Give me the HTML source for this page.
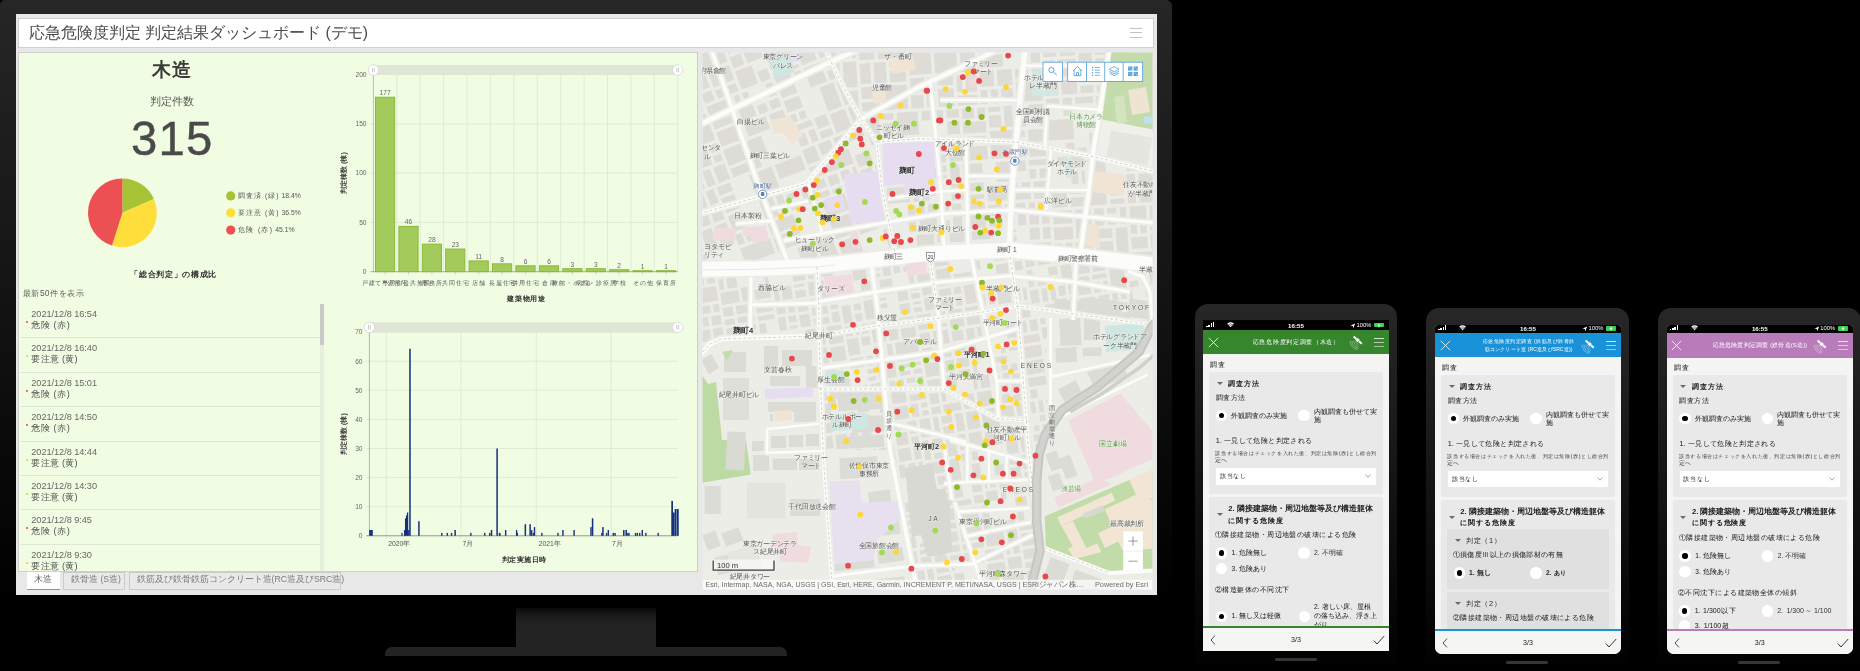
<!DOCTYPE html>
<html lang="ja"><head><meta charset="utf-8"><title>dashboard</title><style>
html,body{margin:0;padding:0;background:#000;}
body{width:1860px;height:671px;position:relative;overflow:hidden;font-family:"Liberation Sans",sans-serif;}
.a{position:absolute;}
.t{position:absolute;white-space:nowrap;}
.aa{position:absolute;left:0;top:0;width:1860px;height:671px;will-change:transform;}
</style></head><body><div class="aa">
<div class="a" style="left:0;top:0;width:1172px;height:610px;border-radius:5px 6px 6px 6px;background:linear-gradient(#272727 0px,#262626 4px,#131313 302px,#000 600px);"></div>
<div class="a" style="left:516px;top:608px;width:140px;height:40px;background:linear-gradient(#0a0a0a,#1b1b1b 8px,#222 16px,#232323);"></div>
<div class="a" style="left:385px;top:647px;width:402px;height:9px;border-radius:7px 7px 0 0;background:#232323;"></div>
<div class="a" style="left:15.5px;top:14px;width:1141.5px;height:580.5px;background:#e8e8e8;"></div>
<div class="a" style="left:18.5px;top:18.5px;width:1134px;height:28.5px;background:#fff;box-shadow:0 0 0 1px #cfcfcf;"></div>
<div class="t" style="left:28.8px;top:23.4px;font-size:16px;line-height:19.2px;color:#4a4a4a;font-weight:normal;font-size:15.84px;width:337.4px;text-align:justify;text-align-last:justify;text-justify:inter-character;">応急危険度判定 判定結果ダッシュボード (デモ)</div>
<div class="a" style="left:1130px;top:27.6px;width:11.8px;height:1.3px;background:#c2c2c2;"></div>
<div class="a" style="left:1130px;top:32.1px;width:11.8px;height:1.3px;background:#c2c2c2;"></div>
<div class="a" style="left:1130px;top:36.6px;width:11.8px;height:1.3px;background:#c2c2c2;"></div>
<div class="a" style="left:19px;top:52.5px;width:677.5px;height:518.5px;background:#f0fde2;box-shadow:0 0 0 1px #cdcdcd;"></div>
<div class="t" style="left:152.3px;top:58.4px;font-size:19.4px;line-height:23.3px;color:#3a3a3a;font-weight:bold;width:39.0px;text-align:justify;text-align-last:justify;text-justify:inter-character;">木造</div>
<div class="t" style="left:149.9px;top:94.5px;font-size:10.9px;line-height:13.1px;color:#555;font-weight:normal;width:44.0px;text-align:justify;text-align-last:justify;text-justify:inter-character;">判定件数</div>
<div class="t" style="left:-28.4px;width:400px;text-align:center;top:110.5px;font-size:47.2px;line-height:56.6px;color:#4a4a4a;font-weight:normal;-webkit-text-stroke:0.45px #4a4a4a;letter-spacing:1.2px;text-indent:1.2px;">315</div>
<svg class="a" style="left:0;top:0" width="700" height="600" viewBox="0 0 700 600"><path d="M122.4,212.8 L122.40,178.40 A34.4,34.4 0 0 1 153.88,198.94 Z" fill="#a5c334"/><path d="M122.4,212.8 L153.88,198.94 A34.4,34.4 0 0 1 111.98,245.58 Z" fill="#ffde3b"/><path d="M122.4,212.8 L111.98,245.58 A34.4,34.4 0 0 1 122.40,178.40 Z" fill="#ec5052"/><circle cx="230.7" cy="195.9" r="4.6" fill="#a5c334"/><circle cx="230.7" cy="212.8" r="4.6" fill="#ffde3b"/><circle cx="230.7" cy="230.1" r="4.6" fill="#ec5052"/></svg>
<div class="t" style="left:238.2px;top:192.1px;font-size:6.8px;line-height:8.2px;color:#555;font-weight:normal;width:62.6px;text-align:justify;text-align-last:justify;text-justify:inter-character;">調査済 (緑)  18.4%</div>
<div class="t" style="left:238.2px;top:209.0px;font-size:6.8px;line-height:8.2px;color:#555;font-weight:normal;width:62.6px;text-align:justify;text-align-last:justify;text-justify:inter-character;">要注意 (黄)  36.5%</div>
<div class="t" style="left:238.2px;top:226.3px;font-size:6.8px;line-height:8.2px;color:#555;font-weight:normal;width:56.3px;text-align:justify;text-align-last:justify;text-justify:inter-character;">危険 (赤)  45.1%</div>
<div class="t" style="left:130.3px;top:269.3px;font-size:8.4px;line-height:10.1px;color:#333;font-weight:bold;width:86.0px;text-align:justify;text-align-last:justify;text-justify:inter-character;">「総合判定」の構成比</div>
<div class="t" style="left:22.9px;top:287.7px;font-size:8.8px;line-height:10.6px;color:#5a5a5a;font-weight:normal;font-size:8.37px;width:60.9px;text-align:justify;text-align-last:justify;text-justify:inter-character;">最新50件を表示</div>
<div class="a" style="left:19.5px;top:300px;width:305px;height:271px;overflow:hidden;"><div class="a" style="left:0;top:37.4px;width:300.5px;height:1px;background:#dde7d5;"></div><div class="t" style="left:11.8px;top:9.0px;font-size:9.2px;line-height:11px;color:#666;letter-spacing:-0.048px;">2021/12/8 16:54</div><div class="t" style="left:11.8px;top:20.0px;font-size:9.2px;line-height:11px;color:#555;width:38.4px;text-align:justify;text-align-last:justify;text-justify:inter-character;">危険 (赤)</div><div class="a" style="left:6px;top:20.9px;width:2.2px;height:2.2px;border-radius:1.1px;background:#e5474b;"></div><div class="a" style="left:0;top:71.8px;width:300.5px;height:1px;background:#dde7d5;"></div><div class="t" style="left:11.8px;top:43.4px;font-size:9.2px;line-height:11px;color:#666;letter-spacing:-0.048px;">2021/12/8 16:40</div><div class="t" style="left:11.8px;top:54.4px;font-size:9.2px;line-height:11px;color:#555;width:46.3px;text-align:justify;text-align-last:justify;text-justify:inter-character;">要注意 (黄)</div><div class="a" style="left:6px;top:55.3px;width:2.2px;height:2.2px;border-radius:1.1px;background:#f3c62f;"></div><div class="a" style="left:0;top:106.2px;width:300.5px;height:1px;background:#dde7d5;"></div><div class="t" style="left:11.8px;top:77.8px;font-size:9.2px;line-height:11px;color:#666;letter-spacing:-0.048px;">2021/12/8 15:01</div><div class="t" style="left:11.8px;top:88.8px;font-size:9.2px;line-height:11px;color:#555;width:38.4px;text-align:justify;text-align-last:justify;text-justify:inter-character;">危険 (赤)</div><div class="a" style="left:6px;top:89.7px;width:2.2px;height:2.2px;border-radius:1.1px;background:#e5474b;"></div><div class="a" style="left:0;top:140.6px;width:300.5px;height:1px;background:#dde7d5;"></div><div class="t" style="left:11.8px;top:112.2px;font-size:9.2px;line-height:11px;color:#666;letter-spacing:-0.048px;">2021/12/8 14:50</div><div class="t" style="left:11.8px;top:123.2px;font-size:9.2px;line-height:11px;color:#555;width:38.4px;text-align:justify;text-align-last:justify;text-justify:inter-character;">危険 (赤)</div><div class="a" style="left:6px;top:124.1px;width:2.2px;height:2.2px;border-radius:1.1px;background:#e5474b;"></div><div class="a" style="left:0;top:175.0px;width:300.5px;height:1px;background:#dde7d5;"></div><div class="t" style="left:11.8px;top:146.6px;font-size:9.2px;line-height:11px;color:#666;letter-spacing:-0.048px;">2021/12/8 14:44</div><div class="t" style="left:11.8px;top:157.6px;font-size:9.2px;line-height:11px;color:#555;width:46.3px;text-align:justify;text-align-last:justify;text-justify:inter-character;">要注意 (黄)</div><div class="a" style="left:6px;top:158.5px;width:2.2px;height:2.2px;border-radius:1.1px;background:#f3c62f;"></div><div class="a" style="left:0;top:209.4px;width:300.5px;height:1px;background:#dde7d5;"></div><div class="t" style="left:11.8px;top:181.0px;font-size:9.2px;line-height:11px;color:#666;letter-spacing:-0.048px;">2021/12/8 14:30</div><div class="t" style="left:11.8px;top:192.0px;font-size:9.2px;line-height:11px;color:#555;width:46.3px;text-align:justify;text-align-last:justify;text-justify:inter-character;">要注意 (黄)</div><div class="a" style="left:6px;top:192.9px;width:2.2px;height:2.2px;border-radius:1.1px;background:#f3c62f;"></div><div class="a" style="left:0;top:243.8px;width:300.5px;height:1px;background:#dde7d5;"></div><div class="t" style="left:11.8px;top:215.4px;font-size:9.2px;line-height:11px;color:#666;letter-spacing:-0.051px;">2021/12/8 9:45</div><div class="t" style="left:11.8px;top:226.4px;font-size:9.2px;line-height:11px;color:#555;width:38.4px;text-align:justify;text-align-last:justify;text-justify:inter-character;">危険 (赤)</div><div class="a" style="left:6px;top:227.3px;width:2.2px;height:2.2px;border-radius:1.1px;background:#e5474b;"></div><div class="a" style="left:0;top:278.2px;width:300.5px;height:1px;background:#dde7d5;"></div><div class="t" style="left:11.8px;top:249.8px;font-size:9.2px;line-height:11px;color:#666;letter-spacing:-0.051px;">2021/12/8 9:30</div><div class="t" style="left:11.8px;top:260.8px;font-size:9.2px;line-height:11px;color:#555;width:46.3px;text-align:justify;text-align-last:justify;text-justify:inter-character;">要注意 (黄)</div><div class="a" style="left:6px;top:261.7px;width:2.2px;height:2.2px;border-radius:1.1px;background:#f3c62f;"></div><div class="a" style="left:300.7px;top:3.5px;width:4px;height:268px;background:#e6efdc;"></div><div class="a" style="left:300.7px;top:3.8px;width:4px;height:41.2px;background:#c9c9c9;"></div></div>
<svg class="a" style="left:0;top:0" width="700" height="600" viewBox="0 0 700 600" shape-rendering="auto"><rect x="373.4" y="65" width="304.30000000000007" height="9.9" fill="#e0e6d6"/><line x1="370.4" y1="222.4" x2="677.7" y2="222.4" stroke="#dbe7cf" stroke-width="0.8"/><line x1="370.4" y1="173.1" x2="677.7" y2="173.1" stroke="#dbe7cf" stroke-width="0.8"/><line x1="370.4" y1="123.8" x2="677.7" y2="123.8" stroke="#dbe7cf" stroke-width="0.8"/><line x1="370.4" y1="74.5" x2="677.7" y2="74.5" stroke="#dbe7cf" stroke-width="0.8"/><line x1="396.8" y1="74.9" x2="396.8" y2="271.7" stroke="#dbe7cf" stroke-width="0.8"/><line x1="385.1" y1="271.7" x2="385.1" y2="274.7" stroke="#c3cfb6" stroke-width="0.8"/><line x1="420.2" y1="74.9" x2="420.2" y2="271.7" stroke="#dbe7cf" stroke-width="0.8"/><line x1="408.5" y1="271.7" x2="408.5" y2="274.7" stroke="#c3cfb6" stroke-width="0.8"/><line x1="443.6" y1="74.9" x2="443.6" y2="271.7" stroke="#dbe7cf" stroke-width="0.8"/><line x1="431.9" y1="271.7" x2="431.9" y2="274.7" stroke="#c3cfb6" stroke-width="0.8"/><line x1="467.0" y1="74.9" x2="467.0" y2="271.7" stroke="#dbe7cf" stroke-width="0.8"/><line x1="455.3" y1="271.7" x2="455.3" y2="274.7" stroke="#c3cfb6" stroke-width="0.8"/><line x1="490.4" y1="74.9" x2="490.4" y2="271.7" stroke="#dbe7cf" stroke-width="0.8"/><line x1="478.7" y1="271.7" x2="478.7" y2="274.7" stroke="#c3cfb6" stroke-width="0.8"/><line x1="513.8" y1="74.9" x2="513.8" y2="271.7" stroke="#dbe7cf" stroke-width="0.8"/><line x1="502.1" y1="271.7" x2="502.1" y2="274.7" stroke="#c3cfb6" stroke-width="0.8"/><line x1="537.3" y1="74.9" x2="537.3" y2="271.7" stroke="#dbe7cf" stroke-width="0.8"/><line x1="525.5" y1="271.7" x2="525.5" y2="274.7" stroke="#c3cfb6" stroke-width="0.8"/><line x1="560.7" y1="74.9" x2="560.7" y2="271.7" stroke="#dbe7cf" stroke-width="0.8"/><line x1="549.0" y1="271.7" x2="549.0" y2="274.7" stroke="#c3cfb6" stroke-width="0.8"/><line x1="584.1" y1="74.9" x2="584.1" y2="271.7" stroke="#dbe7cf" stroke-width="0.8"/><line x1="572.4" y1="271.7" x2="572.4" y2="274.7" stroke="#c3cfb6" stroke-width="0.8"/><line x1="607.5" y1="74.9" x2="607.5" y2="271.7" stroke="#dbe7cf" stroke-width="0.8"/><line x1="595.8" y1="271.7" x2="595.8" y2="274.7" stroke="#c3cfb6" stroke-width="0.8"/><line x1="630.9" y1="74.9" x2="630.9" y2="271.7" stroke="#dbe7cf" stroke-width="0.8"/><line x1="619.2" y1="271.7" x2="619.2" y2="274.7" stroke="#c3cfb6" stroke-width="0.8"/><line x1="654.3" y1="74.9" x2="654.3" y2="271.7" stroke="#dbe7cf" stroke-width="0.8"/><line x1="642.6" y1="271.7" x2="642.6" y2="274.7" stroke="#c3cfb6" stroke-width="0.8"/><line x1="677.7" y1="74.9" x2="677.7" y2="271.7" stroke="#dbe7cf" stroke-width="0.8"/><line x1="666.0" y1="271.7" x2="666.0" y2="274.7" stroke="#c3cfb6" stroke-width="0.8"/><line x1="373.4" y1="74.9" x2="373.4" y2="271.7" stroke="#b9c6ab" stroke-width="1"/><line x1="370.4" y1="271.7" x2="677.7" y2="271.7" stroke="#9fb08f" stroke-width="1"/><rect x="375.5" y="97.2" width="19.2" height="174.5" fill="#a3cb5c" stroke="#88b52f" stroke-width="0.9"/><rect x="398.9" y="226.3" width="19.2" height="45.4" fill="#a3cb5c" stroke="#88b52f" stroke-width="0.9"/><rect x="422.3" y="244.1" width="19.2" height="27.6" fill="#a3cb5c" stroke="#88b52f" stroke-width="0.9"/><rect x="445.7" y="249.0" width="19.2" height="22.7" fill="#a3cb5c" stroke="#88b52f" stroke-width="0.9"/><rect x="469.1" y="260.9" width="19.2" height="10.8" fill="#a3cb5c" stroke="#88b52f" stroke-width="0.9"/><rect x="492.5" y="263.8" width="19.2" height="7.9" fill="#a3cb5c" stroke="#88b52f" stroke-width="0.9"/><rect x="515.9" y="265.8" width="19.2" height="5.9" fill="#a3cb5c" stroke="#88b52f" stroke-width="0.9"/><rect x="539.4" y="265.8" width="19.2" height="5.9" fill="#a3cb5c" stroke="#88b52f" stroke-width="0.9"/><rect x="562.8" y="268.7" width="19.2" height="3.0" fill="#a3cb5c" stroke="#88b52f" stroke-width="0.9"/><rect x="586.2" y="268.7" width="19.2" height="3.0" fill="#a3cb5c" stroke="#88b52f" stroke-width="0.9"/><rect x="609.6" y="269.7" width="19.2" height="2.0" fill="#a3cb5c" stroke="#88b52f" stroke-width="0.9"/><rect x="633.0" y="270.7" width="19.2" height="1.0" fill="#a3cb5c" stroke="#88b52f" stroke-width="0.9"/><rect x="656.4" y="270.7" width="19.2" height="1.0" fill="#a3cb5c" stroke="#88b52f" stroke-width="0.9"/><circle cx="373.4" cy="70" r="5.2" fill="#fff" stroke="#d6d6d6" stroke-width="0.8"/><line x1="372.5" y1="67.7" x2="372.5" y2="72.3" stroke="#aaa" stroke-width="0.6"/><line x1="374.29999999999995" y1="67.7" x2="374.29999999999995" y2="72.3" stroke="#aaa" stroke-width="0.6"/><circle cx="677.7" cy="70" r="5.2" fill="#fff" stroke="#d6d6d6" stroke-width="0.8"/><line x1="676.8000000000001" y1="67.7" x2="676.8000000000001" y2="72.3" stroke="#aaa" stroke-width="0.6"/><line x1="678.6" y1="67.7" x2="678.6" y2="72.3" stroke="#aaa" stroke-width="0.6"/><rect x="369.4" y="322.3" width="308.30000000000007" height="10" fill="#e0e6d6"/><line x1="366.4" y1="506.7" x2="677.7" y2="506.7" stroke="#dbe7cf" stroke-width="0.8"/><line x1="366.4" y1="477.6" x2="677.7" y2="477.6" stroke="#dbe7cf" stroke-width="0.8"/><line x1="366.4" y1="448.5" x2="677.7" y2="448.5" stroke="#dbe7cf" stroke-width="0.8"/><line x1="366.4" y1="419.4" x2="677.7" y2="419.4" stroke="#dbe7cf" stroke-width="0.8"/><line x1="366.4" y1="390.3" x2="677.7" y2="390.3" stroke="#dbe7cf" stroke-width="0.8"/><line x1="366.4" y1="361.2" x2="677.7" y2="361.2" stroke="#dbe7cf" stroke-width="0.8"/><line x1="366.4" y1="332.1" x2="677.7" y2="332.1" stroke="#dbe7cf" stroke-width="0.8"/><line x1="386.3" y1="332.3" x2="386.3" y2="538.8" stroke="#dbe7cf" stroke-width="0.8"/><line x1="460.9" y1="332.3" x2="460.9" y2="538.8" stroke="#dbe7cf" stroke-width="0.8"/><line x1="536.3" y1="332.3" x2="536.3" y2="538.8" stroke="#dbe7cf" stroke-width="0.8"/><line x1="611.1" y1="332.3" x2="611.1" y2="538.8" stroke="#dbe7cf" stroke-width="0.8"/><line x1="369.4" y1="332.3" x2="369.4" y2="535.8" stroke="#9a9a9a" stroke-width="0.7"/><line x1="366.4" y1="535.8" x2="677.7" y2="535.8" stroke="#8f9a86" stroke-width="1"/><rect x="369.18" y="530.0" width="3.6" height="5.8" fill="#14307e"/><rect x="401.41" y="532.9" width="1.2" height="2.9" fill="#14307e"/><rect x="404.00" y="530.0" width="1.2" height="5.8" fill="#14307e"/><rect x="404.99" y="518.3" width="1.2" height="17.5" fill="#14307e"/><rect x="405.99" y="515.4" width="1.2" height="20.4" fill="#14307e"/><rect x="406.93" y="512.5" width="1.3" height="23.3" fill="#14307e"/><rect x="408.12" y="530.0" width="1.3" height="5.8" fill="#14307e"/><rect x="409.22" y="348.7" width="1.5" height="187.1" fill="#14307e"/><rect x="418.17" y="521.2" width="1.5" height="14.6" fill="#14307e"/><rect x="441.10" y="532.9" width="1.4" height="2.9" fill="#14307e"/><rect x="446.67" y="532.9" width="1.4" height="2.9" fill="#14307e"/><rect x="450.84" y="532.9" width="1.4" height="2.9" fill="#14307e"/><rect x="454.37" y="530.0" width="1.5" height="5.8" fill="#14307e"/><rect x="470.14" y="532.9" width="1.4" height="2.9" fill="#14307e"/><rect x="484.06" y="532.9" width="1.4" height="2.9" fill="#14307e"/><rect x="489.04" y="532.9" width="1.4" height="2.9" fill="#14307e"/><rect x="490.78" y="530.0" width="1.5" height="5.8" fill="#14307e"/><rect x="496.35" y="448.5" width="1.5" height="87.3" fill="#14307e"/><rect x="498.78" y="532.9" width="1.8" height="2.9" fill="#14307e"/><rect x="504.95" y="530.0" width="1.4" height="5.8" fill="#14307e"/><rect x="515.94" y="530.0" width="1.3" height="5.8" fill="#14307e"/><rect x="516.79" y="532.9" width="1.2" height="2.9" fill="#14307e"/><rect x="524.60" y="524.2" width="1.5" height="11.6" fill="#14307e"/><rect x="529.37" y="524.2" width="1.5" height="11.6" fill="#14307e"/><rect x="531.06" y="530.0" width="1.3" height="5.8" fill="#14307e"/><rect x="532.65" y="532.9" width="1.3" height="2.9" fill="#14307e"/><rect x="533.80" y="527.1" width="1.4" height="8.7" fill="#14307e"/><rect x="541.16" y="532.9" width="1.4" height="2.9" fill="#14307e"/><rect x="557.27" y="532.9" width="1.4" height="2.9" fill="#14307e"/><rect x="562.24" y="530.0" width="1.4" height="5.8" fill="#14307e"/><rect x="573.38" y="530.0" width="1.4" height="5.8" fill="#14307e"/><rect x="590.29" y="527.1" width="1.4" height="8.7" fill="#14307e"/><rect x="591.83" y="518.3" width="1.5" height="17.5" fill="#14307e"/><rect x="602.18" y="527.1" width="1.5" height="8.7" fill="#14307e"/><rect x="601.13" y="532.9" width="1.2" height="2.9" fill="#14307e"/><rect x="605.86" y="532.9" width="1.3" height="2.9" fill="#14307e"/><rect x="607.60" y="530.0" width="1.4" height="5.8" fill="#14307e"/><rect x="612.57" y="532.9" width="1.4" height="2.9" fill="#14307e"/><rect x="614.36" y="532.9" width="1.4" height="2.9" fill="#14307e"/><rect x="623.06" y="530.0" width="1.5" height="5.8" fill="#14307e"/><rect x="625.45" y="530.0" width="1.5" height="5.8" fill="#14307e"/><rect x="627.14" y="532.9" width="1.3" height="2.9" fill="#14307e"/><rect x="628.34" y="532.9" width="1.3" height="2.9" fill="#14307e"/><rect x="634.85" y="532.9" width="1.4" height="2.9" fill="#14307e"/><rect x="636.64" y="532.9" width="1.4" height="2.9" fill="#14307e"/><rect x="639.03" y="532.9" width="1.4" height="2.9" fill="#14307e"/><rect x="641.61" y="530.0" width="1.4" height="5.8" fill="#14307e"/><rect x="645.19" y="532.9" width="1.4" height="2.9" fill="#14307e"/><rect x="657.53" y="532.9" width="1.4" height="2.9" fill="#14307e"/><rect x="671.30" y="500.9" width="1.7" height="34.9" fill="#14307e"/><rect x="672.89" y="512.5" width="1.7" height="23.3" fill="#14307e"/><rect x="674.63" y="509.0" width="1.8" height="26.8" fill="#14307e"/><rect x="676.72" y="509.0" width="2.0" height="26.8" fill="#14307e"/><circle cx="369.4" cy="327.3" r="5.2" fill="#fff" stroke="#d6d6d6" stroke-width="0.8"/><line x1="368.5" y1="325" x2="368.5" y2="329.6" stroke="#aaa" stroke-width="0.6"/><line x1="370.29999999999995" y1="325" x2="370.29999999999995" y2="329.6" stroke="#aaa" stroke-width="0.6"/><circle cx="677.7" cy="327.3" r="5.2" fill="#fff" stroke="#d6d6d6" stroke-width="0.8"/><line x1="676.8000000000001" y1="325" x2="676.8000000000001" y2="329.6" stroke="#aaa" stroke-width="0.6"/><line x1="678.6" y1="325" x2="678.6" y2="329.6" stroke="#aaa" stroke-width="0.6"/></svg>
<div class="t" style="left:185.1px;width:400px;text-align:center;top:89.0px;font-size:6.6px;line-height:7.9px;color:#666;font-weight:normal;">177</div>
<div class="t" style="left:208.5px;width:400px;text-align:center;top:218.2px;font-size:6.6px;line-height:7.9px;color:#666;font-weight:normal;">46</div>
<div class="t" style="left:231.9px;width:400px;text-align:center;top:235.9px;font-size:6.6px;line-height:7.9px;color:#666;font-weight:normal;">28</div>
<div class="t" style="left:255.3px;width:400px;text-align:center;top:240.9px;font-size:6.6px;line-height:7.9px;color:#666;font-weight:normal;">23</div>
<div class="t" style="left:278.7px;width:400px;text-align:center;top:252.7px;font-size:6.6px;line-height:7.9px;color:#666;font-weight:normal;">11</div>
<div class="t" style="left:302.1px;width:400px;text-align:center;top:255.7px;font-size:6.6px;line-height:7.9px;color:#666;font-weight:normal;">8</div>
<div class="t" style="left:325.5px;width:400px;text-align:center;top:257.6px;font-size:6.6px;line-height:7.9px;color:#666;font-weight:normal;">6</div>
<div class="t" style="left:349.0px;width:400px;text-align:center;top:257.6px;font-size:6.6px;line-height:7.9px;color:#666;font-weight:normal;">6</div>
<div class="t" style="left:372.4px;width:400px;text-align:center;top:260.6px;font-size:6.6px;line-height:7.9px;color:#666;font-weight:normal;">3</div>
<div class="t" style="left:395.8px;width:400px;text-align:center;top:260.6px;font-size:6.6px;line-height:7.9px;color:#666;font-weight:normal;">3</div>
<div class="t" style="left:419.2px;width:400px;text-align:center;top:261.6px;font-size:6.6px;line-height:7.9px;color:#666;font-weight:normal;">2</div>
<div class="t" style="left:442.6px;width:400px;text-align:center;top:262.6px;font-size:6.6px;line-height:7.9px;color:#666;font-weight:normal;">1</div>
<div class="t" style="left:466.0px;width:400px;text-align:center;top:262.6px;font-size:6.6px;line-height:7.9px;color:#666;font-weight:normal;">1</div>
<div class="t" style="left:-33.5px;width:400px;text-align:right;top:268.0px;font-size:6.6px;line-height:7.9px;color:#666;font-weight:normal;">0</div>
<div class="t" style="left:-33.5px;width:400px;text-align:right;top:218.7px;font-size:6.6px;line-height:7.9px;color:#666;font-weight:normal;">50</div>
<div class="t" style="left:-33.5px;width:400px;text-align:right;top:169.4px;font-size:6.6px;line-height:7.9px;color:#666;font-weight:normal;">100</div>
<div class="t" style="left:-33.5px;width:400px;text-align:right;top:120.1px;font-size:6.6px;line-height:7.9px;color:#666;font-weight:normal;">150</div>
<div class="t" style="left:-33.5px;width:400px;text-align:right;top:70.8px;font-size:6.6px;line-height:7.9px;color:#666;font-weight:normal;">200</div>
<div class="t" style="left:361.8px;top:279.4px;font-size:6.6px;line-height:7.9px;color:#555;font-weight:normal;font-size:6.24px;width:46.6px;text-align:justify;text-align-last:justify;text-justify:inter-character;">戸建て専用住宅</div>
<div class="t" style="left:386.9px;top:279.4px;font-size:6.6px;line-height:7.9px;color:#555;font-weight:normal;font-size:6.48px;width:43.2px;text-align:justify;text-align-last:justify;text-justify:inter-character;">公営/公共施設</div>
<div class="t" style="left:421.9px;top:279.4px;font-size:6.6px;line-height:7.9px;color:#555;font-weight:normal;font-size:6.24px;width:20.0px;text-align:justify;text-align-last:justify;text-justify:inter-character;">事務所</div>
<div class="t" style="left:442.0px;top:279.4px;font-size:6.6px;line-height:7.9px;color:#555;font-weight:normal;font-size:6.24px;width:26.6px;text-align:justify;text-align-last:justify;text-justify:inter-character;">共同住宅</div>
<div class="t" style="left:472.1px;top:279.4px;font-size:6.6px;line-height:7.9px;color:#555;font-weight:normal;font-size:6.24px;width:13.3px;text-align:justify;text-align-last:justify;text-justify:inter-character;">店舗</div>
<div class="t" style="left:488.8px;top:279.4px;font-size:6.6px;line-height:7.9px;color:#555;font-weight:normal;font-size:6.24px;width:26.6px;text-align:justify;text-align-last:justify;text-justify:inter-character;">長屋住宅</div>
<div class="t" style="left:512.2px;top:279.4px;font-size:6.6px;line-height:7.9px;color:#555;font-weight:normal;font-size:6.24px;width:26.6px;text-align:justify;text-align-last:justify;text-justify:inter-character;">併用住宅</div>
<div class="t" style="left:542.3px;top:279.4px;font-size:6.6px;line-height:7.9px;color:#555;font-weight:normal;font-size:6.24px;width:13.3px;text-align:justify;text-align-last:justify;text-justify:inter-character;">倉庫</div>
<div class="t" style="left:552.4px;top:279.4px;font-size:6.6px;line-height:7.9px;color:#555;font-weight:normal;font-size:6.24px;width:39.9px;text-align:justify;text-align-last:justify;text-justify:inter-character;">旅館・ホテル</div>
<div class="t" style="left:575.8px;top:279.4px;font-size:6.6px;line-height:7.9px;color:#555;font-weight:normal;font-size:6.24px;width:39.9px;text-align:justify;text-align-last:justify;text-justify:inter-character;">病院・診療所</div>
<div class="t" style="left:612.5px;top:279.4px;font-size:6.6px;line-height:7.9px;color:#555;font-weight:normal;font-size:6.24px;width:13.3px;text-align:justify;text-align-last:justify;text-justify:inter-character;">学校</div>
<div class="t" style="left:632.6px;top:279.4px;font-size:6.6px;line-height:7.9px;color:#555;font-weight:normal;font-size:6.24px;width:20.0px;text-align:justify;text-align-last:justify;text-justify:inter-character;">その他</div>
<div class="t" style="left:656.0px;top:279.4px;font-size:6.6px;line-height:7.9px;color:#555;font-weight:normal;font-size:6.24px;width:20.0px;text-align:justify;text-align-last:justify;text-justify:inter-character;">保育所</div>
<div class="t" style="left:507.0px;top:295.0px;font-size:7.4px;line-height:8.9px;color:#333;font-weight:bold;width:38.0px;text-align:justify;text-align-last:justify;text-justify:inter-character;">建築物用途</div>
<div class="t" style="left:294px;top:168px;width:100px;text-align:center;font-size:7.2px;line-height:10px;color:#444;font-weight:bold;transform:rotate(-90deg);">判定棟数 (棟)</div>
<div class="t" style="left:-37.5px;width:400px;text-align:right;top:532.1px;font-size:6.6px;line-height:7.9px;color:#666;font-weight:normal;">0</div>
<div class="t" style="left:-37.5px;width:400px;text-align:right;top:503.0px;font-size:6.6px;line-height:7.9px;color:#666;font-weight:normal;">10</div>
<div class="t" style="left:-37.5px;width:400px;text-align:right;top:473.9px;font-size:6.6px;line-height:7.9px;color:#666;font-weight:normal;">20</div>
<div class="t" style="left:-37.5px;width:400px;text-align:right;top:444.8px;font-size:6.6px;line-height:7.9px;color:#666;font-weight:normal;">30</div>
<div class="t" style="left:-37.5px;width:400px;text-align:right;top:415.7px;font-size:6.6px;line-height:7.9px;color:#666;font-weight:normal;">40</div>
<div class="t" style="left:-37.5px;width:400px;text-align:right;top:386.6px;font-size:6.6px;line-height:7.9px;color:#666;font-weight:normal;">50</div>
<div class="t" style="left:-37.5px;width:400px;text-align:right;top:357.5px;font-size:6.6px;line-height:7.9px;color:#666;font-weight:normal;">60</div>
<div class="t" style="left:-37.5px;width:400px;text-align:right;top:328.4px;font-size:6.6px;line-height:7.9px;color:#666;font-weight:normal;">70</div>
<div class="t" style="left:199.2px;width:400px;text-align:center;top:540.3px;font-size:6.8px;line-height:8.2px;color:#555;font-weight:normal;">2020年</div>
<div class="t" style="left:267.9px;width:400px;text-align:center;top:540.3px;font-size:6.8px;line-height:8.2px;color:#555;font-weight:normal;">7月</div>
<div class="t" style="left:349.8px;width:400px;text-align:center;top:540.3px;font-size:6.8px;line-height:8.2px;color:#555;font-weight:normal;">2021年</div>
<div class="t" style="left:417.4px;width:400px;text-align:center;top:540.3px;font-size:6.8px;line-height:8.2px;color:#555;font-weight:normal;">7月</div>
<div class="t" style="left:501.5px;top:555.6px;font-size:7.4px;line-height:8.9px;color:#333;font-weight:bold;width:44.5px;text-align:justify;text-align-last:justify;text-justify:inter-character;">判定実施日時</div>
<div class="t" style="left:294px;top:429px;width:100px;text-align:center;font-size:7.2px;line-height:10px;color:#444;font-weight:bold;transform:rotate(-90deg);">判定棟数 (棟)</div>
<div class="a" style="left:26.5px;top:571.5px;width:33.3px;height:17.5px;background:#fff;border-bottom:1.6px solid #5b9fd0;"></div>
<div class="t" style="left:34.2px;top:574.4px;font-size:9.3px;line-height:11.2px;color:#666;font-weight:normal;width:18.0px;text-align:justify;text-align-last:justify;text-justify:inter-character;">木造</div>
<div class="a" style="left:63.3px;top:571.5px;width:62px;height:18.5px;background:#e9e9e9;box-shadow:inset 0 0 0 1px #cbcbcb;"></div>
<div class="t" style="left:71.0px;top:574.4px;font-size:9.3px;line-height:11.2px;color:#7a7a7a;font-weight:normal;font-size:8.65px;width:47.6px;text-align:justify;text-align-last:justify;text-justify:inter-character;">鉄骨造 (S造)</div>
<div class="a" style="left:129.4px;top:571.5px;width:211.8px;height:18.5px;background:#e9e9e9;box-shadow:inset 0 0 0 1px #cbcbcb;"></div>
<div class="t" style="left:136.5px;top:574.4px;font-size:9.3px;line-height:11.2px;color:#7a7a7a;font-weight:normal;font-size:8.71px;width:197.6px;text-align:justify;text-align-last:justify;text-justify:inter-character;">鉄筋及び鉄骨鉄筋コンクリート造(RC造及びSRC造)</div>
<svg class="a" style="left:702px;top:52px" width="452" height="539" viewBox="702 52 452 539" font-family="Liberation Sans, sans-serif"><clipPath id="mapclip"><rect x="702.5" y="52.5" width="450.0" height="537.2"/></clipPath><g clip-path="url(#mapclip)"><rect x="702.5" y="52.5" width="450.0" height="537.2" fill="#edede8"/><clipPath id="bc1"><polygon points="700.0,50.0 826.0,50.0 861.0,119.0 877.0,142.0 884.0,190.0 895.0,252.0 800.0,266.0 700.0,262.0"/></clipPath><g clip-path="url(#bc1)"><path transform="rotate(-21 797.5 158.0)" d="M718.8,65.2h8.5v6.2h-8.5zM718.8,74.8h8.5v5.2h-8.5zM704.6,83.4h22.8v28.1h-22.8zM689.3,114.9h11.5v10.2h-11.5zM689.3,128.6h11.5v4.8h-11.5zM704.2,114.9h11.7v18.5h-11.7zM719.3,114.9h8.0v7.8h-8.0zM719.3,126.2h8.0v7.2h-8.0zM689.3,136.8h11.0v16.4h-11.0zM703.7,136.8h8.1v16.4h-8.1zM715.2,136.8h12.2v16.4h-12.2zM730.7,9.2h20.8v13.9h-20.8zM730.7,26.5h20.8v16.4h-20.8zM754.9,20.5h11.8v6.6h-11.8zM754.9,30.5h11.8v12.4h-11.8zM730.7,46.3h10.5v14.0h-10.5zM730.7,63.7h10.5v10.6h-10.5zM744.6,46.3h10.6v16.0h-10.6zM758.6,46.3h8.1v16.0h-8.1zM744.6,65.7h22.0v8.6h-22.0zM770.1,9.2h13.8v27.1h-13.8zM770.1,39.7h11.5v11.8h-11.5zM785.0,39.7h16.2v11.8h-16.2zM770.1,54.9h17.4v19.4h-17.4zM790.8,63.1h10.3v11.2h-10.3zM730.7,77.7h25.5v13.2h-25.5zM730.7,94.3h25.5v7.4h-25.5zM730.7,105.1h25.5v15.5h-25.5zM759.6,77.7h5.7v8.5h-5.7zM768.7,77.7h6.0v8.5h-6.0zM759.6,89.6h15.0v14.2h-15.0zM793.6,77.7h7.6v13.6h-7.6zM778.0,94.7h9.5v9.1h-9.5zM790.9,94.7h10.2v9.1h-10.2zM759.6,107.2h23.1v13.4h-23.1zM786.1,107.2h15.1v13.4h-15.1zM730.7,124.0h21.5v16.8h-21.5zM730.7,144.2h21.5v9.0h-21.5zM755.6,124.0h15.7v16.9h-15.7zM755.6,144.3h5.8v8.9h-5.8zM684.2,156.6h12.0v14.7h-12.0zM699.7,156.6h8.3v14.7h-8.3zM684.2,174.7h9.2v14.1h-9.2zM696.8,174.7h11.1v14.1h-11.1zM664.6,192.1h12.5v19.0h-12.5zM664.5,214.5h12.6v15.6h-12.6zM680.5,192.1h11.4v23.4h-11.4zM695.3,192.1h12.6v8.5h-12.6zM695.3,204.1h12.6v11.5h-12.6zM711.4,156.6h14.1v8.7h-14.1zM711.4,168.7h14.1v15.3h-14.1zM711.4,187.4h13.6v16.7h-13.6zM711.4,207.5h6.8v11.2h-6.8zM721.5,207.5h7.3v11.2h-7.3zM711.4,222.1h31.2v16.5h-31.2zM746.0,156.6h24.2v22.6h-24.2zM746.0,182.6h13.8v22.5h-13.8zM763.2,182.6h7.0v22.5h-7.0zM773.6,156.6h27.6v15.1h-27.6zM773.6,188.5h11.8v5.8h-11.8zM773.6,197.6h11.8v7.5h-11.8zM788.8,188.5h12.4v16.6h-12.4zM746.0,208.5h27.1v12.2h-27.1zM746.0,224.1h27.1v14.4h-27.1zM711.4,242.0h10.1v8.8h-10.1zM724.9,242.0h4.8v8.8h-4.8zM764.7,242.0h16.3v23.5h-16.3zM784.4,242.0h16.8v23.5h-16.8zM764.7,268.8h16.2v13.0h-16.2zM784.2,268.8h17.0v13.0h-17.0zM804.6,25.8h21.1v18.4h-21.1zM804.6,47.6h27.2v19.1h-27.2zM804.6,70.1h16.4v12.1h-16.4zM804.6,85.6h16.4v11.2h-16.4zM824.4,70.1h7.4v3.5h-7.4zM824.4,77.0h7.4v8.1h-7.4zM835.2,47.6h15.7v25.5h-15.7zM854.3,47.6h10.3v8.0h-10.3zM854.3,58.9h20.8v14.1h-20.8zM835.2,76.5h17.4v20.4h-17.4zM856.0,76.5h19.1v7.8h-19.1zM856.0,87.7h6.9v9.2h-6.9zM866.3,87.7h8.8v9.2h-8.8zM804.6,100.3h16.5v12.0h-16.5zM804.6,115.7h6.6v7.9h-6.6zM814.6,115.7h6.5v7.9h-6.5zM804.6,127.0h19.1v6.1h-19.1zM804.6,136.5h8.8v12.5h-8.8zM816.8,136.5h6.9v12.5h-6.9zM827.1,127.0h12.5v11.4h-12.5zM827.1,141.7h12.5v7.3h-12.5zM843.0,100.3h14.8v25.4h-14.8zM861.1,100.3h14.0v25.4h-14.0zM843.0,129.0h16.1v20.0h-16.1zM862.5,129.0h12.6v20.0h-12.6zM804.6,152.4h13.3v15.6h-13.3zM804.6,171.4h13.3v11.5h-13.3zM821.3,152.4h13.2v11.8h-13.2zM837.9,152.4h10.4v11.8h-10.4zM821.3,167.7h27.0v15.3h-27.0zM804.6,186.3h10.3v8.7h-10.3zM804.6,198.4h10.3v5.9h-10.3zM818.3,186.3h10.3v10.1h-10.3zM818.3,199.9h10.3v4.4h-10.3zM804.6,207.7h23.9v16.8h-23.9zM831.9,186.3h9.3v9.4h-9.3zM844.6,186.3h3.7v9.4h-3.7zM831.9,199.1h16.4v9.9h-16.4zM831.9,212.4h16.4v12.0h-16.4zM851.7,152.4h16.3v9.1h-16.3zM871.4,152.4h8.7v6.3h-8.7zM871.4,162.1h8.7v10.8h-8.7zM851.7,176.3h14.8v12.7h-14.8zM851.7,192.4h11.5v14.0h-11.5zM866.5,192.4h13.6v14.0h-13.6zM866.0,209.8h14.1v14.6h-14.1zM804.6,227.9h21.0v20.1h-21.0zM804.6,251.4h21.0v24.7h-21.0zM829.0,227.9h18.3v7.2h-18.3zM829.0,238.5h18.3v13.8h-18.3zM850.7,227.9h10.2v24.5h-10.2zM851.3,255.7h9.6v7.1h-9.6zM851.3,266.2h9.6v9.9h-9.6zM823.9,279.5h12.4v10.1h-12.4zM839.7,279.5h21.3v16.4h-21.3zM864.4,227.9h12.3v17.8h-12.3zM864.4,249.1h20.0v7.7h-20.0zM864.4,260.2h9.4v13.0h-9.4z" fill="#dddcd7"/></g><clipPath id="bc2"><polygon points="826.0,50.0 1160.0,50.0 1160.0,262.0 1009.0,243.0 895.0,252.0 884.0,190.0 877.0,142.0 861.0,119.0"/></clipPath><g clip-path="url(#bc2)"><path transform="rotate(-3.5 993.0 156.0)" d="M826.7,25.7h18.1v8.9h-18.1zM826.7,38.0h16.3v11.9h-16.3zM846.4,38.0h8.3v11.9h-8.3zM858.1,38.0h4.0v11.9h-4.0zM824.1,53.3h11.3v9.9h-11.3zM838.8,53.3h6.4v9.9h-6.4zM833.2,66.6h11.9v12.3h-11.9zM848.6,53.3h13.5v25.6h-13.5zM846.1,82.3h15.9v21.3h-15.9zM865.5,31.2h15.2v21.1h-15.2zM884.1,34.1h27.2v18.2h-27.2zM865.5,55.7h10.4v20.4h-10.4zM879.3,55.7h12.3v20.4h-12.3zM895.0,55.7h16.3v5.3h-16.3zM895.0,64.5h16.3v11.7h-16.3zM865.5,79.5h17.5v11.8h-17.5zM865.5,94.7h17.5v8.9h-17.5zM886.3,79.5h25.0v24.1h-25.0zM914.7,27.7h22.1v16.3h-22.1zM914.7,47.4h22.1v22.8h-22.1zM954.5,27.7h8.3v18.5h-8.3zM940.2,49.6h22.3v20.5h-22.3zM966.0,49.6h15.1v20.5h-15.1zM914.7,73.5h14.0v13.7h-14.0zM932.1,73.5h6.6v13.7h-6.6zM914.7,90.6h12.3v13.1h-12.3zM930.4,90.6h8.3v13.1h-8.3zM942.1,73.5h15.7v9.1h-15.7zM942.1,86.1h15.7v17.6h-15.7zM961.2,73.5h5.6v16.8h-5.6zM970.2,73.5h10.9v16.8h-10.9zM961.2,93.8h19.9v9.9h-19.9zM984.5,27.7h24.3v24.0h-24.3zM984.5,55.1h24.3v11.9h-24.3zM1012.1,27.7h13.4v21.1h-13.4zM1028.7,52.2h4.5v14.8h-4.5zM1036.6,52.2h9.3v14.8h-9.3zM984.5,70.4h14.0v15.7h-14.0zM1001.9,70.4h14.9v15.7h-14.9zM984.5,89.5h6.9v14.1h-6.9zM994.8,89.5h6.8v14.1h-6.8zM1005.0,89.5h11.8v14.1h-11.8zM1020.2,70.4h13.1v9.9h-13.1zM1036.7,70.4h9.2v9.9h-9.2zM1020.2,83.7h25.7v19.9h-25.7zM854.5,107.0h8.8v10.1h-8.8zM866.7,107.0h14.8v19.6h-14.8zM865.4,130.0h16.1v7.2h-16.1zM865.4,140.6h4.4v14.8h-4.4zM873.2,140.6h8.3v14.8h-8.3zM868.1,158.8h13.4v10.4h-13.4zM868.1,172.6h13.4v16.8h-13.4zM868.1,192.8h13.4v20.0h-13.4zM874.9,216.2h6.6v11.8h-6.6zM874.9,231.4h6.6v4.8h-6.6zM884.9,107.0h11.1v6.4h-11.1zM884.9,116.9h11.1v13.2h-11.1zM899.4,107.0h21.3v23.0h-21.3zM884.9,133.4h15.2v7.1h-15.2zM884.9,143.9h15.2v6.1h-15.2zM884.9,153.4h5.9v6.0h-5.9zM894.2,153.4h5.8v6.0h-5.8zM903.5,133.4h17.2v15.1h-17.2zM903.5,151.9h17.2v7.5h-17.2zM924.1,107.0h21.7v9.3h-21.7zM924.1,134.4h8.2v14.1h-8.2zM935.7,134.4h10.1v5.6h-10.1zM935.7,143.4h10.1v5.1h-10.1zM924.1,151.9h21.7v7.5h-21.7zM884.9,162.8h8.1v15.2h-8.1zM896.4,162.8h11.0v15.2h-11.0zM884.9,181.4h22.6v15.6h-22.6zM910.8,171.6h16.2v12.0h-16.2zM910.8,187.0h6.1v10.0h-6.1zM920.3,187.0h6.7v10.0h-6.7zM930.4,162.8h5.0v12.4h-5.0zM938.9,162.8h6.9v6.0h-6.9zM938.9,172.2h6.9v3.0h-6.9zM904.7,200.3h7.7v12.8h-7.7zM904.7,216.6h7.7v10.1h-7.7zM915.8,200.3h5.7v10.2h-5.7zM924.9,200.3h8.3v10.2h-8.3zM915.8,214.0h17.4v12.7h-17.4zM936.6,200.3h9.2v13.6h-9.2zM936.6,217.3h9.2v9.4h-9.2zM949.2,107.0h12.4v8.3h-12.4zM949.2,118.7h12.4v13.2h-12.4zM964.9,107.0h11.6v10.1h-11.6zM980.0,107.0h7.8v10.1h-7.8zM964.9,120.5h22.8v11.4h-22.8zM949.2,135.3h5.6v12.7h-5.6zM958.2,135.3h7.1v12.7h-7.1zM949.2,151.4h16.1v7.5h-16.1zM968.7,135.3h19.0v6.6h-19.0zM968.7,145.3h19.0v13.6h-19.0zM991.2,107.0h12.0v5.1h-12.0zM991.2,115.5h12.0v12.2h-12.0zM1006.5,107.0h8.4v20.7h-8.4zM991.2,131.1h23.8v27.8h-23.8zM1018.4,121.1h9.6v7.5h-9.6zM1031.4,107.0h14.5v9.4h-14.5zM1041.2,119.9h4.7v8.7h-4.7zM1018.4,132.0h7.7v6.7h-7.7zM1018.4,142.1h7.7v2.4h-7.7zM1018.4,147.8h7.7v11.1h-7.7zM1029.5,132.0h16.4v12.5h-16.4zM1029.5,147.8h16.4v11.1h-16.4zM949.2,162.3h9.5v16.0h-9.5zM962.0,162.3h19.7v16.0h-19.7zM949.2,181.7h14.3v16.1h-14.3zM966.9,181.7h14.9v8.3h-14.9zM966.9,193.4h14.9v4.5h-14.9zM949.2,201.3h9.2v25.5h-9.2zM961.8,201.3h20.0v25.5h-20.0zM995.2,162.3h13.9v20.0h-13.9zM985.2,185.7h24.0v15.5h-24.0zM1012.6,162.3h12.3v10.7h-12.3zM1028.3,162.3h17.6v5.7h-17.6zM1028.3,171.5h6.8v9.2h-6.8zM1038.5,171.5h7.4v9.2h-7.4zM1012.6,184.1h3.5v7.0h-3.5zM1019.5,184.1h8.8v7.0h-8.8zM1012.6,194.5h15.7v6.8h-15.7zM1031.7,184.1h14.2v6.8h-14.2zM1031.7,194.2h14.2v7.0h-14.2zM985.2,204.6h13.4v11.6h-13.4zM985.2,219.7h6.5v7.0h-6.5zM995.1,219.7h3.5v7.0h-3.5zM1002.0,204.6h20.2v6.6h-20.2zM1002.0,214.7h8.7v12.0h-8.7zM1014.1,214.7h8.1v12.0h-8.1zM1025.6,204.6h6.3v5.9h-6.3zM1035.3,204.6h10.6v5.9h-10.6zM1025.6,214.0h9.4v12.7h-9.4zM1038.3,214.0h7.5v12.7h-7.5zM884.9,230.1h10.1v11.8h-10.1zM884.9,245.3h6.7v14.6h-6.7zM895.0,245.3h13.3v14.6h-13.3zM911.7,230.1h17.3v17.4h-17.3zM932.3,230.1h9.4v8.9h-9.4zM932.3,242.4h9.4v9.6h-9.4zM945.1,230.1h18.6v9.4h-18.6zM967.1,230.1h18.6v8.4h-18.6zM967.1,241.9h5.0v16.2h-5.0zM975.6,241.9h10.2v16.2h-10.2zM989.1,245.3h9.6v12.9h-9.6zM1002.2,230.1h9.3v3.2h-9.3zM1002.2,236.7h9.3v8.8h-9.3zM1002.2,248.8h19.5v13.1h-19.5zM1025.0,230.1h9.9v11.9h-9.9zM1038.3,230.1h7.6v11.9h-7.6zM1025.0,245.5h20.9v16.5h-20.9zM1049.3,35.2h5.7v9.9h-5.7zM1058.4,35.2h4.0v9.9h-4.0zM1049.3,48.4h13.1v12.1h-13.1zM1065.8,35.2h15.3v25.3h-15.3zM1049.3,63.9h10.5v17.2h-10.5zM1063.2,63.9h17.9v17.2h-17.9zM1049.3,84.5h12.9v14.4h-12.9zM1065.5,84.5h15.6v14.4h-15.6zM1084.5,44.2h9.4v11.1h-9.4zM1097.4,47.1h3.8v8.2h-3.8zM1104.6,47.1h6.5v8.2h-6.5zM1084.5,58.7h13.1v13.6h-13.1zM1101.0,58.7h10.1v2.8h-10.1zM1101.0,64.8h10.1v7.4h-10.1zM1114.5,35.2h20.1v19.6h-20.1zM1114.5,58.2h20.1v14.0h-20.1zM1084.5,75.6h6.9v12.2h-6.9zM1094.8,75.6h2.6v12.2h-2.6zM1084.5,91.2h12.9v7.6h-12.9zM1100.8,75.6h9.7v12.6h-9.7zM1100.8,91.6h9.7v7.3h-9.7zM1113.9,75.6h20.7v8.4h-20.7zM1113.9,87.4h10.8v11.5h-10.8zM1128.1,87.4h6.5v6.2h-6.5zM1138.0,54.7h7.3v11.0h-7.3zM1148.7,54.7h4.1v11.0h-4.1zM1156.2,54.7h10.4v11.0h-10.4zM1170.0,52.3h6.6v13.4h-6.6zM1138.0,69.1h11.4v10.7h-11.4zM1152.8,69.1h7.9v4.8h-7.9zM1152.8,77.3h7.9v7.0h-7.9zM1164.1,69.1h4.9v15.2h-4.9zM1152.8,87.7h7.0v11.2h-7.0zM1163.2,87.7h5.9v11.2h-5.9zM1172.5,69.1h9.9v8.0h-9.9zM1172.5,80.5h9.9v6.6h-9.9zM1049.3,102.3h13.2v8.8h-13.2zM1049.3,114.5h2.5v5.9h-2.5zM1065.9,102.3h9.1v18.1h-9.1zM1049.3,123.8h25.7v20.2h-25.7zM1066.8,147.5h8.2v10.0h-8.2zM1078.4,102.3h17.8v6.6h-17.8zM1099.6,102.3h21.9v20.2h-21.9zM1078.4,153.1h8.5v4.3h-8.5zM1090.3,139.0h10.1v18.5h-10.1zM1103.8,143.1h17.7v14.4h-17.7zM1049.3,160.9h4.2v9.1h-4.2zM1056.9,160.9h9.8v9.1h-9.8zM1070.0,160.9h13.5v11.9h-13.5zM1070.0,176.1h6.9v12.9h-6.9zM1080.4,176.1h3.2v12.9h-3.2zM1049.3,192.5h15.1v18.9h-15.1zM1067.8,192.5h15.8v6.5h-15.8zM1067.8,202.4h15.8v9.0h-15.8zM1087.0,160.9h17.5v18.8h-17.5zM1087.0,183.1h17.5v8.6h-17.5zM1107.9,160.9h13.6v10.8h-13.6zM1087.0,195.1h16.9v16.3h-16.9zM1107.3,195.1h14.2v7.8h-14.2zM1107.3,206.2h14.2v5.2h-14.2zM1146.5,102.3h17.7v5.5h-17.7zM1146.5,111.2h17.7v10.3h-17.7zM1124.9,124.9h12.8v17.3h-12.8zM1141.1,124.9h5.3v17.3h-5.3zM1149.8,124.9h14.4v17.3h-14.4zM1167.6,102.3h8.1v7.4h-8.1zM1167.6,113.1h8.1v9.1h-8.1zM1167.6,125.6h12.9v16.6h-12.9zM1124.9,145.6h9.5v18.8h-9.5zM1137.8,145.6h5.9v9.5h-5.9zM1147.1,145.6h4.7v9.5h-4.7zM1137.8,158.5h14.0v5.9h-14.0zM1124.9,167.9h13.1v11.3h-13.1zM1141.4,167.9h10.4v11.3h-10.4zM1124.9,182.5h8.6v12.4h-8.6zM1136.9,182.5h14.9v12.4h-14.9zM1124.9,198.3h8.2v13.1h-8.2zM1136.5,198.3h15.3v13.1h-15.3zM1155.2,155.6h11.7v13.4h-11.7zM1155.2,172.4h10.1v2.4h-10.1zM1155.2,178.2h10.1v7.1h-10.1zM1168.7,172.4h7.2v12.9h-7.2zM1155.2,188.8h8.7v6.7h-8.7zM1155.2,198.8h8.7v12.6h-8.7zM1049.3,214.8h18.8v13.1h-18.8zM1049.3,231.3h18.8v12.5h-18.8zM1071.5,214.8h15.9v29.1h-15.9zM1049.3,247.3h7.4v16.5h-7.4zM1060.1,247.3h6.7v6.6h-6.7zM1060.1,257.3h6.7v6.4h-6.7zM1070.1,247.3h17.2v16.5h-17.2zM1090.7,214.8h9.4v17.1h-9.4zM1103.6,214.8h9.1v5.9h-9.1zM1103.6,224.1h9.1v7.7h-9.1zM1116.1,214.8h6.5v17.1h-6.5zM1090.7,235.3h16.8v9.4h-16.8zM1090.7,248.1h16.8v15.7h-16.8zM1111.0,235.3h11.6v28.5h-11.6zM1069.8,267.2h19.4v9.5h-19.4zM1092.6,267.2h17.0v14.6h-17.0zM1126.0,214.8h16.5v14.9h-16.5zM1145.9,214.8h13.2v14.9h-13.2zM1126.0,233.0h6.3v9.3h-6.3zM1135.7,233.0h6.3v9.3h-6.3zM1126.0,245.7h16.0v11.7h-16.0zM1145.4,233.0h13.6v7.1h-13.6zM1145.4,243.5h13.6v13.9h-13.6zM1162.4,230.1h10.9v6.3h-10.9zM1162.4,239.8h10.4v17.6h-10.4zM1126.0,260.8h23.4v23.9h-23.4zM1152.8,260.8h11.0v23.9h-11.0z" fill="#dddcd7"/></g><clipPath id="bc3"><polygon points="700.0,277.0 817.0,274.0 931.0,261.0 1009.0,257.0 1078.0,263.0 1160.0,272.0 1160.0,324.0 1048.0,308.0 1046.0,360.0 1050.0,420.0 1040.0,445.0 1036.0,590.0 918.0,590.0 905.0,520.0 890.0,450.0 823.0,450.0 819.0,340.0 700.0,342.0"/></clipPath><g clip-path="url(#bc3)"><path transform="rotate(-9 930.0 423.5)" d="M709.4,233.1h7.8v16.4h-7.8zM720.5,233.1h8.3v5.2h-8.3zM720.5,241.5h8.3v9.6h-8.3zM732.0,233.1h8.0v9.2h-8.0zM732.0,245.5h8.0v5.5h-8.0zM720.5,254.3h19.5v14.7h-19.5zM707.5,272.1h10.5v8.4h-10.5zM707.5,283.7h10.5v9.0h-10.5zM721.2,272.1h9.6v7.9h-9.6zM734.0,272.1h6.0v7.9h-6.0zM721.2,283.3h6.1v9.4h-6.1zM730.5,283.3h9.5v9.4h-9.5zM707.5,295.9h6.5v5.4h-6.5zM707.5,304.4h6.5v4.2h-6.5zM717.2,295.9h9.8v12.8h-9.8zM730.2,295.9h9.8v12.8h-9.8zM743.2,235.1h9.2v9.9h-9.2zM755.5,237.2h5.2v7.8h-5.2zM763.9,237.2h9.7v7.8h-9.7zM784.8,239.4h8.2v5.6h-8.2zM743.2,248.2h4.9v10.5h-4.9zM751.3,248.2h9.9v10.5h-9.9zM743.2,261.9h18.0v12.0h-18.0zM764.4,260.0h9.6v13.9h-9.6zM789.1,248.2h3.8v12.8h-3.8zM777.2,264.2h15.8v9.7h-15.8zM743.2,277.1h10.0v8.9h-10.0zM743.2,289.2h10.0v5.5h-10.0zM756.4,277.1h16.9v8.2h-16.9zM756.4,288.5h16.9v6.2h-16.9zM743.2,297.9h16.3v10.8h-16.3zM762.7,297.9h10.6v5.3h-10.6zM762.7,306.4h10.6v2.3h-10.6zM776.5,277.1h16.5v10.6h-16.5zM776.5,290.9h16.5v4.6h-16.5zM776.5,298.7h6.7v9.9h-6.7zM817.2,241.2h12.2v20.9h-12.2zM832.6,247.6h9.9v7.1h-9.9zM832.6,257.8h9.9v4.3h-9.9zM845.8,247.6h11.8v5.7h-11.8zM845.8,256.4h11.8v5.6h-11.8zM796.2,265.3h4.9v13.4h-4.9zM804.3,265.3h9.8v13.4h-9.8zM817.2,265.3h10.6v3.0h-10.6zM817.2,271.5h10.6v7.2h-10.6zM796.2,281.9h8.8v10.3h-8.8zM808.1,281.9h6.3v10.3h-6.3zM796.2,295.5h7.4v13.2h-7.4zM806.7,295.5h7.7v6.7h-7.7zM806.7,305.3h7.7v3.3h-7.7zM817.6,281.9h10.2v11.1h-10.2zM817.6,296.2h10.2v12.4h-10.2zM831.0,265.3h8.8v13.5h-8.8zM831.0,282.0h8.8v6.0h-8.8zM843.0,265.3h4.0v7.9h-4.0zM843.0,276.4h14.6v11.6h-14.6zM831.0,291.2h5.5v7.5h-5.5zM839.7,291.2h7.0v7.5h-7.0zM831.0,301.9h15.7v6.7h-15.7zM849.9,291.2h7.7v4.1h-7.7zM849.9,298.5h7.7v10.2h-7.7zM701.7,311.8h14.5v9.4h-14.5zM719.4,311.8h8.7v6.7h-8.7zM731.3,311.8h3.6v6.7h-3.6zM738.0,311.8h3.3v8.3h-3.3zM744.5,311.8h3.0v8.3h-3.0zM738.0,323.3h9.5v3.0h-9.5zM767.3,311.8h9.4v3.6h-9.4zM767.3,318.7h9.4v7.4h-9.4zM779.9,321.3h7.2v4.7h-7.2zM790.3,311.8h9.0v12.7h-9.0zM790.3,327.7h9.0v5.7h-9.0zM802.5,324.5h7.8v8.9h-7.8zM820.9,311.8h19.0v17.1h-19.0zM820.9,332.1h10.5v15.6h-10.5zM834.6,332.1h5.3v5.7h-5.3zM834.6,341.0h5.3v6.7h-5.3zM843.1,311.8h14.5v18.0h-14.5zM843.1,333.1h14.5v14.6h-14.5zM814.3,350.9h18.1v17.2h-18.1zM814.3,371.3h5.7v13.3h-5.7zM823.2,371.3h9.2v13.3h-9.2zM835.6,350.9h10.6v11.8h-10.6zM849.4,350.9h8.2v4.8h-8.2zM849.4,358.9h8.2v3.7h-8.2zM835.6,365.8h22.0v18.8h-22.0zM814.3,387.8h5.9v16.4h-5.9zM823.5,387.8h10.5v16.4h-10.5zM814.3,407.4h19.7v9.6h-19.7zM849.5,387.8h8.1v8.9h-8.1zM847.0,400.0h10.6v4.5h-10.6zM847.0,407.6h10.6v9.3h-10.6zM813.7,420.2h17.7v12.5h-17.7zM813.7,435.9h7.9v9.0h-7.9zM824.8,435.9h6.6v9.0h-6.6zM834.6,420.2h11.4v6.9h-11.4zM834.6,430.3h11.4v3.8h-11.4zM849.2,420.2h8.4v13.9h-8.4zM834.6,437.3h13.4v7.6h-13.4zM851.2,437.3h6.4v7.6h-6.4zM867.7,243.8h5.9v11.7h-5.9zM876.8,243.8h13.6v8.6h-13.6zM876.8,255.6h13.6v15.2h-13.6zM893.6,241.4h8.0v10.9h-8.0zM893.6,255.5h4.9v8.7h-4.9zM901.8,255.5h2.4v8.7h-2.4zM893.6,267.5h10.6v3.4h-10.6zM907.4,255.5h7.6v15.3h-7.6zM860.8,293.9h8.8v17.4h-8.8zM872.8,293.9h7.2v6.5h-7.2zM872.8,303.6h7.2v7.8h-7.2zM883.2,274.1h15.9v14.8h-15.9zM902.3,274.1h12.7v14.8h-12.7zM883.2,292.0h10.3v19.4h-10.3zM896.7,292.0h9.7v2.5h-9.7zM896.7,297.7h9.7v4.7h-9.7zM918.2,246.5h10.2v9.6h-10.2zM931.7,246.5h5.7v9.6h-5.7zM940.5,246.0h4.1v10.2h-4.1zM947.8,246.0h4.0v10.2h-4.0zM955.0,250.2h7.6v6.0h-7.6zM975.4,251.7h7.3v4.5h-7.3zM985.9,252.3h9.6v3.9h-9.6zM918.2,259.4h6.4v10.3h-6.4zM927.8,259.4h9.1v2.4h-9.1zM927.8,265.0h9.1v4.7h-9.1zM931.7,272.9h5.2v10.0h-5.2zM940.1,259.4h9.0v12.1h-9.0zM952.3,259.4h4.0v12.1h-4.0zM940.1,274.7h16.2v8.2h-16.2zM918.2,286.1h10.1v11.9h-10.1zM931.6,286.1h8.4v3.2h-8.4zM931.6,292.5h8.4v5.5h-8.4zM918.2,301.1h10.5v10.2h-10.5zM932.0,301.1h8.0v2.5h-8.0zM932.0,306.8h8.0v4.6h-8.0zM943.2,286.1h13.1v9.8h-13.1zM943.2,299.1h13.1v12.3h-13.1zM959.5,259.4h14.0v10.2h-14.0zM959.5,272.8h14.0v16.7h-14.0zM976.7,279.8h18.8v9.7h-18.8zM959.5,292.7h12.0v7.0h-12.0zM959.5,302.9h12.0v8.5h-12.0zM974.7,292.7h6.6v7.1h-6.6zM974.7,303.0h6.6v8.4h-6.6zM984.5,292.7h11.0v18.7h-11.0zM860.8,314.6h7.1v9.9h-7.1zM871.1,314.6h2.9v9.9h-2.9zM877.2,314.6h6.6v9.9h-6.6zM860.8,327.6h11.5v16.4h-11.5zM875.5,327.6h8.2v8.6h-8.2zM860.8,347.3h13.8v9.8h-13.8zM877.8,347.3h6.0v9.8h-6.0zM876.5,360.3h7.3v4.6h-7.3zM876.5,368.1h7.3v4.1h-7.3zM887.0,314.6h12.7v20.8h-12.7zM902.9,314.6h9.7v6.7h-9.7zM902.9,324.5h9.7v11.0h-9.7zM915.8,314.6h14.6v7.8h-14.6zM915.8,325.6h14.6v9.8h-14.6zM887.0,338.6h9.2v13.7h-9.2zM899.4,338.6h5.2v13.7h-5.2zM887.0,355.5h17.6v16.7h-17.6zM907.8,338.6h22.6v19.1h-22.6zM907.8,360.9h10.9v3.8h-10.9zM907.8,367.9h10.9v4.3h-10.9zM921.9,360.9h8.5v3.2h-8.5zM921.9,367.3h8.5v4.9h-8.5zM860.8,375.4h6.8v10.1h-6.8zM870.8,375.4h3.2v10.1h-3.2zM860.8,388.7h13.2v5.2h-13.2zM877.2,375.4h15.8v8.1h-15.8zM877.2,386.7h15.8v7.2h-15.8zM860.8,397.0h11.2v4.9h-11.2zM860.8,405.1h11.2v9.7h-11.2zM882.6,397.0h10.4v8.4h-10.4zM875.2,408.7h6.4v6.2h-6.4zM884.8,408.7h8.1v6.2h-8.1zM896.2,375.4h6.1v8.2h-6.1zM905.5,375.4h5.2v8.2h-5.2zM896.2,386.8h14.5v11.9h-14.5zM913.9,375.4h8.3v4.8h-8.3zM913.9,383.4h8.3v5.9h-8.3zM925.4,375.4h5.0v13.8h-5.0zM913.9,392.4h16.5v6.2h-16.5zM896.2,401.9h14.3v13.0h-14.3zM913.6,401.9h7.3v13.0h-7.3zM924.1,401.9h6.3v4.7h-6.3zM924.1,409.8h6.3v5.1h-6.3zM933.6,314.6h14.2v6.9h-14.2zM933.6,324.6h14.2v5.3h-14.2zM951.0,314.6h11.3v8.8h-11.3zM951.0,326.6h11.3v3.3h-11.3zM933.6,333.1h10.2v12.0h-10.2zM933.6,348.3h10.2v12.3h-10.2zM946.9,333.1h15.3v14.0h-15.3zM946.9,350.4h15.3v10.2h-15.3zM965.5,314.6h14.0v17.9h-14.0zM982.6,314.6h12.9v17.9h-12.9zM965.5,335.7h11.4v10.3h-11.4zM965.5,349.1h11.4v11.4h-11.4zM980.1,335.7h8.0v13.6h-8.0zM991.3,335.7h4.2v13.6h-4.2zM980.1,352.5h7.2v8.1h-7.2zM933.6,363.7h15.5v13.6h-15.5zM933.6,380.6h15.5v10.4h-15.5zM952.2,363.7h11.0v11.8h-11.0zM952.2,378.7h11.0v12.2h-11.0zM933.6,394.2h9.0v10.5h-9.0zM933.6,407.9h9.0v7.0h-9.0zM945.7,394.2h4.1v9.8h-4.1zM945.7,407.1h17.5v7.7h-17.5zM966.4,363.7h11.7v9.1h-11.7zM966.4,376.0h11.7v4.7h-11.7zM981.3,363.7h14.2v4.1h-14.2zM981.3,371.0h3.9v9.7h-3.9zM979.0,383.9h4.1v13.0h-4.1zM986.3,383.9h9.3v13.0h-9.3zM966.4,400.1h11.3v14.7h-11.3zM980.9,400.1h14.6v14.7h-14.6zM998.7,257.2h5.6v5.8h-5.6zM1007.5,257.2h8.7v5.8h-8.7zM998.7,266.2h5.6v13.2h-5.6zM1019.4,257.2h10.8v16.5h-10.8zM1033.4,257.2h12.7v5.8h-12.7zM1033.4,266.2h12.7v7.5h-12.7zM1019.4,276.9h12.8v10.9h-12.8zM1035.3,276.9h10.7v8.8h-10.7zM998.7,304.1h5.5v11.3h-5.5zM1007.4,304.1h6.0v11.3h-6.0zM998.7,318.6h8.3v5.9h-8.3zM1010.2,318.6h3.2v5.9h-3.2zM998.7,327.8h5.6v6.1h-5.6zM1007.5,327.8h5.9v6.1h-5.9zM1016.6,304.1h13.2v12.5h-13.2zM1033.0,304.1h6.3v12.5h-6.3zM1042.5,304.1h3.5v12.5h-3.5zM1033.9,319.8h12.2v14.0h-12.2zM1049.2,269.3h9.2v15.1h-9.2zM1061.6,269.3h12.0v15.1h-12.0zM1076.9,272.2h7.5v12.3h-7.5zM1087.6,272.2h6.2v12.3h-6.2zM1049.2,287.7h5.7v17.0h-5.7zM1058.2,297.0h9.4v7.6h-9.4zM1070.8,287.7h9.1v8.6h-9.1zM1083.1,287.7h10.7v17.0h-10.7zM1049.2,307.9h8.3v13.4h-8.3zM1060.8,307.9h5.6v13.4h-5.6zM1069.6,307.9h5.1v13.4h-5.1zM1062.2,324.5h12.4v9.4h-12.4zM1077.8,307.9h6.9v9.8h-6.9zM1087.9,307.9h5.9v9.8h-5.9zM1077.8,320.8h6.7v13.0h-6.7zM1087.8,320.8h6.0v4.3h-6.0zM1087.8,328.3h6.0v5.5h-6.0zM1020.0,337.0h10.2v14.8h-10.2zM1011.4,355.1h5.0v10.1h-5.0zM998.7,368.4h17.7v5.8h-17.7zM1019.6,355.1h10.6v9.5h-10.6zM1033.4,337.0h7.4v11.5h-7.4zM1044.0,337.0h7.8v11.5h-7.8zM1033.4,351.7h18.3v7.9h-18.3zM1033.4,362.8h18.3v11.4h-18.3zM998.7,377.3h7.5v5.5h-7.5zM998.7,386.1h7.5v7.9h-7.5zM1009.4,377.3h6.3v5.0h-6.3zM1009.4,385.5h6.3v8.5h-6.3zM1018.8,377.3h6.4v7.2h-6.4zM1028.4,377.3h2.1v7.2h-2.1zM1018.8,387.8h11.7v6.2h-11.7zM998.7,397.2h3.2v5.9h-3.2zM1005.1,397.2h8.1v5.9h-8.1zM998.7,406.3h3.2v8.5h-3.2zM1005.1,406.3h8.0v8.5h-8.0zM1016.3,397.2h14.1v8.2h-14.1zM1016.3,408.6h14.1v6.2h-14.1zM1033.7,377.3h18.1v13.6h-18.1zM1033.7,394.2h18.1v8.8h-18.1zM1033.7,406.2h7.0v8.6h-7.0zM1055.0,337.0h4.9v6.0h-4.9zM1055.0,346.3h9.4v11.3h-9.4zM1067.6,337.0h8.4v9.6h-8.4zM1067.6,349.8h8.4v7.8h-8.4zM1079.2,337.0h7.9v8.9h-7.9zM1090.2,337.0h3.6v8.9h-3.6zM1055.0,367.5h7.4v5.2h-7.4zM1065.6,360.8h6.6v11.9h-6.6zM1055.0,375.8h7.6v7.5h-7.6zM1055.0,386.5h8.1v11.1h-8.1zM1055.0,400.9h8.2v14.0h-8.2zM1097.0,274.8h13.5v11.9h-13.5zM1113.7,274.8h13.8v12.0h-13.8zM1097.0,289.9h14.8v9.4h-14.8zM1115.0,289.9h12.4v9.4h-12.4zM1097.0,302.5h12.8v17.9h-12.8zM1113.0,302.5h14.5v4.2h-14.5zM1113.0,309.9h6.5v10.4h-6.5zM1122.8,309.9h4.7v10.4h-4.7zM1130.7,283.7h15.9v12.7h-15.9zM1149.8,293.0h6.4v3.3h-6.4zM1159.4,290.7h7.0v5.7h-7.0zM1130.7,299.6h14.8v20.8h-14.8zM1148.7,299.6h17.7v6.6h-17.7zM1148.7,314.5h9.0v5.9h-9.0zM1160.9,309.4h5.5v11.0h-5.5zM1169.6,297.7h10.4v8.7h-10.4zM1169.6,309.6h10.4v10.8h-10.4zM1183.2,297.7h10.5v11.8h-10.5zM1183.2,312.7h10.5v7.7h-10.5zM1097.0,323.6h15.8v17.2h-15.8zM1116.0,323.6h10.7v8.2h-10.7zM1116.0,335.0h10.7v5.8h-10.7zM1129.9,323.6h5.7v7.5h-5.7zM1138.8,323.6h5.3v7.5h-5.3zM1129.9,334.3h4.8v6.5h-4.8zM1137.9,334.3h6.2v6.5h-6.2zM1097.0,344.0h8.5v18.7h-8.5zM1108.7,344.0h13.6v5.1h-13.6zM1136.6,344.0h7.6v13.2h-7.6zM1147.3,323.6h2.9v9.3h-2.9zM1163.5,323.6h4.7v9.3h-4.7zM1147.3,336.1h13.5v15.4h-13.5zM1147.3,354.7h9.8v11.9h-9.8zM1160.4,354.7h14.4v11.0h-14.4zM1177.9,323.6h14.2v8.9h-14.2zM1177.9,335.7h14.2v4.2h-14.2zM1177.9,343.1h14.2v15.1h-14.2zM860.8,418.1h9.9v9.0h-9.9zM860.8,430.2h9.9v6.6h-9.9zM860.8,440.1h11.8v16.6h-11.8zM875.8,440.1h15.1v16.6h-15.1zM894.1,418.1h9.8v6.7h-9.8zM907.1,418.1h9.5v6.7h-9.5zM894.1,428.0h11.8v12.7h-11.8zM909.0,428.0h7.6v2.8h-7.6zM909.0,434.0h7.6v6.7h-7.6zM894.1,443.9h12.4v12.8h-12.4zM909.7,443.9h6.9v12.8h-6.9zM873.6,459.9h7.6v5.5h-7.6zM870.1,476.0h11.1v9.4h-11.1zM884.4,459.9h4.8v13.3h-4.8zM892.4,459.9h6.2v13.3h-6.2zM901.8,459.9h7.6v13.9h-7.6zM912.6,459.9h4.0v13.9h-4.0zM901.8,477.0h14.7v8.4h-14.7zM919.8,418.1h10.6v18.2h-10.6zM933.6,418.1h5.3v18.2h-5.3zM942.1,418.1h10.5v7.7h-10.5zM942.1,429.0h10.5v7.3h-10.5zM919.8,439.5h6.0v5.3h-6.0zM919.8,447.9h6.0v11.2h-6.0zM929.0,439.5h11.0v11.1h-11.0zM929.0,453.8h11.0v5.4h-11.0zM943.2,439.5h9.5v19.7h-9.5zM919.8,462.4h17.8v11.5h-17.8zM919.8,477.1h5.7v8.3h-5.7zM928.7,477.1h8.9v8.3h-8.9zM940.8,462.4h11.9v23.0h-11.9zM955.9,418.1h7.7v17.7h-7.7zM966.8,418.1h12.5v17.7h-12.5zM955.9,439.0h7.2v16.0h-7.2zM966.2,439.0h13.0v16.0h-13.0zM982.4,418.1h16.5v19.9h-16.5zM982.4,441.1h16.5v13.9h-16.5zM955.9,458.2h7.3v8.5h-7.3zM966.4,458.2h6.3v8.5h-6.3zM955.9,469.9h5.4v15.5h-5.4zM964.5,469.9h8.2v15.5h-8.2zM986.4,474.9h12.5v10.5h-12.5zM880.2,488.6h8.8v6.7h-8.8zM880.2,498.5h8.8v9.0h-8.8zM903.0,488.6h6.7v6.3h-6.7zM892.3,498.0h4.7v9.5h-4.7zM900.1,498.0h9.6v9.5h-9.6zM872.4,510.8h14.5v16.2h-14.5zM878.0,530.2h8.8v13.9h-8.8zM890.1,510.8h8.2v2.0h-8.2zM890.1,516.0h8.2v4.8h-8.2zM890.1,524.0h8.2v5.3h-8.2zM901.5,510.8h8.3v5.0h-8.3zM890.1,532.5h7.6v11.6h-7.6zM900.9,540.6h8.9v3.4h-8.9zM913.0,501.4h16.3v6.2h-16.3zM932.4,488.6h7.5v2.6h-7.5zM932.4,494.4h7.5v4.3h-7.5zM932.4,501.8h7.5v5.7h-7.5zM913.0,510.8h8.7v11.1h-8.7zM924.8,510.8h15.1v11.1h-15.1zM913.0,525.1h5.8v6.6h-5.8zM922.0,525.1h5.8v6.6h-5.8zM913.0,534.9h14.8v9.2h-14.8zM931.0,525.1h9.0v5.9h-9.0zM931.0,534.2h9.0v9.9h-9.0zM878.4,547.3h9.9v11.6h-9.9zM880.0,562.1h8.3v8.8h-8.3zM880.0,574.1h8.3v6.4h-8.3zM891.5,547.3h4.9v17.0h-4.9zM899.6,547.3h10.6v4.2h-10.6zM899.6,554.6h10.6v9.7h-10.6zM891.5,567.5h9.6v12.9h-9.6zM904.2,567.5h5.9v12.9h-5.9zM878.6,583.7h12.6v9.1h-12.6zM894.4,583.7h15.8v9.4h-15.8zM913.4,547.3h12.5v5.4h-12.5zM913.4,555.9h12.5v5.8h-12.5zM913.4,565.0h12.5v7.8h-12.5zM929.1,547.3h10.9v6.9h-10.9zM929.1,557.4h10.9v4.9h-10.9zM929.1,565.5h2.8v7.3h-2.8zM913.4,576.0h13.8v10.2h-13.8zM930.3,576.0h9.6v10.2h-9.6zM931.7,589.3h8.3v4.7h-8.3zM931.7,597.2h8.3v9.0h-8.3zM943.2,488.6h8.4v12.6h-8.4zM943.2,504.4h15.5v5.3h-15.5zM961.8,488.6h9.5v10.0h-9.5zM961.8,501.8h9.5v7.9h-9.5zM974.5,488.6h2.1v7.8h-2.1zM979.8,488.6h5.9v7.8h-5.9zM974.5,499.6h11.2v10.1h-11.2zM988.9,488.6h10.0v10.7h-10.0zM988.9,502.5h5.3v7.2h-5.3zM943.2,512.9h20.9v16.0h-20.9zM943.2,532.1h20.9v13.1h-20.9zM943.2,548.3h20.9v5.7h-20.9zM967.2,512.9h7.1v13.2h-7.1zM967.2,529.3h6.8v8.6h-6.8zM977.2,529.3h7.9v8.6h-7.9zM988.3,531.2h10.6v6.7h-10.6zM967.2,541.2h18.5v12.8h-18.5zM988.9,541.2h10.0v12.8h-10.0zM943.2,557.2h4.6v11.9h-4.6zM950.9,564.3h10.1v4.8h-10.1zM943.2,587.5h17.9v18.8h-17.9zM964.3,557.2h17.8v11.2h-17.8zM964.3,571.6h17.8v8.6h-17.8zM985.3,557.2h3.8v8.1h-3.8zM992.3,557.2h6.7v8.1h-6.7zM985.3,568.5h13.7v11.6h-13.7zM964.3,583.4h10.1v9.6h-10.1zM964.3,596.2h10.1v10.1h-10.1zM977.5,583.4h21.4v12.4h-21.4zM990.4,599.0h8.5v7.3h-8.5zM976.2,609.5h9.3v7.7h-9.3zM988.8,609.5h10.2v7.7h-10.2zM1002.1,418.1h12.5v11.7h-12.5zM1017.8,418.1h11.0v11.7h-11.0zM1002.1,442.0h10.8v5.9h-10.8zM1032.0,418.1h4.9v11.4h-4.9zM1040.1,418.1h5.0v11.4h-5.0zM1039.3,432.7h5.7v6.1h-5.7zM1032.0,442.0h5.5v5.8h-5.5zM1040.7,442.0h4.4v5.8h-4.4zM1002.1,451.0h11.3v15.0h-11.3zM1016.6,451.0h10.7v15.0h-10.7zM1030.5,451.0h7.8v6.7h-7.8zM1041.5,451.0h3.5v6.7h-3.5zM1030.5,460.9h14.5v5.0h-14.5zM1048.2,418.1h12.9v9.3h-12.9zM1048.2,430.6h12.9v11.2h-12.9zM1048.2,444.9h6.2v12.0h-6.2zM1048.2,460.2h3.6v5.8h-3.6zM1002.1,469.2h10.0v7.8h-10.0zM1002.1,480.2h10.0v16.4h-10.0zM1015.4,469.2h19.2v14.3h-19.2zM1015.4,486.6h19.2v9.9h-19.2zM1002.1,499.7h11.2v7.1h-11.2zM1002.1,510.0h11.2v11.3h-11.2zM1016.6,499.7h18.0v11.5h-18.0zM1016.6,514.4h9.1v6.9h-9.1zM1028.9,514.4h5.7v6.9h-5.7zM1037.8,493.6h5.1v10.2h-5.1zM1002.1,524.5h6.3v9.4h-6.3zM1002.1,537.2h15.5v6.4h-15.5zM1020.8,524.5h12.5v19.0h-12.5zM1002.1,546.7h14.5v12.7h-14.5zM1002.1,562.7h15.8v10.0h-15.8zM1002.1,575.9h15.8v5.6h-15.8zM1021.2,571.7h3.3v9.8h-3.3zM1002.1,584.7h17.3v15.6h-17.3zM1002.1,603.5h16.4v19.4h-16.4z" fill="#dddcd7"/></g><polygon points="1102.0,119.0 1160.0,131.0 1160.0,172.0 1093.0,157.0" fill="#f0f0eb" /><rect x="704.6" y="486.0" width="16.2" height="28.0" fill="#dcdcd6"/><rect x="747.0" y="482.7" width="38.5" height="35.8" fill="#e4e4df"/><rect x="790.0" y="499.0" width="30.0" height="17.0" fill="#dcdcd6"/><rect x="704.6" y="532.4" width="13.9" height="16.2" fill="#dcdcd6" transform="rotate(-20 711.5 540.5)"/><rect x="723.0" y="530.0" width="18.6" height="14.0" fill="#dcdcd6" transform="rotate(-20 732.3 537.0)"/><rect x="753.0" y="455.0" width="16.0" height="16.0" fill="#dcdcd6"/><rect x="772.8" y="458.5" width="24.2" height="11.5" fill="#dcdcd6"/><rect x="799.0" y="459.0" width="20.0" height="11.0" fill="#dcdcd6"/><rect x="752.0" y="441.0" width="15.0" height="10.0" fill="#dcdcd6"/><rect x="771.0" y="436.0" width="15.0" height="12.0" fill="#dcdcd6"/><rect x="789.0" y="435.0" width="14.0" height="12.0" fill="#dcdcd6"/><rect x="806.0" y="434.0" width="13.0" height="12.0" fill="#dcdcd6"/><rect x="708.0" y="500.0" width="8.0" height="12.0" fill="#dcdcd6"/><rect x="730.0" y="548.0" width="30.0" height="24.0" fill="#e6e6e1" transform="rotate(-15 745.0 560.0)"/><rect x="716.0" y="556.0" width="14.0" height="18.0" fill="#dcdcd6" transform="rotate(-15 723.0 565.0)"/><rect x="724.0" y="352.0" width="22.0" height="20.0" fill="#dcdcd6"/><rect x="764.0" y="346.0" width="14.0" height="26.0" fill="#dcdcd6"/><rect x="782.0" y="350.0" width="30.0" height="16.0" fill="#dcdcd6"/><rect x="806.0" y="366.0" width="12.0" height="22.0" fill="#dcdcd6"/><rect x="770.0" y="376.0" width="30.0" height="10.0" fill="#dcdcd6"/><rect x="723.0" y="378.0" width="26.0" height="42.0" fill="#dedfd9"/><rect x="704.0" y="356.0" width="12.0" height="16.0" fill="#dcdcd6" transform="rotate(-30 710.0 364.0)"/><rect x="768.0" y="402.0" width="48.0" height="10.0" fill="#dcdcd6"/><rect x="770.0" y="414.0" width="3.0" height="7.0" fill="#dcdcd6"/><rect x="794.0" y="412.0" width="22.0" height="10.0" fill="#dcdcd6"/><rect x="704.0" y="400.0" width="14.0" height="36.0" fill="#d9ddd2"/><rect x="839.8" y="457.3" width="38.1" height="20.7" fill="#dcdcd6" transform="rotate(-3 858.8 467.6)"/><rect x="868.6" y="490.8" width="22.0" height="12.7" fill="#dcdcd6" transform="rotate(-8 879.6 497.1)"/><rect x="882.5" y="522.0" width="17.3" height="12.7" fill="#dcdcd6" transform="rotate(-8 891.1 528.4)"/><rect x="877.9" y="548.6" width="25.4" height="13.8" fill="#dcdcd6" transform="rotate(-8 890.6 555.5)"/><rect x="834.0" y="559.0" width="40.4" height="10.4" fill="#dcdcd6" transform="rotate(-5 854.2 564.2)"/><rect x="836.0" y="436.0" width="48.0" height="12.0" fill="#dcdcd6" transform="rotate(-3 860.0 442.0)"/><rect x="838.0" y="392.0" width="46.0" height="18.0" fill="#dcdcd6" transform="rotate(-3 861.0 401.0)"/><rect x="852.0" y="416.0" width="32.0" height="16.0" fill="#dcdcd6" transform="rotate(-3 868.0 424.0)"/><rect x="828.0" y="396.0" width="8.0" height="14.0" fill="#dcdcd6" transform="rotate(-3 832.0 403.0)"/><rect x="836.0" y="580.0" width="69.0" height="10.0" fill="#dcdcd6" transform="rotate(-6 870.5 585.0)"/><rect x="1059.9" y="318.4" width="20.9" height="27.1" fill="#dcdcd6" transform="rotate(-3 1070.3 331.9)"/><rect x="1055.7" y="347.6" width="20.9" height="14.6" fill="#dcdcd6" transform="rotate(-3 1066.2 354.9)"/><rect x="1082.8" y="347.6" width="18.8" height="8.4" fill="#dcdcd6" transform="rotate(-3 1092.2 351.8)"/><rect x="1089.0" y="366.4" width="14.7" height="16.6" fill="#dcdcd6" transform="rotate(-25 1096.3 374.7)"/><rect x="1103.7" y="362.2" width="20.9" height="18.8" fill="#dcdcd6" transform="rotate(-25 1114.2 371.6)"/><rect x="1084.0" y="318.0" width="16.0" height="22.0" fill="#dcdcd6"/><rect x="1060.0" y="384.0" width="20.0" height="14.0" fill="#dcdcd6" transform="rotate(-28 1070.0 391.0)"/><rect x="1128.0" y="300.0" width="22.0" height="18.0" fill="#dcdcd6" transform="rotate(8 1139.0 309.0)"/><rect x="1090.0" y="300.0" width="32.0" height="16.0" fill="#dcdcd6" transform="rotate(6 1106.0 308.0)"/><rect x="1054.0" y="300.0" width="30.0" height="12.0" fill="#dcdcd6" transform="rotate(4 1069.0 306.0)"/><rect x="1048.0" y="452.0" width="12.0" height="18.0" fill="#dcdcd6" transform="rotate(-20 1054.0 461.0)"/><rect x="1050.0" y="474.0" width="12.0" height="16.0" fill="#dcdcd6" transform="rotate(-20 1056.0 482.0)"/><rect x="1062.0" y="456.0" width="12.0" height="22.0" fill="#dcdcd6" transform="rotate(-20 1068.0 467.0)"/><rect x="1046.0" y="560.0" width="20.0" height="24.0" fill="#dcdcd6" transform="rotate(20 1056.0 572.0)"/><rect x="1072.0" y="574.0" width="28.0" height="16.0" fill="#dcdcd6" transform="rotate(20 1086.0 582.0)"/><rect x="1108.0" y="134.0" width="42.0" height="30.0" fill="#e6e6e1" transform="rotate(10 1129.0 149.0)"/><polygon points="905,468 932,464 937,489 945,489 950,507 952,551 941,556 927,556 921,535 912,537" fill="#d9d9d3"/><polyline points="695.0,269.2 760.0,268.5 816.0,266.0 870.0,260.0 931.0,253.5 1009.0,250.0 1078.0,256.0 1160.0,265.5" fill="none" stroke="#edede8" stroke-width="18.1" stroke-linejoin="round" stroke-linecap="butt" /><polyline points="695.0,126.8 850.0,53.0 860.0,48.0" fill="none" stroke="#edede8" stroke-width="8.2" stroke-linejoin="round" stroke-linecap="butt" /><polyline points="695.0,215.0 762.0,196.0 806.0,183.5 835.0,150.0 861.0,119.0 920.0,86.5 989.0,54.0 1000.0,48.0" fill="none" stroke="#edede8" stroke-width="7.6" stroke-linejoin="round" stroke-linecap="butt" /><polyline points="710.5,48.0 712.5,53.0 737.0,123.0 760.0,190.0 763.0,197.0 790.0,268.0" fill="none" stroke="#edede8" stroke-width="7.0" stroke-linejoin="round" stroke-linecap="butt" /><polyline points="825.0,48.0 827.0,53.0 845.0,90.0 861.0,119.0 877.0,142.0 882.0,190.0 888.0,218.0 895.0,252.0" fill="none" stroke="#edede8" stroke-width="6.6" stroke-linejoin="round" stroke-linecap="butt" /><polyline points="877.0,142.0 920.0,138.7 1016.0,142.0 1093.0,156.5 1160.0,173.0" fill="none" stroke="#edede8" stroke-width="7.2" stroke-linejoin="round" stroke-linecap="butt" /><polyline points="1025.0,48.0 1024.5,53.0 1016.0,142.0 1012.0,190.0 1009.0,250.0" fill="none" stroke="#edede8" stroke-width="8.6" stroke-linejoin="round" stroke-linecap="butt" /><polyline points="1110.0,48.0 1109.0,53.0 1093.0,154.0 1089.0,190.0 1080.0,256.0" fill="none" stroke="#edede8" stroke-width="7.6" stroke-linejoin="round" stroke-linecap="butt" /><polyline points="930.0,81.0 935.7,135.6 941.0,190.0 944.0,250.0" fill="none" stroke="#edede8" stroke-width="6.6" stroke-linejoin="round" stroke-linecap="butt" /><polyline points="966.0,142.0 968.0,250.0" fill="none" stroke="#edede8" stroke-width="6.6" stroke-linejoin="round" stroke-linecap="butt" /><polyline points="783.5,240.5 888.0,222.0 940.0,214.0 1012.0,210.0 1160.0,223.5" fill="none" stroke="#edede8" stroke-width="6.6" stroke-linejoin="round" stroke-linecap="butt" /><polyline points="888.0,198.8 940.0,191.5 968.0,190.0" fill="none" stroke="#edede8" stroke-width="6.2" stroke-linejoin="round" stroke-linecap="butt" /><polyline points="968.0,176.0 1012.0,176.0" fill="none" stroke="#edede8" stroke-width="6.2" stroke-linejoin="round" stroke-linecap="butt" /><polyline points="771.0,209.0 808.5,201.0" fill="none" stroke="#edede8" stroke-width="6.2" stroke-linejoin="round" stroke-linecap="butt" /><polyline points="735.5,223.8 773.0,220.7" fill="none" stroke="#edede8" stroke-width="6.2" stroke-linejoin="round" stroke-linecap="butt" /><polyline points="808.0,184.0 818.0,215.0 822.0,234.0" fill="none" stroke="#edede8" stroke-width="6.2" stroke-linejoin="round" stroke-linecap="butt" /><polyline points="1024.0,65.7 1109.0,65.7" fill="none" stroke="#edede8" stroke-width="6.2" stroke-linejoin="round" stroke-linecap="butt" /><polyline points="1047.0,106.0 1103.0,110.0" fill="none" stroke="#edede8" stroke-width="6.2" stroke-linejoin="round" stroke-linecap="butt" /><polyline points="1047.0,106.0 1045.0,146.0" fill="none" stroke="#edede8" stroke-width="6.2" stroke-linejoin="round" stroke-linecap="butt" /><polyline points="1051.0,150.0 1046.0,210.0" fill="none" stroke="#edede8" stroke-width="6.2" stroke-linejoin="round" stroke-linecap="butt" /><polyline points="1012.0,190.0 1089.0,190.0" fill="none" stroke="#edede8" stroke-width="6.2" stroke-linejoin="round" stroke-linecap="butt" /><polyline points="940.0,100.0 1020.0,100.0" fill="none" stroke="#edede8" stroke-width="6.0" stroke-linejoin="round" stroke-linecap="butt" /><polyline points="817.0,267.0 819.0,310.0 819.0,336.0 823.0,450.0 824.7,477.0 831.7,578.6 833.0,595.0" fill="none" stroke="#edede8" stroke-width="7.2" stroke-linejoin="round" stroke-linecap="butt" /><polyline points="751.0,277.0 750.0,337.0" fill="none" stroke="#edede8" stroke-width="6.6" stroke-linejoin="round" stroke-linecap="butt" /><polyline points="751.0,305.0 817.0,303.0" fill="none" stroke="#edede8" stroke-width="6.6" stroke-linejoin="round" stroke-linecap="butt" /><polyline points="695.0,362.0 703.0,352.0 710.0,344.0 721.0,339.0 760.0,337.6 819.0,336.0" fill="none" stroke="#edede8" stroke-width="8.2" stroke-linejoin="round" stroke-linecap="butt" /><polyline points="819.0,336.0 877.0,326.0 940.0,318.0 983.0,312.0 1018.0,306.0 1160.0,326.0" fill="none" stroke="#edede8" stroke-width="6.800000000000001" stroke-linejoin="round" stroke-linecap="butt" /><polyline points="817.0,302.0 875.0,292.0 940.0,282.0 1010.0,276.0 1075.0,282.0 1130.0,292.0" fill="none" stroke="#edede8" stroke-width="6.6" stroke-linejoin="round" stroke-linecap="butt" /><polyline points="871.0,262.0 877.5,310.0 890.0,450.0 914.8,578.6 918.0,595.0" fill="none" stroke="#edede8" stroke-width="7.2" stroke-linejoin="round" stroke-linecap="butt" /><polyline points="930.0,258.0 938.0,312.0 944.0,389.0" fill="none" stroke="#edede8" stroke-width="6.6" stroke-linejoin="round" stroke-linecap="butt" /><polyline points="971.0,256.0 982.6,310.0 997.0,383.0 998.3,420.6" fill="none" stroke="#edede8" stroke-width="6.6" stroke-linejoin="round" stroke-linecap="butt" /><polyline points="1010.0,257.0 1018.0,310.0 1028.5,450.0 1036.0,520.0" fill="none" stroke="#edede8" stroke-width="7.2" stroke-linejoin="round" stroke-linecap="butt" /><polyline points="1076.0,262.0 1073.0,320.0" fill="none" stroke="#edede8" stroke-width="6.6" stroke-linejoin="round" stroke-linecap="butt" /><polyline points="1128.0,271.0 1143.0,277.0 1150.0,292.0 1153.0,325.0" fill="none" stroke="#edede8" stroke-width="6.6" stroke-linejoin="round" stroke-linecap="butt" /><polyline points="1050.5,318.0 1050.5,408.0" fill="none" stroke="#edede8" stroke-width="6.6" stroke-linejoin="round" stroke-linecap="butt" /><polyline points="819.0,368.5 940.0,351.8 1020.0,327.7" fill="none" stroke="#edede8" stroke-width="6.6" stroke-linejoin="round" stroke-linecap="butt" /><polyline points="819.0,389.0 944.0,389.0 997.0,418.6 1028.0,421.0" fill="none" stroke="#edede8" stroke-width="6.6" stroke-linejoin="round" stroke-linecap="butt" /><polyline points="998.0,381.0 1025.0,381.0" fill="none" stroke="#edede8" stroke-width="6.2" stroke-linejoin="round" stroke-linecap="butt" /><polyline points="998.0,345.0 1022.0,344.0" fill="none" stroke="#edede8" stroke-width="6.2" stroke-linejoin="round" stroke-linecap="butt" /><polyline points="766.8,429.0 819.0,423.8" fill="none" stroke="#edede8" stroke-width="6.2" stroke-linejoin="round" stroke-linecap="butt" /><polyline points="767.0,429.0 767.0,452.7 824.0,451.0" fill="none" stroke="#edede8" stroke-width="6.2" stroke-linejoin="round" stroke-linecap="butt" /><polyline points="888.0,422.7 940.0,435.0 966.0,442.0" fill="none" stroke="#edede8" stroke-width="6.2" stroke-linejoin="round" stroke-linecap="butt" /><polyline points="1051.5,376.8 1149.6,354.9" fill="none" stroke="#edede8" stroke-width="6.2" stroke-linejoin="round" stroke-linecap="butt" /><polyline points="1057.8,418.6 1147.6,374.7" fill="none" stroke="#edede8" stroke-width="6.2" stroke-linejoin="round" stroke-linecap="butt" /><polyline points="831.7,576.3 912.5,566.0 975.0,564.0" fill="none" stroke="#edede8" stroke-width="6.6" stroke-linejoin="round" stroke-linecap="butt" /><polyline points="958.0,511.6 1029.7,508.0" fill="none" stroke="#edede8" stroke-width="6.2" stroke-linejoin="round" stroke-linecap="butt" /><polyline points="964.0,537.0 1031.0,522.0" fill="none" stroke="#edede8" stroke-width="6.2" stroke-linejoin="round" stroke-linecap="butt" /><polyline points="973.0,563.6 1033.0,534.7" fill="none" stroke="#edede8" stroke-width="6.2" stroke-linejoin="round" stroke-linecap="butt" /><polyline points="954.6,502.4 975.4,564.7 985.0,595.0" fill="none" stroke="#edede8" stroke-width="6.2" stroke-linejoin="round" stroke-linecap="butt" /><polyline points="950.0,440.0 1028.6,462.0" fill="none" stroke="#edede8" stroke-width="6.2" stroke-linejoin="round" stroke-linecap="butt" /><polyline points="967.4,444.0 967.4,482.0" fill="none" stroke="#edede8" stroke-width="6.0" stroke-linejoin="round" stroke-linecap="butt" /><polyline points="989.0,450.0 989.0,480.0" fill="none" stroke="#edede8" stroke-width="6.0" stroke-linejoin="round" stroke-linecap="butt" /><polyline points="1006.6,455.0 1006.6,480.0" fill="none" stroke="#edede8" stroke-width="6.0" stroke-linejoin="round" stroke-linecap="butt" /><polyline points="944.0,484.0 967.0,482.0 1028.0,480.0" fill="none" stroke="#edede8" stroke-width="6.2" stroke-linejoin="round" stroke-linecap="butt" /><polyline points="944.0,445.0 952.0,500.0" fill="none" stroke="#edede8" stroke-width="6.2" stroke-linejoin="round" stroke-linecap="butt" /><polyline points="1040.0,545.0 1046.0,548.6 1109.4,573.0 1160.0,570.0" fill="none" stroke="#edede8" stroke-width="7.6" stroke-linejoin="round" stroke-linecap="butt" /><polygon points="1112.0,50.0 1160.0,50.0 1160.0,131.0 1102.0,119.5" fill="#c4dbab" /><polygon points="1044.7,516.2 1160.0,467.0 1160.0,569.0 1109.4,572.0 1046.0,548.6" fill="#c1dca8" /><polygon points="700.0,372.0 708.0,384.0 716.0,382.0 722.0,440.0 746.0,440.0 750.8,474.6 700.0,483.0" fill="#bcdba4" /><polygon points="722.0,352.0 733.0,350.0 727.0,361.0" fill="#c4dbab" /><rect x="726.5" y="432" width="18.5" height="38" fill="#dadad4" transform="rotate(3 736 451)"/><polygon points="1057.4,517.4 1111.7,492.7 1115.2,500.5 1061.4,525.9" fill="#f2e5d3" /><polygon points="1061.4,525.9 1072.9,520.9 1086.3,548.1 1097.4,543.5 1101.3,552.0 1074.3,559.2 1067.8,548.6 1072.9,546.3" fill="#f2e5d3" /><polygon points="1104.8,509.3 1137.1,494.3 1153.3,500.5 1153.3,548.6 1123.3,551.3 1118.2,541.6 1104.8,548.1 1098.3,532.9 1112.2,526.6" fill="#f2e5d3" /><polygon points="1129.1,479.3 1153.3,469.6 1153.3,497.8 1139.5,502.8" fill="#f2e5d3" /><polygon points="1082.9,513.5 1102.5,505.4 1104.8,510.5 1085.2,518.5" fill="#d9d9d3" /><polygon points="1128.0,90.0 1146.0,87.0 1150.0,112.0 1132.0,115.0" fill="#efe3d2" /><polygon points="1114.0,97.0 1124.0,95.0 1127.0,122.0 1117.0,124.0" fill="#d3e4be" /><polygon points="1144.0,117.0 1153.0,116.0 1153.0,123.0 1144.0,124.0" fill="#bfe0ef" /><polygon points="882.5,143.0 934.0,142.0 936.0,196.0 905.0,198.0 903.0,184.0 884.0,186.0" fill="#e6def0" /><polygon points="844.0,174.0 878.0,171.0 884.0,221.0 851.0,224.0" fill="#e6def0" /><polygon points="825.0,198.0 843.0,196.0 845.0,210.0 827.0,212.0" fill="#e6def0" /><polygon points="764.7,389.0 812.7,387.0 813.0,397.0 765.0,399.0" fill="#e6def0" /><polygon points="829.4,481.6 859.4,480.4 861.7,502.4 897.5,501.2 901.0,518.5 877.9,539.3 873.0,560.0 834.0,564.7" fill="#e6e0ef" /><polygon points="790.0,53.0 799.0,53.0 800.0,61.0 792.0,62.0" fill="#e6def0" /><polygon points="1068.0,420.6 1120.4,393.5 1160.0,440.0 1160.0,456.0 1096.0,484.5" fill="#f0dcdf" /><polygon points="1054.0,497.7 1096.0,478.0 1112.0,484.0 1058.6,507.5" fill="#f0dcdf" /><polygon points="713.6,228.0 735.5,228.0 735.5,240.5 713.6,240.5" fill="#f0dcdf" /><polygon points="742.8,227.0 766.0,226.0 769.0,241.0 752.0,242.6 750.0,236.0 742.8,236.0" fill="#f0dcdf" /><polygon points="772.8,534.0 797.0,532.0 798.0,545.0 810.9,547.0 808.0,562.4 780.0,562.0 779.0,548.0 772.8,547.0" fill="#f0dcdf" /><polygon points="824.0,277.0 852.0,274.0 854.0,293.0 826.0,296.0" fill="#f0dcdf" /><polygon points="905.0,262.0 925.0,259.0 927.0,273.0 907.0,276.0" fill="#f0dcdf" /><polygon points="850.0,232.0 858.0,231.0 860.0,248.0 852.0,249.0" fill="#f0dcdf" /><polygon points="968.0,80.0 980.0,76.0 983.0,84.0 971.0,88.0" fill="#f0dcdf" /><polygon points="770.0,60.0 790.0,56.0 795.0,72.0 775.0,78.0" fill="#cfe7e2" /><polygon points="825.0,371.6 844.0,370.0 845.0,383.0 826.0,385.0" fill="#cfe7e2" /><polygon points="830.5,414.4 867.0,413.0 868.0,429.0 831.5,431.0" fill="#cfe7e2" /><polygon points="1104.8,326.0 1144.4,323.0 1145.0,349.0 1106.0,352.0" fill="#cfe7e2" /><polygon points="1032.0,70.0 1042.0,70.0 1042.0,90.0 1058.0,90.0 1058.0,96.0 1032.0,96.0" fill="#d4e8e3" /><polygon points="1064.0,158.0 1072.0,157.0 1074.0,177.0 1066.0,178.0" fill="#d4e8e3" /><polygon points="770.0,120.0 790.0,116.0 803.0,136.0 792.0,144.0 783.0,132.0 774.0,134.0" fill="#f0e4d4" /><polygon points="889.0,60.0 913.0,56.0 916.0,70.0 892.0,74.0" fill="#f0e4d4" /><polygon points="872.0,92.0 885.0,90.0 887.0,102.0 874.0,104.0" fill="#f0e4d4" /><polygon points="1094.0,171.0 1126.0,175.0 1124.0,196.0 1092.0,192.0" fill="#f0e4d4" /><polygon points="1087.0,224.0 1099.0,225.0 1100.0,248.0 1086.0,247.0" fill="#f0e4d4" /><polygon points="774.0,411.0 791.0,410.0 792.0,420.0 775.0,421.0" fill="#f0e4d4" /><polyline points="695.0,269.2 760.0,268.5 816.0,266.0 870.0,260.0 931.0,253.5 1009.0,250.0 1078.0,256.0 1160.0,265.5" fill="none" stroke="#fcfcfa" stroke-width="14.5" stroke-linejoin="round" stroke-linecap="butt" /><polyline points="695.0,126.8 850.0,53.0 860.0,48.0" fill="none" stroke="#fcfcfa" stroke-width="4.6" stroke-linejoin="round" stroke-linecap="butt" /><polyline points="695.0,215.0 762.0,196.0 806.0,183.5 835.0,150.0 861.0,119.0 920.0,86.5 989.0,54.0 1000.0,48.0" fill="none" stroke="#fcfcfa" stroke-width="4.0" stroke-linejoin="round" stroke-linecap="butt" /><polyline points="710.5,48.0 712.5,53.0 737.0,123.0 760.0,190.0 763.0,197.0 790.0,268.0" fill="none" stroke="#fcfcfa" stroke-width="3.4" stroke-linejoin="round" stroke-linecap="butt" /><polyline points="825.0,48.0 827.0,53.0 845.0,90.0 861.0,119.0 877.0,142.0 882.0,190.0 888.0,218.0 895.0,252.0" fill="none" stroke="#fcfcfa" stroke-width="3.0" stroke-linejoin="round" stroke-linecap="butt" /><polyline points="877.0,142.0 920.0,138.7 1016.0,142.0 1093.0,156.5 1160.0,173.0" fill="none" stroke="#fcfcfa" stroke-width="3.6" stroke-linejoin="round" stroke-linecap="butt" /><polyline points="1025.0,48.0 1024.5,53.0 1016.0,142.0 1012.0,190.0 1009.0,250.0" fill="none" stroke="#fcfcfa" stroke-width="5.0" stroke-linejoin="round" stroke-linecap="butt" /><polyline points="1110.0,48.0 1109.0,53.0 1093.0,154.0 1089.0,190.0 1080.0,256.0" fill="none" stroke="#fcfcfa" stroke-width="4.0" stroke-linejoin="round" stroke-linecap="butt" /><polyline points="930.0,81.0 935.7,135.6 941.0,190.0 944.0,250.0" fill="none" stroke="#fcfcfa" stroke-width="3.0" stroke-linejoin="round" stroke-linecap="butt" /><polyline points="966.0,142.0 968.0,250.0" fill="none" stroke="#fcfcfa" stroke-width="3.0" stroke-linejoin="round" stroke-linecap="butt" /><polyline points="783.5,240.5 888.0,222.0 940.0,214.0 1012.0,210.0 1160.0,223.5" fill="none" stroke="#fcfcfa" stroke-width="3.0" stroke-linejoin="round" stroke-linecap="butt" /><polyline points="888.0,198.8 940.0,191.5 968.0,190.0" fill="none" stroke="#fcfcfa" stroke-width="2.6" stroke-linejoin="round" stroke-linecap="butt" /><polyline points="968.0,176.0 1012.0,176.0" fill="none" stroke="#fcfcfa" stroke-width="2.6" stroke-linejoin="round" stroke-linecap="butt" /><polyline points="771.0,209.0 808.5,201.0" fill="none" stroke="#fcfcfa" stroke-width="2.6" stroke-linejoin="round" stroke-linecap="butt" /><polyline points="735.5,223.8 773.0,220.7" fill="none" stroke="#fcfcfa" stroke-width="2.6" stroke-linejoin="round" stroke-linecap="butt" /><polyline points="808.0,184.0 818.0,215.0 822.0,234.0" fill="none" stroke="#fcfcfa" stroke-width="2.6" stroke-linejoin="round" stroke-linecap="butt" /><polyline points="1024.0,65.7 1109.0,65.7" fill="none" stroke="#fcfcfa" stroke-width="2.6" stroke-linejoin="round" stroke-linecap="butt" /><polyline points="1047.0,106.0 1103.0,110.0" fill="none" stroke="#fcfcfa" stroke-width="2.6" stroke-linejoin="round" stroke-linecap="butt" /><polyline points="1047.0,106.0 1045.0,146.0" fill="none" stroke="#fcfcfa" stroke-width="2.6" stroke-linejoin="round" stroke-linecap="butt" /><polyline points="1051.0,150.0 1046.0,210.0" fill="none" stroke="#fcfcfa" stroke-width="2.6" stroke-linejoin="round" stroke-linecap="butt" /><polyline points="1012.0,190.0 1089.0,190.0" fill="none" stroke="#fcfcfa" stroke-width="2.6" stroke-linejoin="round" stroke-linecap="butt" /><polyline points="940.0,100.0 1020.0,100.0" fill="none" stroke="#fcfcfa" stroke-width="2.4" stroke-linejoin="round" stroke-linecap="butt" /><polyline points="817.0,267.0 819.0,310.0 819.0,336.0 823.0,450.0 824.7,477.0 831.7,578.6 833.0,595.0" fill="none" stroke="#fcfcfa" stroke-width="3.6" stroke-linejoin="round" stroke-linecap="butt" /><polyline points="751.0,277.0 750.0,337.0" fill="none" stroke="#fcfcfa" stroke-width="3.0" stroke-linejoin="round" stroke-linecap="butt" /><polyline points="751.0,305.0 817.0,303.0" fill="none" stroke="#fcfcfa" stroke-width="3.0" stroke-linejoin="round" stroke-linecap="butt" /><polyline points="695.0,362.0 703.0,352.0 710.0,344.0 721.0,339.0 760.0,337.6 819.0,336.0" fill="none" stroke="#fcfcfa" stroke-width="4.6" stroke-linejoin="round" stroke-linecap="butt" /><polyline points="819.0,336.0 877.0,326.0 940.0,318.0 983.0,312.0 1018.0,306.0 1160.0,326.0" fill="none" stroke="#fcfcfa" stroke-width="3.2" stroke-linejoin="round" stroke-linecap="butt" /><polyline points="817.0,302.0 875.0,292.0 940.0,282.0 1010.0,276.0 1075.0,282.0 1130.0,292.0" fill="none" stroke="#fcfcfa" stroke-width="3.0" stroke-linejoin="round" stroke-linecap="butt" /><polyline points="871.0,262.0 877.5,310.0 890.0,450.0 914.8,578.6 918.0,595.0" fill="none" stroke="#fcfcfa" stroke-width="3.6" stroke-linejoin="round" stroke-linecap="butt" /><polyline points="930.0,258.0 938.0,312.0 944.0,389.0" fill="none" stroke="#fcfcfa" stroke-width="3.0" stroke-linejoin="round" stroke-linecap="butt" /><polyline points="971.0,256.0 982.6,310.0 997.0,383.0 998.3,420.6" fill="none" stroke="#fcfcfa" stroke-width="3.0" stroke-linejoin="round" stroke-linecap="butt" /><polyline points="1010.0,257.0 1018.0,310.0 1028.5,450.0 1036.0,520.0" fill="none" stroke="#fcfcfa" stroke-width="3.6" stroke-linejoin="round" stroke-linecap="butt" /><polyline points="1076.0,262.0 1073.0,320.0" fill="none" stroke="#fcfcfa" stroke-width="3.0" stroke-linejoin="round" stroke-linecap="butt" /><polyline points="1128.0,271.0 1143.0,277.0 1150.0,292.0 1153.0,325.0" fill="none" stroke="#fcfcfa" stroke-width="3.0" stroke-linejoin="round" stroke-linecap="butt" /><polyline points="1050.5,318.0 1050.5,408.0" fill="none" stroke="#fcfcfa" stroke-width="3.0" stroke-linejoin="round" stroke-linecap="butt" /><polyline points="819.0,368.5 940.0,351.8 1020.0,327.7" fill="none" stroke="#fcfcfa" stroke-width="3.0" stroke-linejoin="round" stroke-linecap="butt" /><polyline points="819.0,389.0 944.0,389.0 997.0,418.6 1028.0,421.0" fill="none" stroke="#fcfcfa" stroke-width="3.0" stroke-linejoin="round" stroke-linecap="butt" /><polyline points="998.0,381.0 1025.0,381.0" fill="none" stroke="#fcfcfa" stroke-width="2.6" stroke-linejoin="round" stroke-linecap="butt" /><polyline points="998.0,345.0 1022.0,344.0" fill="none" stroke="#fcfcfa" stroke-width="2.6" stroke-linejoin="round" stroke-linecap="butt" /><polyline points="766.8,429.0 819.0,423.8" fill="none" stroke="#fcfcfa" stroke-width="2.6" stroke-linejoin="round" stroke-linecap="butt" /><polyline points="767.0,429.0 767.0,452.7 824.0,451.0" fill="none" stroke="#fcfcfa" stroke-width="2.6" stroke-linejoin="round" stroke-linecap="butt" /><polyline points="888.0,422.7 940.0,435.0 966.0,442.0" fill="none" stroke="#fcfcfa" stroke-width="2.6" stroke-linejoin="round" stroke-linecap="butt" /><polyline points="1051.5,376.8 1149.6,354.9" fill="none" stroke="#fcfcfa" stroke-width="2.6" stroke-linejoin="round" stroke-linecap="butt" /><polyline points="1057.8,418.6 1147.6,374.7" fill="none" stroke="#fcfcfa" stroke-width="2.6" stroke-linejoin="round" stroke-linecap="butt" /><polyline points="831.7,576.3 912.5,566.0 975.0,564.0" fill="none" stroke="#fcfcfa" stroke-width="3.0" stroke-linejoin="round" stroke-linecap="butt" /><polyline points="958.0,511.6 1029.7,508.0" fill="none" stroke="#fcfcfa" stroke-width="2.6" stroke-linejoin="round" stroke-linecap="butt" /><polyline points="964.0,537.0 1031.0,522.0" fill="none" stroke="#fcfcfa" stroke-width="2.6" stroke-linejoin="round" stroke-linecap="butt" /><polyline points="973.0,563.6 1033.0,534.7" fill="none" stroke="#fcfcfa" stroke-width="2.6" stroke-linejoin="round" stroke-linecap="butt" /><polyline points="954.6,502.4 975.4,564.7 985.0,595.0" fill="none" stroke="#fcfcfa" stroke-width="2.6" stroke-linejoin="round" stroke-linecap="butt" /><polyline points="950.0,440.0 1028.6,462.0" fill="none" stroke="#fcfcfa" stroke-width="2.6" stroke-linejoin="round" stroke-linecap="butt" /><polyline points="967.4,444.0 967.4,482.0" fill="none" stroke="#fcfcfa" stroke-width="2.4" stroke-linejoin="round" stroke-linecap="butt" /><polyline points="989.0,450.0 989.0,480.0" fill="none" stroke="#fcfcfa" stroke-width="2.4" stroke-linejoin="round" stroke-linecap="butt" /><polyline points="1006.6,455.0 1006.6,480.0" fill="none" stroke="#fcfcfa" stroke-width="2.4" stroke-linejoin="round" stroke-linecap="butt" /><polyline points="944.0,484.0 967.0,482.0 1028.0,480.0" fill="none" stroke="#fcfcfa" stroke-width="2.6" stroke-linejoin="round" stroke-linecap="butt" /><polyline points="944.0,445.0 952.0,500.0" fill="none" stroke="#fcfcfa" stroke-width="2.6" stroke-linejoin="round" stroke-linecap="butt" /><polyline points="1040.0,545.0 1046.0,548.6 1109.4,573.0 1160.0,570.0" fill="none" stroke="#fcfcfa" stroke-width="4.0" stroke-linejoin="round" stroke-linecap="butt" /><polyline points="695.0,270.0 760.0,269.3 816.0,266.8 835.0,265.0" fill="none" stroke="#e3e3de" stroke-width="0.8" stroke-linejoin="round" stroke-linecap="butt" /><polyline points="695.0,215.0 762.0,196.0 806.0,183.5 835.0,150.0 861.0,119.0" fill="none" stroke="#b5b5b0" stroke-width="0.6" stroke-linejoin="round" stroke-linecap="butt" stroke-dasharray="3 2"/><polyline points="827.0,53.0 845.0,90.0 861.0,119.0 877.0,142.0 882.0,190.0 888.0,218.0 895.0,252.0" fill="none" stroke="#b5b5b0" stroke-width="0.6" stroke-linejoin="round" stroke-linecap="butt" stroke-dasharray="3 2"/><polyline points="877.0,142.0 920.0,138.7 1016.0,142.0 1093.0,156.5 1160.0,173.0" fill="none" stroke="#b5b5b0" stroke-width="0.6" stroke-linejoin="round" stroke-linecap="butt" stroke-dasharray="3 2"/><polyline points="817.0,267.0 819.0,310.0 819.0,336.0 823.0,450.0 824.7,477.0 831.7,578.6" fill="none" stroke="#b5b5b0" stroke-width="0.6" stroke-linejoin="round" stroke-linecap="butt" stroke-dasharray="3 2"/><polyline points="703.0,352.0 710.0,344.0 721.0,339.0 819.0,336.0 877.0,326.0 940.0,318.0 983.0,312.0 1018.0,306.0 1160.0,326.0" fill="none" stroke="#b5b5b0" stroke-width="0.6" stroke-linejoin="round" stroke-linecap="butt" stroke-dasharray="3 2"/><polyline points="1010.0,257.0 1018.0,310.0 1028.5,450.0 1036.0,520.0" fill="none" stroke="#b5b5b0" stroke-width="0.6" stroke-linejoin="round" stroke-linecap="butt" stroke-dasharray="3 2"/><polyline points="819.0,389.0 944.0,389.0 997.0,418.6 1028.0,421.0" fill="none" stroke="#b5b5b0" stroke-width="0.6" stroke-linejoin="round" stroke-linecap="butt" stroke-dasharray="3 2"/><polyline points="1040.0,545.0 1046.0,548.6 1109.4,573.0" fill="none" stroke="#b5b5b0" stroke-width="0.6" stroke-linejoin="round" stroke-linecap="butt" stroke-dasharray="3 2"/><polyline points="930.0,258.0 938.0,312.0" fill="none" stroke="#b5b5b0" stroke-width="0.6" stroke-linejoin="round" stroke-linecap="butt" stroke-dasharray="3 2"/><polyline points="1160.0,318.0 1151.7,326.7 1139.0,351.8 1097.5,387.0 1062.0,410.0 1045.0,435.0 1039.0,455.0 1036.7,480.0 1036.7,520.9 1040.0,551.0 1033.0,578.6 1030.0,595.0" fill="none" stroke="#c6c6c2" stroke-width="9.5" stroke-linejoin="round" stroke-linecap="butt" /><polyline points="1160.0,318.0 1151.7,326.7 1139.0,351.8 1097.5,387.0 1062.0,410.0 1045.0,435.0 1039.0,455.0 1036.7,480.0 1036.7,520.9 1040.0,551.0 1033.0,578.6 1030.0,595.0" fill="none" stroke="#d2d2ce" stroke-width="5.5" stroke-linejoin="round" stroke-linecap="butt" /><polyline points="1160.0,350.0 1139.0,368.0 1100.0,395.0 1070.0,412.0" fill="none" stroke="#d0d0cb" stroke-width="3.5" stroke-linejoin="round" stroke-linecap="butt" /><circle cx="762.6" cy="194.3" r="4.2" fill="#fff" stroke="#5b7fb0" stroke-width="0.8"/><rect x="760.9" y="192.0" width="3.4" height="4" rx="0.8" fill="#5b7fb0"/><circle cx="1014.8" cy="161" r="4.2" fill="#fff" stroke="#5b7fb0" stroke-width="0.8"/><rect x="1013.0999999999999" y="158.7" width="3.4" height="4" rx="0.8" fill="#5b7fb0"/><path d="M926.5,252.5 h8 v5 q0,3 -4,4.6 q-4,-1.6 -4,-4.6 z" fill="#fff" stroke="#666" stroke-width="0.7"/><text x="930.5" y="259.3" font-size="5" fill="#333" text-anchor="middle">20</text><text x="783" y="59.4" font-size="6.8" fill="#555" text-anchor="middle" textLength="40.8" stroke="#f4f4f0" stroke-width="1.2" paint-order="stroke" stroke-opacity="0.7">東京グリーン</text><text x="783" y="67.9" font-size="6.8" fill="#555" text-anchor="middle" textLength="20.4" stroke="#f4f4f0" stroke-width="1.2" paint-order="stroke" stroke-opacity="0.7">パレス</text><text x="713" y="72.9" font-size="6.6" fill="#555" text-anchor="middle" textLength="26.4" stroke="#f4f4f0" stroke-width="1.2" paint-order="stroke" stroke-opacity="0.7">府県會館</text><text x="751" y="123.9" font-size="6.8" fill="#555" text-anchor="middle" textLength="27.2" stroke="#f4f4f0" stroke-width="1.2" paint-order="stroke" stroke-opacity="0.7">白揚ビル</text><text x="770" y="158.4" font-size="6.8" fill="#555" text-anchor="middle" textLength="40.8" stroke="#f4f4f0" stroke-width="1.2" paint-order="stroke" stroke-opacity="0.7">麹町三葉ビル</text><text x="711" y="150.4" font-size="6.8" fill="#555" text-anchor="middle" textLength="20.4" stroke="#f4f4f0" stroke-width="1.2" paint-order="stroke" stroke-opacity="0.7">センタ</text><text x="707" y="159.4" font-size="6.8" fill="#555" text-anchor="middle" textLength="6.8" stroke="#f4f4f0" stroke-width="1.2" paint-order="stroke" stroke-opacity="0.7">ル</text><text x="898" y="58.9" font-size="6.8" fill="#555" text-anchor="middle" textLength="27.2" stroke="#f4f4f0" stroke-width="1.2" paint-order="stroke" stroke-opacity="0.7">ザ・番町</text><text x="882" y="90.4" font-size="6.8" fill="#555" text-anchor="middle" textLength="20.4" stroke="#f4f4f0" stroke-width="1.2" paint-order="stroke" stroke-opacity="0.7">児童館</text><text x="893" y="130.4" font-size="6.8" fill="#555" text-anchor="middle" textLength="34.0" stroke="#f4f4f0" stroke-width="1.2" paint-order="stroke" stroke-opacity="0.7">ニッセイ麹</text><text x="894" y="138.4" font-size="6.8" fill="#555" text-anchor="middle" textLength="20.4" stroke="#f4f4f0" stroke-width="1.2" paint-order="stroke" stroke-opacity="0.7">町ビル</text><text x="981" y="66.4" font-size="6.8" fill="#555" text-anchor="middle" textLength="34.0" stroke="#f4f4f0" stroke-width="1.2" paint-order="stroke" stroke-opacity="0.7">ファミリー</text><text x="983" y="74.4" font-size="6.8" fill="#555" text-anchor="middle" textLength="20.4" stroke="#f4f4f0" stroke-width="1.2" paint-order="stroke" stroke-opacity="0.7">マート</text><text x="1034" y="79.9" font-size="6.8" fill="#555" text-anchor="middle" textLength="20.4" stroke="#f4f4f0" stroke-width="1.2" paint-order="stroke" stroke-opacity="0.7">ホテル</text><text x="1043" y="88.4" font-size="6.8" fill="#555" text-anchor="middle" textLength="27.2" stroke="#f4f4f0" stroke-width="1.2" paint-order="stroke" stroke-opacity="0.7">レ半蔵門</text><text x="1033" y="114.4" font-size="6.8" fill="#555" text-anchor="middle" textLength="34.0" stroke="#f4f4f0" stroke-width="1.2" paint-order="stroke" stroke-opacity="0.7">全国町村議</text><text x="1033" y="122.4" font-size="6.8" fill="#555" text-anchor="middle" textLength="20.4" stroke="#f4f4f0" stroke-width="1.2" paint-order="stroke" stroke-opacity="0.7">員会館</text><text x="1086" y="119.4" font-size="6.8" fill="#5a9a4a" text-anchor="middle" textLength="34.0" stroke="#f4f4f0" stroke-width="1.2" paint-order="stroke" stroke-opacity="0.7">日本カメラ</text><text x="1086" y="127.4" font-size="6.8" fill="#5a9a4a" text-anchor="middle" textLength="20.4" stroke="#f4f4f0" stroke-width="1.2" paint-order="stroke" stroke-opacity="0.7">博物館</text><text x="955" y="146.4" font-size="6.8" fill="#555" text-anchor="middle" textLength="40.8" stroke="#f4f4f0" stroke-width="1.2" paint-order="stroke" stroke-opacity="0.7">アイルランド</text><text x="955" y="154.9" font-size="6.8" fill="#555" text-anchor="middle" textLength="20.4" stroke="#f4f4f0" stroke-width="1.2" paint-order="stroke" stroke-opacity="0.7">大使館</text><text x="1015" y="154.3" font-size="6.4" fill="#4a6fa5" text-anchor="middle" textLength="25.6" stroke="#f4f4f0" stroke-width="1.2" paint-order="stroke" stroke-opacity="0.7">半蔵門駅</text><text x="1067" y="166.4" font-size="6.8" fill="#555" text-anchor="middle" textLength="40.8" stroke="#f4f4f0" stroke-width="1.2" paint-order="stroke" stroke-opacity="0.7">ダイヤモンド</text><text x="1067" y="174.4" font-size="6.8" fill="#555" text-anchor="middle" textLength="20.4" stroke="#f4f4f0" stroke-width="1.2" paint-order="stroke" stroke-opacity="0.7">ホテル</text><text x="907" y="172.5" font-size="8.2" fill="#303030" text-anchor="middle" font-weight="bold" textLength="16.4" stroke="#f4f4f0" stroke-width="1.2" paint-order="stroke" stroke-opacity="0.7">麹町</text><text x="919" y="194.7" font-size="7.6" fill="#303030" text-anchor="middle" font-weight="bold" stroke="#f4f4f0" stroke-width="1.2" paint-order="stroke" stroke-opacity="0.7">麹町2</text><text x="830" y="220.7" font-size="7.6" fill="#303030" text-anchor="middle" font-weight="bold" stroke="#f4f4f0" stroke-width="1.2" paint-order="stroke" stroke-opacity="0.7">麹町3</text><text x="762.6" y="187.5" font-size="6.4" fill="#4a6fa5" text-anchor="middle" textLength="19.2" stroke="#f4f4f0" stroke-width="1.2" paint-order="stroke" stroke-opacity="0.7">麹町駅</text><text x="748" y="218.4" font-size="6.8" fill="#555" text-anchor="middle" textLength="27.2" stroke="#f4f4f0" stroke-width="1.2" paint-order="stroke" stroke-opacity="0.7">日本製粉</text><text x="718" y="249.2" font-size="6.8" fill="#555" text-anchor="middle" textLength="27.2" stroke="#f4f4f0" stroke-width="1.2" paint-order="stroke" stroke-opacity="0.7">ヨタモビ</text><text x="714" y="256.8" font-size="6.8" fill="#555" text-anchor="middle" textLength="20.4" stroke="#f4f4f0" stroke-width="1.2" paint-order="stroke" stroke-opacity="0.7">リティ</text><text x="815" y="242.4" font-size="6.8" fill="#555" text-anchor="middle" textLength="40.8" stroke="#f4f4f0" stroke-width="1.2" paint-order="stroke" stroke-opacity="0.7">ヒューリック</text><text x="815" y="250.9" font-size="6.8" fill="#555" text-anchor="middle" textLength="27.2" stroke="#f4f4f0" stroke-width="1.2" paint-order="stroke" stroke-opacity="0.7">麹町ビル</text><text x="941.5" y="230.8" font-size="6.8" fill="#555" text-anchor="middle" textLength="47.6" stroke="#f4f4f0" stroke-width="1.2" paint-order="stroke" stroke-opacity="0.7">麹町大通りビル</text><text x="997" y="192.4" font-size="6.8" fill="#555" text-anchor="middle" textLength="20.4" stroke="#f4f4f0" stroke-width="1.2" paint-order="stroke" stroke-opacity="0.7">駅前局</text><text x="1058" y="203.4" font-size="6.8" fill="#555" text-anchor="middle" textLength="27.2" stroke="#f4f4f0" stroke-width="1.2" paint-order="stroke" stroke-opacity="0.7">広洋ビル</text><text x="1140" y="187.4" font-size="6.8" fill="#555" text-anchor="middle" textLength="34.0" stroke="#f4f4f0" stroke-width="1.2" paint-order="stroke" stroke-opacity="0.7">住友不動産</text><text x="1142" y="195.9" font-size="6.8" fill="#555" text-anchor="middle" textLength="27.2" stroke="#f4f4f0" stroke-width="1.2" paint-order="stroke" stroke-opacity="0.7">が半蔵門</text><text x="893.5" y="258.7" font-size="6.6" fill="#555" text-anchor="middle" textLength="19.8" stroke="#f4f4f0" stroke-width="1.2" paint-order="stroke" stroke-opacity="0.7">麹町三</text><text x="1007" y="252.4" font-size="6.6" fill="#555" text-anchor="middle" stroke="#f4f4f0" stroke-width="1.2" paint-order="stroke" stroke-opacity="0.7">麹町 1</text><text x="1078" y="261.4" font-size="6.6" fill="#555" text-anchor="middle" textLength="39.6" stroke="#f4f4f0" stroke-width="1.2" paint-order="stroke" stroke-opacity="0.7">麹町警察署前</text><text x="1146" y="272.4" font-size="6.6" fill="#555" text-anchor="middle" textLength="13.2" stroke="#f4f4f0" stroke-width="1.2" paint-order="stroke" stroke-opacity="0.7">半蔵</text><text x="772" y="290.4" font-size="6.8" fill="#555" text-anchor="middle" textLength="27.2" stroke="#f4f4f0" stroke-width="1.2" paint-order="stroke" stroke-opacity="0.7">西脇ビル</text><text x="831" y="290.9" font-size="6.8" fill="#555" text-anchor="middle" textLength="27.2" stroke="#f4f4f0" stroke-width="1.2" paint-order="stroke" stroke-opacity="0.7">タリーズ</text><text x="945" y="302.4" font-size="6.8" fill="#555" text-anchor="middle" textLength="34.0" stroke="#f4f4f0" stroke-width="1.2" paint-order="stroke" stroke-opacity="0.7">ファミリー</text><text x="945" y="310.4" font-size="6.8" fill="#555" text-anchor="middle" textLength="20.4" stroke="#f4f4f0" stroke-width="1.2" paint-order="stroke" stroke-opacity="0.7">マート</text><text x="1003" y="291.4" font-size="6.8" fill="#555" text-anchor="middle" textLength="34.0" stroke="#f4f4f0" stroke-width="1.2" paint-order="stroke" stroke-opacity="0.7">半蔵門ビル</text><text x="1131" y="310.4" font-size="6.6" fill="#555" text-anchor="middle" stroke="#f4f4f0" stroke-width="1.2" paint-order="stroke" stroke-opacity="0.7">T O K Y O F</text><text x="743" y="332.7" font-size="7.6" fill="#303030" text-anchor="middle" font-weight="bold" stroke="#f4f4f0" stroke-width="1.2" paint-order="stroke" stroke-opacity="0.7">麹町4</text><text x="819" y="337.9" font-size="6.8" fill="#555" text-anchor="middle" textLength="27.2" stroke="#f4f4f0" stroke-width="1.2" paint-order="stroke" stroke-opacity="0.7">紀尾井町</text><text x="887" y="320.4" font-size="6.8" fill="#555" text-anchor="middle" textLength="20.4" stroke="#f4f4f0" stroke-width="1.2" paint-order="stroke" stroke-opacity="0.7">秩父屋</text><text x="920" y="344.4" font-size="6.8" fill="#555" text-anchor="middle" textLength="34.0" stroke="#f4f4f0" stroke-width="1.2" paint-order="stroke" stroke-opacity="0.7">アパホテル</text><text x="778" y="372.4" font-size="6.8" fill="#555" text-anchor="middle" textLength="27.2" stroke="#f4f4f0" stroke-width="1.2" paint-order="stroke" stroke-opacity="0.7">文芸春秋</text><text x="831" y="382.4" font-size="6.8" fill="#555" text-anchor="middle" textLength="27.2" stroke="#f4f4f0" stroke-width="1.2" paint-order="stroke" stroke-opacity="0.7">厚生会館</text><text x="739" y="397.4" font-size="6.8" fill="#555" text-anchor="middle" textLength="40.8" stroke="#f4f4f0" stroke-width="1.2" paint-order="stroke" stroke-opacity="0.7">紀尾井町ビル</text><text x="842" y="419.4" font-size="6.8" fill="#555" text-anchor="middle" textLength="40.8" stroke="#f4f4f0" stroke-width="1.2" paint-order="stroke" stroke-opacity="0.7">ホテルルポー</text><text x="842" y="427.4" font-size="6.8" fill="#555" text-anchor="middle" textLength="20.4" stroke="#f4f4f0" stroke-width="1.2" paint-order="stroke" stroke-opacity="0.7">ル麹町</text><text x="1003" y="325.4" font-size="6.8" fill="#555" text-anchor="middle" textLength="40.8" stroke="#f4f4f0" stroke-width="1.2" paint-order="stroke" stroke-opacity="0.7">平河町コート</text><text x="977" y="356.7" font-size="7.4" fill="#303030" text-anchor="middle" font-weight="bold" stroke="#f4f4f0" stroke-width="1.2" paint-order="stroke" stroke-opacity="0.7">平河町1</text><text x="966" y="379.4" font-size="6.8" fill="#555" text-anchor="middle" textLength="34.0" stroke="#f4f4f0" stroke-width="1.2" paint-order="stroke" stroke-opacity="0.7">平河天満宮</text><text x="1036" y="368.4" font-size="6.6" fill="#555" text-anchor="middle" stroke="#f4f4f0" stroke-width="1.2" paint-order="stroke" stroke-opacity="0.7">E N E O S</text><text x="1120" y="339.4" font-size="6.8" fill="#555" text-anchor="middle" textLength="54.4" stroke="#f4f4f0" stroke-width="1.2" paint-order="stroke" stroke-opacity="0.7">ホテルグランドア</text><text x="1120" y="347.9" font-size="6.8" fill="#555" text-anchor="middle" textLength="34.0" stroke="#f4f4f0" stroke-width="1.2" paint-order="stroke" stroke-opacity="0.7">ーク半蔵門</text><text x="1113" y="446.4" font-size="6.8" fill="#5a9a4a" text-anchor="middle" textLength="27.2" stroke="#f4f4f0" stroke-width="1.2" paint-order="stroke" stroke-opacity="0.7">国立劇場</text><text x="1007" y="432.4" font-size="6.8" fill="#555" text-anchor="middle" textLength="40.8" stroke="#f4f4f0" stroke-width="1.2" paint-order="stroke" stroke-opacity="0.7">住友不動産平</text><text x="1007" y="440.4" font-size="6.8" fill="#555" text-anchor="middle" textLength="27.2" stroke="#f4f4f0" stroke-width="1.2" paint-order="stroke" stroke-opacity="0.7">河町ビル</text><text x="926.5" y="448.7" font-size="7.4" fill="#303030" text-anchor="middle" font-weight="bold" stroke="#f4f4f0" stroke-width="1.2" paint-order="stroke" stroke-opacity="0.7">平河町2</text><text x="811" y="460.4" font-size="6.8" fill="#555" text-anchor="middle" textLength="34.0" stroke="#f4f4f0" stroke-width="1.2" paint-order="stroke" stroke-opacity="0.7">ファミリー</text><text x="811" y="468.4" font-size="6.8" fill="#555" text-anchor="middle" textLength="20.4" stroke="#f4f4f0" stroke-width="1.2" paint-order="stroke" stroke-opacity="0.7">マート</text><text x="869" y="468.4" font-size="6.8" fill="#555" text-anchor="middle" textLength="40.8" stroke="#f4f4f0" stroke-width="1.2" paint-order="stroke" stroke-opacity="0.7">佐世保市東京</text><text x="869" y="476.4" font-size="6.8" fill="#555" text-anchor="middle" textLength="20.4" stroke="#f4f4f0" stroke-width="1.2" paint-order="stroke" stroke-opacity="0.7">事務所</text><text x="812" y="509.4" font-size="6.8" fill="#555" text-anchor="middle" textLength="47.6" stroke="#f4f4f0" stroke-width="1.2" paint-order="stroke" stroke-opacity="0.7">千代田放送会館</text><text x="933" y="521.4" font-size="6.8" fill="#555" text-anchor="middle" stroke="#f4f4f0" stroke-width="1.2" paint-order="stroke" stroke-opacity="0.7">J A</text><text x="879" y="548.4" font-size="6.8" fill="#555" text-anchor="middle" textLength="40.8" stroke="#f4f4f0" stroke-width="1.2" paint-order="stroke" stroke-opacity="0.7">全国旅館会館</text><text x="770" y="545.9" font-size="6.8" fill="#555" text-anchor="middle" textLength="54.4" stroke="#f4f4f0" stroke-width="1.2" paint-order="stroke" stroke-opacity="0.7">東京ガーデンテラ</text><text x="770" y="554.4" font-size="6.8" fill="#555" text-anchor="middle" textLength="34.0" stroke="#f4f4f0" stroke-width="1.2" paint-order="stroke" stroke-opacity="0.7">ス紀尾井町</text><text x="750" y="579.4" font-size="6.8" fill="#555" text-anchor="middle" textLength="40.8" stroke="#f4f4f0" stroke-width="1.2" paint-order="stroke" stroke-opacity="0.7">紀尾井タワー</text><text x="1071" y="491.4" font-size="6.8" fill="#5a9a4a" text-anchor="middle" textLength="20.4" stroke="#f4f4f0" stroke-width="1.2" paint-order="stroke" stroke-opacity="0.7">演芸場</text><text x="1018" y="492.4" font-size="6.6" fill="#555" text-anchor="middle" stroke="#f4f4f0" stroke-width="1.2" paint-order="stroke" stroke-opacity="0.7">E N E O S</text><text x="983" y="524.4" font-size="6.8" fill="#555" text-anchor="middle" textLength="47.6" stroke="#f4f4f0" stroke-width="1.2" paint-order="stroke" stroke-opacity="0.7">東京平河町ビル</text><text x="1127" y="526.4" font-size="6.8" fill="#555" text-anchor="middle" textLength="34.0" stroke="#f4f4f0" stroke-width="1.2" paint-order="stroke" stroke-opacity="0.7">最高裁判所</text><text x="1003" y="576.4" font-size="6.8" fill="#555" text-anchor="middle" textLength="47.6" stroke="#f4f4f0" stroke-width="1.2" paint-order="stroke" stroke-opacity="0.7">平河町森タワー</text><text x="888.5" y="416.0" font-size="6.4" fill="#666" text-anchor="middle">貝</text><text x="888.5" y="423.2" font-size="6.4" fill="#666" text-anchor="middle">坂</text><text x="888.5" y="430.4" font-size="6.4" fill="#666" text-anchor="middle">通</text><text x="888.5" y="437.6" font-size="6.4" fill="#666" text-anchor="middle">り</text><text x="1052" y="410.0" font-size="6.2" fill="#666" text-anchor="middle">国</text><text x="1052" y="417.0" font-size="6.2" fill="#666" text-anchor="middle">立</text><text x="1052" y="424.0" font-size="6.2" fill="#666" text-anchor="middle">劇</text><text x="1052" y="431.0" font-size="6.2" fill="#666" text-anchor="middle">場</text><text x="1052" y="438.0" font-size="6.2" fill="#666" text-anchor="middle">通</text><text x="1052" y="445.0" font-size="6.2" fill="#666" text-anchor="middle">り</text><circle cx="927.1" cy="90.7" r="2.9" fill="#e8474c"/><circle cx="900.4" cy="105.5" r="2.9" fill="#fdd734"/><circle cx="880.8" cy="116.0" r="2.9" fill="#fdd734"/><circle cx="873.3" cy="120.4" r="2.9" fill="#e8474c"/><circle cx="895.6" cy="123.7" r="2.9" fill="#a2da54"/><circle cx="914.0" cy="123.7" r="2.9" fill="#a2da54"/><circle cx="939.0" cy="120.4" r="2.9" fill="#e8474c"/><circle cx="859.3" cy="130.0" r="2.9" fill="#e8474c"/><circle cx="853.0" cy="135.6" r="2.9" fill="#fdd734"/><circle cx="860.3" cy="138.7" r="2.9" fill="#e8474c"/><circle cx="861.8" cy="144.4" r="2.9" fill="#e8474c"/><circle cx="879.5" cy="137.3" r="2.9" fill="#8fb92b"/><circle cx="845.7" cy="143.5" r="2.9" fill="#8fb92b"/><circle cx="840.9" cy="149.2" r="2.9" fill="#e8474c"/><circle cx="838.2" cy="152.7" r="2.9" fill="#e8474c"/><circle cx="835.7" cy="156.1" r="2.9" fill="#fdd734"/><circle cx="831.9" cy="162.1" r="2.9" fill="#e8474c"/><circle cx="841.3" cy="165.0" r="2.9" fill="#a2da54"/><circle cx="866.4" cy="153.3" r="2.9" fill="#a2da54"/><circle cx="869.7" cy="163.4" r="2.9" fill="#8fb92b"/><circle cx="824.8" cy="170.0" r="2.9" fill="#e8474c"/><circle cx="918.8" cy="154.0" r="2.9" fill="#e8474c"/><circle cx="816.9" cy="180.5" r="2.9" fill="#fdd734"/><circle cx="813.8" cy="185.1" r="2.9" fill="#e8474c"/><circle cx="805.4" cy="189.5" r="2.9" fill="#e8474c"/><circle cx="931.1" cy="182.2" r="2.9" fill="#fdd734"/><circle cx="932.8" cy="188.8" r="2.9" fill="#e8474c"/><circle cx="1008.1" cy="55.6" r="2.9" fill="#e8474c"/><circle cx="968.0" cy="72.5" r="2.9" fill="#fdd734"/><circle cx="973.7" cy="71.5" r="2.9" fill="#e8474c"/><circle cx="962.8" cy="77.1" r="2.9" fill="#e8474c"/><circle cx="979.1" cy="80.9" r="2.9" fill="#e8474c"/><circle cx="926.7" cy="90.7" r="2.9" fill="#e8474c"/><circle cx="945.7" cy="89.2" r="2.9" fill="#fdd734"/><circle cx="964.9" cy="91.8" r="2.9" fill="#fdd734"/><circle cx="1006.0" cy="87.2" r="2.9" fill="#fdd734"/><circle cx="949.4" cy="105.9" r="2.9" fill="#a2da54"/><circle cx="968.4" cy="109.1" r="2.9" fill="#8fb92b"/><circle cx="981.6" cy="117.0" r="2.9" fill="#8fb92b"/><circle cx="940.3" cy="120.4" r="2.9" fill="#e8474c"/><circle cx="954.4" cy="122.7" r="2.9" fill="#8fb92b"/><circle cx="968.0" cy="122.7" r="2.9" fill="#8fb92b"/><circle cx="1003.5" cy="128.9" r="2.9" fill="#fdd734"/><circle cx="944.0" cy="148.1" r="2.9" fill="#e8474c"/><circle cx="956.1" cy="148.5" r="2.9" fill="#fdd734"/><circle cx="979.1" cy="157.5" r="2.9" fill="#fdd734"/><circle cx="994.5" cy="153.3" r="2.9" fill="#e8474c"/><circle cx="1006.0" cy="153.8" r="2.9" fill="#e8474c"/><circle cx="953.0" cy="165.0" r="2.9" fill="#a2da54"/><circle cx="996.8" cy="169.4" r="2.9" fill="#fdd734"/><circle cx="948.8" cy="182.2" r="2.9" fill="#e8474c"/><circle cx="958.6" cy="179.9" r="2.9" fill="#e8474c"/><circle cx="961.1" cy="186.1" r="2.9" fill="#fdd734"/><circle cx="978.5" cy="188.8" r="2.9" fill="#8fb92b"/><circle cx="1000.4" cy="189.5" r="2.9" fill="#fdd734"/><circle cx="796.5" cy="194.0" r="2.9" fill="#e8474c"/><circle cx="838.8" cy="191.5" r="2.9" fill="#8fb92b"/><circle cx="789.1" cy="200.5" r="2.9" fill="#a2da54"/><circle cx="812.7" cy="197.7" r="2.9" fill="#8fb92b"/><circle cx="817.5" cy="195.0" r="2.9" fill="#fdd734"/><circle cx="821.1" cy="205.1" r="2.9" fill="#8fb92b"/><circle cx="837.2" cy="205.1" r="2.9" fill="#fdd734"/><circle cx="864.9" cy="201.9" r="2.9" fill="#a2da54"/><circle cx="785.0" cy="210.9" r="2.9" fill="#8fb92b"/><circle cx="799.2" cy="209.2" r="2.9" fill="#fdd734"/><circle cx="802.7" cy="209.2" r="2.9" fill="#e8474c"/><circle cx="814.8" cy="208.6" r="2.9" fill="#8fb92b"/><circle cx="818.0" cy="213.4" r="2.9" fill="#fdd734"/><circle cx="781.0" cy="216.5" r="2.9" fill="#fdd734"/><circle cx="798.5" cy="220.3" r="2.9" fill="#8fb92b"/><circle cx="822.5" cy="222.4" r="2.9" fill="#fdd734"/><circle cx="833.6" cy="219.2" r="2.9" fill="#fdd734"/><circle cx="793.9" cy="228.4" r="2.9" fill="#fdd734"/><circle cx="800.4" cy="228.0" r="2.9" fill="#fdd734"/><circle cx="789.8" cy="233.9" r="2.9" fill="#8fb92b"/><circle cx="812.9" cy="243.7" r="2.9" fill="#a2da54"/><circle cx="842.2" cy="244.3" r="2.9" fill="#e8474c"/><circle cx="855.5" cy="241.8" r="2.9" fill="#e8474c"/><circle cx="869.7" cy="240.1" r="2.9" fill="#8fb92b"/><circle cx="882.7" cy="238.0" r="2.9" fill="#fdd734"/><circle cx="885.8" cy="236.4" r="2.9" fill="#e8474c"/><circle cx="897.3" cy="235.9" r="2.9" fill="#e8474c"/><circle cx="894.2" cy="241.2" r="2.9" fill="#e8474c"/><circle cx="901.0" cy="242.0" r="2.9" fill="#e8474c"/><circle cx="910.4" cy="240.1" r="2.9" fill="#e8474c"/><circle cx="912.9" cy="227.6" r="2.9" fill="#fdd734"/><circle cx="892.5" cy="194.0" r="2.9" fill="#e8474c"/><circle cx="910.9" cy="207.1" r="2.9" fill="#fdd734"/><circle cx="918.8" cy="210.7" r="2.9" fill="#fdd734"/><circle cx="921.9" cy="203.6" r="2.9" fill="#8fb92b"/><circle cx="935.9" cy="206.7" r="2.9" fill="#8fb92b"/><circle cx="896.2" cy="210.9" r="2.9" fill="#a2da54"/><circle cx="899.4" cy="214.4" r="2.9" fill="#a2da54"/><circle cx="864.3" cy="281.3" r="2.9" fill="#e8474c"/><circle cx="905.2" cy="311.9" r="2.9" fill="#fdd734"/><circle cx="958.0" cy="196.1" r="2.9" fill="#e8474c"/><circle cx="948.2" cy="203.6" r="2.9" fill="#e8474c"/><circle cx="973.9" cy="201.1" r="2.9" fill="#fdd734"/><circle cx="979.7" cy="203.6" r="2.9" fill="#fdd734"/><circle cx="998.7" cy="201.5" r="2.9" fill="#fdd734"/><circle cx="1040.7" cy="206.7" r="2.9" fill="#fdd734"/><circle cx="978.5" cy="216.5" r="2.9" fill="#8fb92b"/><circle cx="987.4" cy="217.8" r="2.9" fill="#8fb92b"/><circle cx="998.1" cy="216.7" r="2.9" fill="#e8474c"/><circle cx="992.0" cy="220.7" r="2.9" fill="#8fb92b"/><circle cx="999.3" cy="220.3" r="2.9" fill="#8fb92b"/><circle cx="998.7" cy="225.9" r="2.9" fill="#fdd734"/><circle cx="975.3" cy="227.0" r="2.9" fill="#e8474c"/><circle cx="985.1" cy="230.5" r="2.9" fill="#fdd734"/><circle cx="980.3" cy="232.6" r="2.9" fill="#8fb92b"/><circle cx="991.2" cy="232.6" r="2.9" fill="#e8474c"/><circle cx="998.1" cy="233.2" r="2.9" fill="#8fb92b"/><circle cx="941.5" cy="232.2" r="2.9" fill="#fdd734"/><circle cx="950.3" cy="268.9" r="2.9" fill="#fdd734"/><circle cx="990.1" cy="266.2" r="2.9" fill="#a2da54"/><circle cx="982.0" cy="282.7" r="2.9" fill="#8fb92b"/><circle cx="982.6" cy="287.5" r="2.9" fill="#fdd734"/><circle cx="1001.4" cy="287.5" r="2.9" fill="#fdd734"/><circle cx="991.2" cy="292.9" r="2.9" fill="#fdd734"/><circle cx="992.7" cy="298.6" r="2.9" fill="#e8474c"/><circle cx="1050.5" cy="286.9" r="2.9" fill="#fdd734"/><circle cx="1124.2" cy="280.2" r="2.9" fill="#e8474c"/><circle cx="1006.0" cy="310.1" r="2.9" fill="#e8474c"/><circle cx="1000.4" cy="313.8" r="2.9" fill="#fdd734"/><circle cx="992.0" cy="317.8" r="2.9" fill="#fdd734"/><circle cx="853.0" cy="324.8" r="2.9" fill="#e8474c"/><circle cx="886.2" cy="333.4" r="2.9" fill="#e8474c"/><circle cx="930.5" cy="326.1" r="2.9" fill="#fdd734"/><circle cx="920.0" cy="341.9" r="2.9" fill="#8fb92b"/><circle cx="791.9" cy="358.6" r="2.9" fill="#e8474c"/><circle cx="829.0" cy="354.9" r="2.9" fill="#e8474c"/><circle cx="876.0" cy="351.3" r="2.9" fill="#e8474c"/><circle cx="934.2" cy="355.5" r="2.9" fill="#fdd734"/><circle cx="937.4" cy="359.1" r="2.9" fill="#e8474c"/><circle cx="926.1" cy="360.3" r="2.9" fill="#8fb92b"/><circle cx="912.5" cy="364.7" r="2.9" fill="#a2da54"/><circle cx="901.7" cy="368.5" r="2.9" fill="#a2da54"/><circle cx="890.0" cy="365.9" r="2.9" fill="#e8474c"/><circle cx="876.4" cy="369.9" r="2.9" fill="#fdd734"/><circle cx="856.8" cy="372.0" r="2.9" fill="#fdd734"/><circle cx="846.8" cy="374.1" r="2.9" fill="#8fb92b"/><circle cx="834.2" cy="376.8" r="2.9" fill="#a2da54"/><circle cx="857.6" cy="380.1" r="2.9" fill="#e8474c"/><circle cx="899.2" cy="383.7" r="2.9" fill="#fdd734"/><circle cx="920.0" cy="381.0" r="2.9" fill="#a2da54"/><circle cx="830.3" cy="398.5" r="2.9" fill="#fdd734"/><circle cx="834.0" cy="406.5" r="2.9" fill="#fdd734"/><circle cx="853.7" cy="401.0" r="2.9" fill="#8fb92b"/><circle cx="864.7" cy="399.8" r="2.9" fill="#a2da54"/><circle cx="878.9" cy="398.7" r="2.9" fill="#fdd734"/><circle cx="921.9" cy="395.0" r="2.9" fill="#fdd734"/><circle cx="897.3" cy="411.7" r="2.9" fill="#e8474c"/><circle cx="911.5" cy="410.2" r="2.9" fill="#fdd734"/><circle cx="848.2" cy="419.0" r="2.9" fill="#e8474c"/><circle cx="878.1" cy="430.0" r="2.9" fill="#e8474c"/><circle cx="898.5" cy="434.4" r="2.9" fill="#a2da54"/><circle cx="846.1" cy="440.9" r="2.9" fill="#fdd734"/><circle cx="1004.6" cy="322.9" r="2.9" fill="#a2da54"/><circle cx="955.7" cy="327.1" r="2.9" fill="#a2da54"/><circle cx="998.1" cy="346.5" r="2.9" fill="#fdd734"/><circle cx="1006.6" cy="344.4" r="2.9" fill="#e8474c"/><circle cx="1014.2" cy="342.8" r="2.9" fill="#fdd734"/><circle cx="971.6" cy="349.7" r="2.9" fill="#e8474c"/><circle cx="958.2" cy="353.2" r="2.9" fill="#fdd734"/><circle cx="983.3" cy="353.8" r="2.9" fill="#8fb92b"/><circle cx="974.7" cy="362.8" r="2.9" fill="#fdd734"/><circle cx="958.8" cy="365.5" r="2.9" fill="#fdd734"/><circle cx="950.9" cy="367.0" r="2.9" fill="#a2da54"/><circle cx="1003.5" cy="361.6" r="2.9" fill="#fdd734"/><circle cx="989.5" cy="370.5" r="2.9" fill="#e8474c"/><circle cx="1011.0" cy="371.6" r="2.9" fill="#fdd734"/><circle cx="965.5" cy="374.1" r="2.9" fill="#8fb92b"/><circle cx="948.8" cy="383.1" r="2.9" fill="#e8474c"/><circle cx="953.4" cy="387.7" r="2.9" fill="#fdd734"/><circle cx="1005.0" cy="388.9" r="2.9" fill="#e8474c"/><circle cx="1016.5" cy="390.0" r="2.9" fill="#e8474c"/><circle cx="964.9" cy="394.3" r="2.9" fill="#fdd734"/><circle cx="992.0" cy="401.0" r="2.9" fill="#8fb92b"/><circle cx="979.7" cy="403.5" r="2.9" fill="#fdd734"/><circle cx="1010.4" cy="399.4" r="2.9" fill="#fdd734"/><circle cx="1016.5" cy="403.3" r="2.9" fill="#fdd734"/><circle cx="1003.1" cy="407.3" r="2.9" fill="#fdd734"/><circle cx="948.8" cy="411.7" r="2.9" fill="#fdd734"/><circle cx="975.9" cy="417.3" r="2.9" fill="#fdd734"/><circle cx="951.3" cy="426.9" r="2.9" fill="#fdd734"/><circle cx="986.4" cy="425.4" r="2.9" fill="#8fb92b"/><circle cx="1011.4" cy="438.6" r="2.9" fill="#fdd734"/><circle cx="992.4" cy="442.2" r="2.9" fill="#e8474c"/><circle cx="985.8" cy="441.1" r="2.9" fill="#fdd734"/><circle cx="984.7" cy="445.3" r="2.9" fill="#8fb92b"/><circle cx="943.6" cy="446.7" r="2.9" fill="#fdd734"/><circle cx="859.4" cy="466.8" r="2.9" fill="#fdd734"/><circle cx="860.3" cy="514.6" r="2.9" fill="#fdd734"/><circle cx="891.0" cy="527.5" r="2.9" fill="#a2da54"/><circle cx="935.2" cy="530.6" r="2.9" fill="#a2da54"/><circle cx="882.0" cy="552.3" r="2.9" fill="#a2da54"/><circle cx="896.1" cy="551.8" r="2.9" fill="#fdd734"/><circle cx="848.1" cy="565.7" r="2.9" fill="#e8474c"/><circle cx="911.4" cy="568.7" r="2.9" fill="#e8474c"/><circle cx="1035.5" cy="455.7" r="2.9" fill="#e8474c"/><circle cx="942.2" cy="462.4" r="2.9" fill="#e8474c"/><circle cx="958.1" cy="457.6" r="2.9" fill="#fdd734"/><circle cx="981.4" cy="458.7" r="2.9" fill="#e8474c"/><circle cx="996.2" cy="462.4" r="2.9" fill="#8fb92b"/><circle cx="1019.6" cy="463.6" r="2.9" fill="#e8474c"/><circle cx="950.7" cy="469.8" r="2.9" fill="#e8474c"/><circle cx="973.4" cy="475.3" r="2.9" fill="#e8474c"/><circle cx="983.3" cy="477.4" r="2.9" fill="#fdd734"/><circle cx="1002.9" cy="473.7" r="2.9" fill="#e8474c"/><circle cx="1013.6" cy="473.7" r="2.9" fill="#e8474c"/><circle cx="957.0" cy="487.1" r="2.9" fill="#8fb92b"/><circle cx="1010.3" cy="488.5" r="2.9" fill="#e8474c"/><circle cx="987.0" cy="502.4" r="2.9" fill="#8fb92b"/><circle cx="1000.6" cy="501.2" r="2.9" fill="#e8474c"/><circle cx="1019.6" cy="499.4" r="2.9" fill="#fdd734"/><circle cx="1012.9" cy="516.5" r="2.9" fill="#e8474c"/><circle cx="976.4" cy="523.6" r="2.9" fill="#a2da54"/><circle cx="1011.0" cy="535.2" r="2.9" fill="#8fb92b"/><circle cx="981.4" cy="539.3" r="2.9" fill="#e8474c"/><circle cx="1001.8" cy="542.3" r="2.9" fill="#e8474c"/><circle cx="975.2" cy="552.3" r="2.9" fill="#fdd734"/><circle cx="961.8" cy="559.0" r="2.9" fill="#e8474c"/><circle cx="947.0" cy="562.4" r="2.9" fill="#fdd734"/><circle cx="997.6" cy="574.0" r="2.9" fill="#a2da54"/><circle cx="1045.4" cy="576.5" r="2.9" fill="#e8474c"/><rect x="1043.0" y="62.2" width="19.6" height="19.2" fill="#fff" stroke="#4f9dd6" stroke-width="0.8"/><circle cx="1051.4" cy="70" r="2.6" fill="none" stroke="#4f9dd6" stroke-width="0.9"/><line x1="1053.4" y1="72" x2="1056.8" y2="75.2" stroke="#4f9dd6" stroke-width="1.0"/><rect x="1067.7" y="62.2" width="75.0" height="19.2" fill="#fff" stroke="#4f9dd6" stroke-width="0.8"/><line x1="1086.5" y1="62.2" x2="1086.5" y2="81.4" stroke="#4f9dd6" stroke-width="0.8"/><line x1="1104.7" y1="62.2" x2="1104.7" y2="81.4" stroke="#4f9dd6" stroke-width="0.8"/><line x1="1123.2" y1="62.2" x2="1123.2" y2="81.4" stroke="#4f9dd6" stroke-width="0.8"/><path d="M1073.0,70.9 L1077.5,66.5 L1082.0,70.9 M1074.1,70.0 V75.6 H1080.9 V70.0 M1076.5,75.6 V72.6 H1078.5 V75.6" fill="none" stroke="#4f9dd6" stroke-width="0.85"/><rect x="1092" y="66.9" width="1.2" height="1.2" fill="#4f9dd6"/><line x1="1094.8" y1="67.5" x2="1100.1" y2="67.5" stroke="#4f9dd6" stroke-width="0.75"/><rect x="1092" y="69.5" width="1.2" height="1.2" fill="#4f9dd6"/><line x1="1094.8" y1="70.1" x2="1100.1" y2="70.1" stroke="#4f9dd6" stroke-width="0.75"/><rect x="1092" y="72.1" width="1.2" height="1.2" fill="#4f9dd6"/><line x1="1094.8" y1="72.7" x2="1100.1" y2="72.7" stroke="#4f9dd6" stroke-width="0.75"/><rect x="1092" y="74.7" width="1.2" height="1.2" fill="#4f9dd6"/><line x1="1094.8" y1="75.3" x2="1100.1" y2="75.3" stroke="#4f9dd6" stroke-width="0.75"/><path d="M1114.2,66.5 l4.8,2.8 l-4.8,2.8 l-4.8,-2.8 z" fill="none" stroke="#4f9dd6" stroke-width="0.8"/><path d="M1109.4,71.2 l4.8,2.8 l4.8,-2.8 M1109.4,73.0 l4.8,2.8 l4.8,-2.8" fill="none" stroke="#4f9dd6" stroke-width="0.8"/><rect x="1128.1" y="66.5" width="4.2" height="4.1" fill="#4f9dd6"/><path d="M1128.8999999999999,67.8 h1.4 M1130.3,69.2 h1.3" stroke="#d6e9f7" stroke-width="0.7" fill="none"/><rect x="1128.1" y="71.9" width="4.2" height="4.1" fill="#4f9dd6"/><path d="M1128.8999999999999,73.2 h1.4 M1130.3,74.60000000000001 h1.3" stroke="#d6e9f7" stroke-width="0.7" fill="none"/><rect x="1133.6" y="66.5" width="4.2" height="4.1" fill="#4f9dd6"/><path d="M1134.3999999999999,67.8 h1.4 M1135.8,69.2 h1.3" stroke="#d6e9f7" stroke-width="0.7" fill="none"/><rect x="1133.6" y="71.9" width="4.2" height="4.1" fill="#4f9dd6"/><path d="M1134.3999999999999,73.2 h1.4 M1135.8,74.60000000000001 h1.3" stroke="#d6e9f7" stroke-width="0.7" fill="none"/><rect x="1123.6" y="532" width="19.4" height="39" fill="#bbb" opacity="0.35"/><rect x="1123.2" y="531.4" width="19.7" height="39.4" fill="#fff"/><line x1="1123.2" y1="551.1" x2="1142.9" y2="551.1" stroke="#e0e0e0" stroke-width="0.6"/><path d="M1128.4,541.1 h9.2 M1133,536.5 v9.2 M1128.4,561.2 h9.2" stroke="#6e6e6e" stroke-width="0.7" fill="none"/><rect x="711.5" y="559.5" width="64" height="11.8" fill="#fff" opacity="0.55"/><path d="M713.2,560.5 v9.6 h60.8 v-9.6" fill="none" stroke="#3c3c3c" stroke-width="1.3"/><text x="717" y="567.8" font-size="7.6" fill="#333">100 m</text><rect x="702.5" y="579.8" width="450.0" height="10" fill="#fff" opacity="0.68"/><text x="705.5" y="587.4" font-size="7.5" fill="#6a6a6a" textLength="378" lengthAdjust="spacingAndGlyphs">Esri, Intermap, NASA, NGA, USGS | GSI, Esri, HERE, Garmin, INCREMENT P, METI/NASA, USGS | ESRIジャパン株…</text><text x="1095" y="587.4" font-size="7.5" fill="#6a6a6a" textLength="53" lengthAdjust="spacingAndGlyphs">Powered by Esri</text></g></svg>
<div class="a" style="left:1195.0px;top:303.8px;width:202.4px;height:376.2px;border-radius:13px 13px 0 0;background:linear-gradient(#272727,#000 367px);"></div>
<div class="a" style="left:1275.0px;top:658.2px;width:42px;height:2.8px;border-radius:1.4px;background:#353535;"></div>
<div class="a" style="left:1203.0px;top:320.0px;width:186.0px;height:330.8px;background:#f4f4f2;overflow:hidden;border-radius:0;">
<div class="a" style="left:0;top:0;width:186.0px;height:9.7px;background:#000;"></div>
<div class="a" style="left:3.2px;top:5.5px;width:1.5px;height:1.6px;background:#fff;"></div>
<div class="a" style="left:5.4px;top:4.5px;width:1.5px;height:2.6px;background:#fff;"></div>
<div class="a" style="left:7.6px;top:3.3px;width:1.5px;height:3.8px;background:#fff;"></div>
<div class="a" style="left:9.8px;top:2.1px;width:1.5px;height:5.0px;background:#fff;"></div>
<svg class="a" style="left:23.8px;top:2.1px" width="7.2" height="5.4" viewBox="0 0 8 6"><path d="M4,5.9 L0.2,1.9 Q4,-1.4 7.8,1.9 Z" fill="#fff"/><path d="M1.3,3.1 Q4,0.9 6.7,3.1 M2.5,4.4 Q4,3.2 5.5,4.4" stroke="#000" stroke-width="0.55" fill="none"/></svg>
<div class="t" style="left:43px;width:100px;text-align:center;top:1.5px;font-size:6.2px;line-height:7.2px;color:#fff;font-weight:bold;">16:55</div>
<svg class="a" style="left:147.0px;top:2.5px" width="6" height="6" viewBox="0 0 6 6"><path d="M5.2,0.4 L0.6,2.6 L2.8,3 L3.2,5.2 Z" fill="#fff"/></svg>
<div class="t" style="left:153.5px;top:1.5px;font-size:5.8px;line-height:7.2px;color:#fff;">100%</div>
<div class="a" style="left:171.2px;top:2.8px;width:9.6px;height:4.6px;border-radius:1px;background:#3bd354;"></div>
<svg class="a" style="left:174.0px;top:2.5px" width="4" height="5.2" viewBox="0 0 4 5.2"><path d="M2.6,0 L0.4,3 H1.8 L1.4,5.2 L3.6,2.2 H2.2 Z" fill="#fff"/></svg>
<div class="a" style="left:0;top:9.7px;width:186.0px;height:24.3px;background:#35862c;"></div>
<svg class="a" style="left:4.5px;top:16.8px" width="11" height="11" viewBox="0 0 11 11"><path d="M0.8,0.8 L10.2,10.2 M10.2,0.8 L0.8,10.2" stroke="#fff" stroke-width="0.8" fill="none"/></svg>
<div class="a" style="left:171.0px;top:17.6px;width:10px;height:0.8px;background:rgba(255,255,255,0.78);"></div>
<div class="a" style="left:171.0px;top:21.6px;width:10px;height:0.8px;background:rgba(255,255,255,0.6);"></div>
<div class="a" style="left:171.0px;top:25.6px;width:10px;height:0.8px;background:rgba(255,255,255,0.5);"></div>
<svg class="a" style="left:145.0px;top:14.3px" width="16" height="16" viewBox="0 0 16 16"><path d="M5.6,2.6 L8.4,5.0 M11.0,7.3 L13.8,9.7" stroke="#fff" stroke-width="2" fill="none"/><path d="M9.7,4.0 L11.8,6.1 L9.7,8.2 L7.6,6.1 Z" fill="#fff"/><path d="M7.6,6.6 A4.4,4.4 0 0 0 11.0,10.4 M5.7,6.6 A6.3,6.3 0 0 0 10.7,12.3 M3.8,6.6 A8.2,8.2 0 0 0 10.4,14.2 M1.9,6.8 A10,10 0 0 0 9.6,15.6" stroke="rgba(255,255,255,0.6)" stroke-width="0.6" fill="none"/></svg>
<div class="t" style="left:49.8px;top:17.7px;font-size:6.7px;line-height:8.4px;color:#fff;font-size:6.34px;width:86.4px;text-align:justify;text-align-last:justify;text-justify:inter-character;">応急危険度判定調査（木造）</div>
<div class="t" style="left:7.3px;top:40.9px;font-size:7.2px;line-height:8.6px;color:#161616;font-weight:normal;width:14.6px;text-align:justify;text-align-last:justify;text-justify:inter-character;">調査</div>
<div class="a" style="left:5.8px;top:51.8px;width:174.2px;height:122.2px;background:#e9e9e9;border-radius:1.5px;"></div>
<div class="a" style="left:13.5px;top:62.0px;width:0;height:0;border-left:3px solid transparent;border-right:3px solid transparent;border-top:3.4px solid #6a6a6a;"></div>
<div class="t" style="left:25.2px;top:58.8px;font-size:7.5px;line-height:9.0px;color:#2a2a2a;font-weight:bold;font-size:7.24px;width:31.0px;text-align:justify;text-align-last:justify;text-justify:inter-character;">調査方法</div>
<div class="t" style="left:12.7px;top:73.8px;font-size:7.3px;line-height:8.8px;color:#161616;font-weight:normal;width:29.3px;text-align:justify;text-align-last:justify;text-justify:inter-character;">調査方法</div>
<div class="a" style="left:12.5px;top:90.1px;width:11.4px;height:11.4px;border-radius:50%;background:#fff;"></div><div class="a" style="left:15.5px;top:93.1px;width:5.4px;height:5.4px;border-radius:50%;background:#000;"></div>
<div class="t" style="left:27.8px;top:91.7px;font-size:6.9px;line-height:8.3px;color:#161616;font-weight:normal;font-size:6.84px;width:55.7px;text-align:justify;text-align-last:justify;text-justify:inter-character;">外観調査のみ実施</div>
<div class="a" style="left:95.3px;top:90.1px;width:11.4px;height:11.4px;border-radius:50%;background:#fff;"></div>
<div class="t" style="left:110.6px;top:87.7px;font-size:6.9px;line-height:8.3px;color:#161616;font-weight:normal;width:63.0px;text-align:justify;text-align-last:justify;text-justify:inter-character;">内観調査も併せて実</div>
<div class="t" style="left:110.6px;top:96.2px;font-size:6.9px;line-height:8.3px;color:#161616;font-weight:normal;">施</div>
<div class="t" style="left:12.7px;top:116.6px;font-size:7.3px;line-height:8.8px;color:#161616;font-weight:normal;width:96.2px;text-align:justify;text-align-last:justify;text-justify:inter-character;">1. 一見して危険と判定される</div>
<div class="t" style="left:12.3px;top:129.6px;font-size:5.7px;line-height:6.8px;color:#3c3c3c;font-weight:normal;font-size:5.33px;width:161.2px;text-align:justify;text-align-last:justify;text-justify:inter-character;">該当する場合はチェックを入れた後、判定は危険(赤)とし総合判</div>
<div class="t" style="left:12.3px;top:137.1px;font-size:5.7px;line-height:6.8px;color:#3c3c3c;font-weight:normal;">定へ</div>
<div class="a" style="left:13.0px;top:148.0px;width:160.0px;height:16.5px;background:#fff;"></div>
<div class="t" style="left:16.6px;top:152.4px;font-size:6.5px;line-height:7.8px;color:#161616;font-weight:normal;font-size:6.2px;width:26.8px;text-align:justify;text-align-last:justify;text-justify:inter-character;">該当なし</div>
<svg class="a" style="left:162.0px;top:154.3px" width="6" height="4" viewBox="0 0 6 4"><path d="M0.4,0.5 L3,3.2 L5.6,0.5" stroke="#777" stroke-width="0.7" fill="none"/></svg>
<div class="a" style="left:5.8px;top:177.4px;width:174.2px;height:202.6px;background:#e9e9e9;border-radius:1.5px;"></div>
<div class="a" style="left:13.5px;top:192.9px;width:0;height:0;border-left:3px solid transparent;border-right:3px solid transparent;border-top:3.4px solid #6a6a6a;"></div>
<div class="t" style="left:25.2px;top:184.1px;font-size:7.7px;line-height:9.2px;color:#222;font-weight:bold;font-size:7.58px;width:142.8px;text-align:justify;text-align-last:justify;text-justify:inter-character;">2. 隣接建築物・周辺地盤等及び構造躯体</div>
<div class="t" style="left:25.2px;top:195.5px;font-size:7.7px;line-height:9.2px;color:#222;font-weight:bold;font-size:7.45px;width:54.4px;text-align:justify;text-align-last:justify;text-justify:inter-character;">に関する危険度</div>
<div class="t" style="left:12.0px;top:210.6px;font-size:7.3px;line-height:8.8px;color:#161616;font-weight:normal;width:141.0px;text-align:justify;text-align-last:justify;text-justify:inter-character;">①隣接建築物・周辺地盤の破壊による危険</div>
<div class="a" style="left:12.5px;top:227.2px;width:11.4px;height:11.4px;border-radius:50%;background:#fff;"></div><div class="a" style="left:15.5px;top:230.2px;width:5.4px;height:5.4px;border-radius:50%;background:#000;"></div>
<div class="t" style="left:28.5px;top:228.8px;font-size:6.9px;line-height:8.3px;color:#161616;font-weight:normal;font-size:6.61px;width:34.3px;text-align:justify;text-align-last:justify;text-justify:inter-character;">1. 危険無し</div>
<div class="a" style="left:95.3px;top:227.2px;width:11.4px;height:11.4px;border-radius:50%;background:#fff;"></div>
<div class="t" style="left:111.0px;top:228.8px;font-size:6.9px;line-height:8.3px;color:#333;font-weight:normal;font-size:6.78px;width:28.3px;text-align:justify;text-align-last:justify;text-justify:inter-character;">2. 不明確</div>
<div class="a" style="left:12.5px;top:243.0px;width:11.4px;height:11.4px;border-radius:50%;background:#fff;"></div>
<div class="t" style="left:28.5px;top:244.6px;font-size:6.9px;line-height:8.3px;color:#161616;font-weight:normal;font-size:6.55px;width:34.0px;text-align:justify;text-align-last:justify;text-justify:inter-character;">3. 危険あり</div>
<div class="t" style="left:12.0px;top:266.1px;font-size:7.3px;line-height:8.8px;color:#161616;font-weight:normal;width:74.0px;text-align:justify;text-align-last:justify;text-justify:inter-character;">②構造躯体の不同沈下</div>
<div class="a" style="left:12.5px;top:290.5px;width:11.4px;height:11.4px;border-radius:50%;background:#fff;"></div><div class="a" style="left:15.5px;top:293.5px;width:5.4px;height:5.4px;border-radius:50%;background:#000;"></div>
<div class="t" style="left:28.5px;top:292.1px;font-size:6.9px;line-height:8.3px;color:#161616;font-weight:normal;font-size:6.75px;width:48.8px;text-align:justify;text-align-last:justify;text-justify:inter-character;">1. 無し又は軽微</div>
<div class="a" style="left:95.5px;top:290.5px;width:11.4px;height:11.4px;border-radius:50%;background:#fff;"></div>
<div class="t" style="left:111.0px;top:282.7px;font-size:6.9px;line-height:8.3px;color:#161616;font-weight:normal;font-size:6.79px;width:56.0px;text-align:justify;text-align-last:justify;text-justify:inter-character;">2. 著しい床、屋根</div>
<div class="t" style="left:111.0px;top:292.1px;font-size:6.9px;line-height:8.3px;color:#161616;font-weight:normal;font-size:6.81px;width:62.4px;text-align:justify;text-align-last:justify;text-justify:inter-character;">の落ち込み、浮き上</div>
<div class="t" style="left:111.0px;top:300.5px;font-size:6.9px;line-height:8.3px;color:#161616;font-weight:normal;">がり</div>
<div class="a" style="left:0.0px;top:306.4px;width:186.0px;height:1.6px;background:#35862c;"></div>
<div class="a" style="left:0.0px;top:308.0px;width:186.0px;height:32.0px;background:#f5f5f3;"></div>
<svg class="a" style="left:7.4px;top:314.7px" width="6" height="10" viewBox="0 0 6 10"><path d="M5,0.6 L1,5 L5,9.4" stroke="#222" stroke-width="0.8" fill="none"/></svg>
<div class="t" style="left:0;width:186.0px;text-align:center;top:315.6px;font-size:7.1px;line-height:8.6px;color:#222;">3/3</div>
<svg class="a" style="left:170.0px;top:314.7px" width="12" height="10" viewBox="0 0 12 10"><path d="M0.8,5.6 L4,9 L11.2,1" stroke="#222" stroke-width="0.9" fill="none"/></svg>
</div>
<div class="a" style="left:1426.0px;top:308.0px;width:203.4px;height:372.0px;border-radius:13px 13px 0 0;background:linear-gradient(#272727,#000 363px);"></div>
<div class="a" style="left:1506.0px;top:661.2px;width:42px;height:2.8px;border-radius:1.4px;background:#353535;"></div>
<div class="a" style="left:1435.0px;top:324.8px;width:186.0px;height:329.0px;background:#f4f4f2;overflow:hidden;border-radius:3px 3px 7px 7px;">
<div class="a" style="left:0;top:0;width:186.0px;height:8.2px;background:#000;"></div>
<div class="a" style="left:3.2px;top:4.0px;width:1.5px;height:1.6px;background:#fff;"></div>
<div class="a" style="left:5.4px;top:3.0px;width:1.5px;height:2.6px;background:#fff;"></div>
<div class="a" style="left:7.6px;top:1.8px;width:1.5px;height:3.8px;background:#fff;"></div>
<div class="a" style="left:9.8px;top:0.6px;width:1.5px;height:5.0px;background:#fff;"></div>
<svg class="a" style="left:23.8px;top:0.6px" width="7.2" height="5.4" viewBox="0 0 8 6"><path d="M4,5.9 L0.2,1.9 Q4,-1.4 7.8,1.9 Z" fill="#fff"/><path d="M1.3,3.1 Q4,0.9 6.7,3.1 M2.5,4.4 Q4,3.2 5.5,4.4" stroke="#000" stroke-width="0.55" fill="none"/></svg>
<div class="t" style="left:43px;width:100px;text-align:center;top:-0.0px;font-size:6.2px;line-height:7.2px;color:#fff;font-weight:bold;">16:55</div>
<svg class="a" style="left:147.0px;top:1.0px" width="6" height="6" viewBox="0 0 6 6"><path d="M5.2,0.4 L0.6,2.6 L2.8,3 L3.2,5.2 Z" fill="#fff"/></svg>
<div class="t" style="left:153.5px;top:-0.0px;font-size:5.8px;line-height:7.2px;color:#fff;">100%</div>
<div class="a" style="left:171.2px;top:1.3px;width:9.6px;height:4.6px;border-radius:1px;background:#3bd354;"></div>
<svg class="a" style="left:174.0px;top:1.0px" width="4" height="5.2" viewBox="0 0 4 5.2"><path d="M2.6,0 L0.4,3 H1.8 L1.4,5.2 L3.6,2.2 H2.2 Z" fill="#fff"/></svg>
<div class="a" style="left:0;top:8.2px;width:186.0px;height:24.4px;background:#1a92d8;"></div>
<svg class="a" style="left:4.5px;top:15.4px" width="11" height="11" viewBox="0 0 11 11"><path d="M0.8,0.8 L10.2,10.2 M10.2,0.8 L0.8,10.2" stroke="#fff" stroke-width="0.8" fill="none"/></svg>
<div class="a" style="left:171.0px;top:16.2px;width:10px;height:0.8px;background:rgba(255,255,255,0.78);"></div>
<div class="a" style="left:171.0px;top:20.2px;width:10px;height:0.8px;background:rgba(255,255,255,0.6);"></div>
<div class="a" style="left:171.0px;top:24.2px;width:10px;height:0.8px;background:rgba(255,255,255,0.5);"></div>
<svg class="a" style="left:145.0px;top:12.9px" width="16" height="16" viewBox="0 0 16 16"><path d="M5.6,2.6 L8.4,5.0 M11.0,7.3 L13.8,9.7" stroke="#fff" stroke-width="2" fill="none"/><path d="M9.7,4.0 L11.8,6.1 L9.7,8.2 L7.6,6.1 Z" fill="#fff"/><path d="M7.6,6.6 A4.4,4.4 0 0 0 11.0,10.4 M5.7,6.6 A6.3,6.3 0 0 0 10.7,12.3 M3.8,6.6 A8.2,8.2 0 0 0 10.4,14.2 M1.9,6.8 A10,10 0 0 0 9.6,15.6" stroke="rgba(255,255,255,0.6)" stroke-width="0.6" fill="none"/></svg>
<div class="t" style="left:47.9px;top:12.5px;font-size:5.9px;line-height:8.2px;color:#fff;font-size:5.38px;width:91.2px;text-align:justify;text-align-last:justify;text-justify:inter-character;">応急危険度判定調査 (鉄筋及び鉄骨鉄</div>
<div class="t" style="left:49.6px;top:20.7px;font-size:5.9px;line-height:8.2px;color:#fff;font-size:5.14px;width:87.8px;text-align:justify;text-align-last:justify;text-justify:inter-character;">筋コンクリート造 (RC造及びSRC造))</div>
<div class="t" style="left:7.3px;top:39.1px;font-size:7.2px;line-height:8.6px;color:#161616;font-weight:normal;width:14.6px;text-align:justify;text-align-last:justify;text-justify:inter-character;">調査</div>
<div class="a" style="left:5.8px;top:50.0px;width:174.2px;height:122.2px;background:#e9e9e9;border-radius:1.5px;"></div>
<div class="a" style="left:13.5px;top:60.2px;width:0;height:0;border-left:3px solid transparent;border-right:3px solid transparent;border-top:3.4px solid #6a6a6a;"></div>
<div class="t" style="left:25.2px;top:57.0px;font-size:7.5px;line-height:9.0px;color:#2a2a2a;font-weight:bold;font-size:7.24px;width:31.0px;text-align:justify;text-align-last:justify;text-justify:inter-character;">調査方法</div>
<div class="t" style="left:12.7px;top:72.0px;font-size:7.3px;line-height:8.8px;color:#161616;font-weight:normal;width:29.3px;text-align:justify;text-align-last:justify;text-justify:inter-character;">調査方法</div>
<div class="a" style="left:12.5px;top:88.3px;width:11.4px;height:11.4px;border-radius:50%;background:#fff;"></div><div class="a" style="left:15.5px;top:91.3px;width:5.4px;height:5.4px;border-radius:50%;background:#000;"></div>
<div class="t" style="left:27.8px;top:89.9px;font-size:6.9px;line-height:8.3px;color:#161616;font-weight:normal;font-size:6.84px;width:55.7px;text-align:justify;text-align-last:justify;text-justify:inter-character;">外観調査のみ実施</div>
<div class="a" style="left:95.3px;top:88.3px;width:11.4px;height:11.4px;border-radius:50%;background:#fff;"></div>
<div class="t" style="left:110.6px;top:85.9px;font-size:6.9px;line-height:8.3px;color:#161616;font-weight:normal;width:63.0px;text-align:justify;text-align-last:justify;text-justify:inter-character;">内観調査も併せて実</div>
<div class="t" style="left:110.6px;top:94.4px;font-size:6.9px;line-height:8.3px;color:#161616;font-weight:normal;">施</div>
<div class="t" style="left:12.7px;top:114.8px;font-size:7.3px;line-height:8.8px;color:#161616;font-weight:normal;width:96.2px;text-align:justify;text-align-last:justify;text-justify:inter-character;">1. 一見して危険と判定される</div>
<div class="t" style="left:12.3px;top:127.8px;font-size:5.7px;line-height:6.8px;color:#3c3c3c;font-weight:normal;font-size:5.33px;width:161.2px;text-align:justify;text-align-last:justify;text-justify:inter-character;">該当する場合はチェックを入れた後、判定は危険(赤)とし総合判</div>
<div class="t" style="left:12.3px;top:135.3px;font-size:5.7px;line-height:6.8px;color:#3c3c3c;font-weight:normal;">定へ</div>
<div class="a" style="left:13.0px;top:146.2px;width:160.0px;height:16.5px;background:#fff;"></div>
<div class="t" style="left:16.6px;top:150.6px;font-size:6.5px;line-height:7.8px;color:#161616;font-weight:normal;font-size:6.2px;width:26.8px;text-align:justify;text-align-last:justify;text-justify:inter-character;">該当なし</div>
<svg class="a" style="left:162.0px;top:152.5px" width="6" height="4" viewBox="0 0 6 4"><path d="M0.4,0.5 L3,3.2 L5.6,0.5" stroke="#777" stroke-width="0.7" fill="none"/></svg>
<div class="a" style="left:5.8px;top:175.6px;width:174.2px;height:202.6px;background:#e9e9e9;border-radius:1.5px;"></div>
<div class="a" style="left:13.5px;top:191.1px;width:0;height:0;border-left:3px solid transparent;border-right:3px solid transparent;border-top:3.4px solid #6a6a6a;"></div>
<div class="t" style="left:25.2px;top:182.3px;font-size:7.7px;line-height:9.2px;color:#222;font-weight:bold;font-size:7.58px;width:142.8px;text-align:justify;text-align-last:justify;text-justify:inter-character;">2. 隣接建築物・周辺地盤等及び構造躯体</div>
<div class="t" style="left:25.2px;top:193.7px;font-size:7.7px;line-height:9.2px;color:#222;font-weight:bold;font-size:7.45px;width:54.4px;text-align:justify;text-align-last:justify;text-justify:inter-character;">に関する危険度</div>
<div class="a" style="left:12.2px;top:204.2px;width:161.8px;height:60.4px;background:#e0e0e0;border-radius:1.5px;"></div>
<div class="a" style="left:20.0px;top:214.5px;width:0;height:0;border-left:3px solid transparent;border-right:3px solid transparent;border-top:3.4px solid #6a6a6a;"></div>
<div class="t" style="left:31.0px;top:211.0px;font-size:7.8px;line-height:9.4px;color:#2c2c2c;font-weight:normal;font-size:7.44px;width:34.8px;text-align:justify;text-align-last:justify;text-justify:inter-character;">判定（1）</div>
<div class="t" style="left:17.8px;top:226.5px;font-size:7.3px;line-height:8.8px;color:#161616;font-weight:normal;width:109.9px;text-align:justify;text-align-last:justify;text-justify:inter-character;">①損傷度Ⅲ以上の損傷部材の有無</div>
<div class="a" style="left:18.6px;top:242.7px;width:11.4px;height:11.4px;border-radius:50%;background:#fff;"></div><div class="a" style="left:21.6px;top:245.7px;width:5.4px;height:5.4px;border-radius:50%;background:#000;"></div>
<div class="t" style="left:34.0px;top:244.3px;font-size:6.9px;line-height:8.3px;color:#222;font-weight:bold;font-size:6.75px;width:21.3px;text-align:justify;text-align-last:justify;text-justify:inter-character;">1. 無し</div>
<div class="a" style="left:95.3px;top:242.7px;width:11.4px;height:11.4px;border-radius:50%;background:#fff;"></div>
<div class="t" style="left:111.0px;top:244.3px;font-size:6.9px;line-height:8.3px;color:#222;font-weight:bold;font-size:6.44px;width:20.3px;text-align:justify;text-align-last:justify;text-justify:inter-character;">2. あり</div>
<div class="a" style="left:12.2px;top:267.2px;width:161.8px;height:111.0px;background:#e0e0e0;border-radius:1.5px;"></div>
<div class="a" style="left:20.0px;top:277.5px;width:0;height:0;border-left:3px solid transparent;border-right:3px solid transparent;border-top:3.4px solid #6a6a6a;"></div>
<div class="t" style="left:31.0px;top:274.0px;font-size:7.8px;line-height:9.4px;color:#2c2c2c;font-weight:normal;font-size:7.44px;width:34.8px;text-align:justify;text-align-last:justify;text-justify:inter-character;">判定（2）</div>
<div class="t" style="left:17.8px;top:289.2px;font-size:7.3px;line-height:8.8px;color:#161616;font-weight:normal;width:141.0px;text-align:justify;text-align-last:justify;text-justify:inter-character;">②隣接建築物・周辺地盤の破壊による危険</div>
<div class="a" style="left:0.0px;top:304.6px;width:186.0px;height:1.6px;background:#1a92d8;"></div>
<div class="a" style="left:0.0px;top:306.2px;width:186.0px;height:32.0px;background:#f5f5f3;"></div>
<svg class="a" style="left:7.4px;top:312.9px" width="6" height="10" viewBox="0 0 6 10"><path d="M5,0.6 L1,5 L5,9.4" stroke="#222" stroke-width="0.8" fill="none"/></svg>
<div class="t" style="left:0;width:186.0px;text-align:center;top:313.8px;font-size:7.1px;line-height:8.6px;color:#222;">3/3</div>
<svg class="a" style="left:170.0px;top:312.9px" width="12" height="10" viewBox="0 0 12 10"><path d="M0.8,5.6 L4,9 L11.2,1" stroke="#222" stroke-width="0.9" fill="none"/></svg>
</div>
<div class="a" style="left:1657.8px;top:308.0px;width:203.4px;height:372.0px;border-radius:13px 13px 0 0;background:linear-gradient(#272727,#000 363px);"></div>
<div class="a" style="left:1737.8px;top:661.2px;width:42px;height:2.8px;border-radius:1.4px;background:#353535;"></div>
<div class="a" style="left:1666.8px;top:324.8px;width:186.0px;height:329.0px;background:#f4f4f2;overflow:hidden;border-radius:3px 3px 7px 7px;">
<div class="a" style="left:0;top:0;width:186.0px;height:8.2px;background:#000;"></div>
<div class="a" style="left:3.2px;top:4.0px;width:1.5px;height:1.6px;background:#fff;"></div>
<div class="a" style="left:5.4px;top:3.0px;width:1.5px;height:2.6px;background:#fff;"></div>
<div class="a" style="left:7.6px;top:1.8px;width:1.5px;height:3.8px;background:#fff;"></div>
<div class="a" style="left:9.8px;top:0.6px;width:1.5px;height:5.0px;background:#fff;"></div>
<svg class="a" style="left:23.8px;top:0.6px" width="7.2" height="5.4" viewBox="0 0 8 6"><path d="M4,5.9 L0.2,1.9 Q4,-1.4 7.8,1.9 Z" fill="#fff"/><path d="M1.3,3.1 Q4,0.9 6.7,3.1 M2.5,4.4 Q4,3.2 5.5,4.4" stroke="#000" stroke-width="0.55" fill="none"/></svg>
<div class="t" style="left:43px;width:100px;text-align:center;top:-0.0px;font-size:6.2px;line-height:7.2px;color:#fff;font-weight:bold;">16:55</div>
<svg class="a" style="left:147.0px;top:1.0px" width="6" height="6" viewBox="0 0 6 6"><path d="M5.2,0.4 L0.6,2.6 L2.8,3 L3.2,5.2 Z" fill="#fff"/></svg>
<div class="t" style="left:153.5px;top:-0.0px;font-size:5.8px;line-height:7.2px;color:#fff;">100%</div>
<div class="a" style="left:171.2px;top:1.3px;width:9.6px;height:4.6px;border-radius:1px;background:#3bd354;"></div>
<svg class="a" style="left:174.0px;top:1.0px" width="4" height="5.2" viewBox="0 0 4 5.2"><path d="M2.6,0 L0.4,3 H1.8 L1.4,5.2 L3.6,2.2 H2.2 Z" fill="#fff"/></svg>
<div class="a" style="left:0;top:8.2px;width:186.0px;height:24.6px;background:#b87cba;"></div>
<svg class="a" style="left:4.5px;top:15.5px" width="11" height="11" viewBox="0 0 11 11"><path d="M0.8,0.8 L10.2,10.2 M10.2,0.8 L0.8,10.2" stroke="#fff" stroke-width="0.8" fill="none"/></svg>
<div class="a" style="left:171.0px;top:16.3px;width:10px;height:0.8px;background:rgba(255,255,255,0.78);"></div>
<div class="a" style="left:171.0px;top:20.3px;width:10px;height:0.8px;background:rgba(255,255,255,0.6);"></div>
<div class="a" style="left:171.0px;top:24.3px;width:10px;height:0.8px;background:rgba(255,255,255,0.5);"></div>
<svg class="a" style="left:145.0px;top:13.0px" width="16" height="16" viewBox="0 0 16 16"><path d="M5.6,2.6 L8.4,5.0 M11.0,7.3 L13.8,9.7" stroke="#fff" stroke-width="2" fill="none"/><path d="M9.7,4.0 L11.8,6.1 L9.7,8.2 L7.6,6.1 Z" fill="#fff"/><path d="M7.6,6.6 A4.4,4.4 0 0 0 11.0,10.4 M5.7,6.6 A6.3,6.3 0 0 0 10.7,12.3 M3.8,6.6 A8.2,8.2 0 0 0 10.4,14.2 M1.9,6.8 A10,10 0 0 0 9.6,15.6" stroke="rgba(255,255,255,0.6)" stroke-width="0.6" fill="none"/></svg>
<div class="t" style="left:45.8px;top:16.4px;font-size:6.7px;line-height:8.4px;color:#fff;font-size:5.94px;width:94.5px;text-align:justify;text-align-last:justify;text-justify:inter-character;">応急危険度判定調査 (鉄骨造(S造))</div>
<div class="t" style="left:7.3px;top:39.1px;font-size:7.2px;line-height:8.6px;color:#161616;font-weight:normal;width:14.6px;text-align:justify;text-align-last:justify;text-justify:inter-character;">調査</div>
<div class="a" style="left:5.8px;top:50.0px;width:174.2px;height:122.2px;background:#e9e9e9;border-radius:1.5px;"></div>
<div class="a" style="left:13.5px;top:60.2px;width:0;height:0;border-left:3px solid transparent;border-right:3px solid transparent;border-top:3.4px solid #6a6a6a;"></div>
<div class="t" style="left:25.2px;top:57.0px;font-size:7.5px;line-height:9.0px;color:#2a2a2a;font-weight:bold;font-size:7.24px;width:31.0px;text-align:justify;text-align-last:justify;text-justify:inter-character;">調査方法</div>
<div class="t" style="left:12.7px;top:72.0px;font-size:7.3px;line-height:8.8px;color:#161616;font-weight:normal;width:29.3px;text-align:justify;text-align-last:justify;text-justify:inter-character;">調査方法</div>
<div class="a" style="left:12.5px;top:88.3px;width:11.4px;height:11.4px;border-radius:50%;background:#fff;"></div><div class="a" style="left:15.5px;top:91.3px;width:5.4px;height:5.4px;border-radius:50%;background:#000;"></div>
<div class="t" style="left:27.8px;top:89.9px;font-size:6.9px;line-height:8.3px;color:#161616;font-weight:normal;font-size:6.84px;width:55.7px;text-align:justify;text-align-last:justify;text-justify:inter-character;">外観調査のみ実施</div>
<div class="a" style="left:95.3px;top:88.3px;width:11.4px;height:11.4px;border-radius:50%;background:#fff;"></div>
<div class="t" style="left:110.6px;top:85.9px;font-size:6.9px;line-height:8.3px;color:#161616;font-weight:normal;width:63.0px;text-align:justify;text-align-last:justify;text-justify:inter-character;">内観調査も併せて実</div>
<div class="t" style="left:110.6px;top:94.4px;font-size:6.9px;line-height:8.3px;color:#161616;font-weight:normal;">施</div>
<div class="t" style="left:12.7px;top:114.8px;font-size:7.3px;line-height:8.8px;color:#161616;font-weight:normal;width:96.2px;text-align:justify;text-align-last:justify;text-justify:inter-character;">1. 一見して危険と判定される</div>
<div class="t" style="left:12.3px;top:127.8px;font-size:5.7px;line-height:6.8px;color:#3c3c3c;font-weight:normal;font-size:5.33px;width:161.2px;text-align:justify;text-align-last:justify;text-justify:inter-character;">該当する場合はチェックを入れた後、判定は危険(赤)とし総合判</div>
<div class="t" style="left:12.3px;top:135.3px;font-size:5.7px;line-height:6.8px;color:#3c3c3c;font-weight:normal;">定へ</div>
<div class="a" style="left:13.0px;top:146.2px;width:160.0px;height:16.5px;background:#fff;"></div>
<div class="t" style="left:16.6px;top:150.6px;font-size:6.5px;line-height:7.8px;color:#161616;font-weight:normal;font-size:6.2px;width:26.8px;text-align:justify;text-align-last:justify;text-justify:inter-character;">該当なし</div>
<svg class="a" style="left:162.0px;top:152.5px" width="6" height="4" viewBox="0 0 6 4"><path d="M0.4,0.5 L3,3.2 L5.6,0.5" stroke="#777" stroke-width="0.7" fill="none"/></svg>
<div class="a" style="left:5.8px;top:175.6px;width:174.2px;height:202.6px;background:#e9e9e9;border-radius:1.5px;"></div>
<div class="a" style="left:13.5px;top:191.1px;width:0;height:0;border-left:3px solid transparent;border-right:3px solid transparent;border-top:3.4px solid #6a6a6a;"></div>
<div class="t" style="left:25.2px;top:182.3px;font-size:7.7px;line-height:9.2px;color:#222;font-weight:bold;font-size:7.58px;width:142.8px;text-align:justify;text-align-last:justify;text-justify:inter-character;">2. 隣接建築物・周辺地盤等及び構造躯体</div>
<div class="t" style="left:25.2px;top:193.7px;font-size:7.7px;line-height:9.2px;color:#222;font-weight:bold;font-size:7.45px;width:54.4px;text-align:justify;text-align-last:justify;text-justify:inter-character;">に関する危険度</div>
<div class="t" style="left:12.0px;top:208.8px;font-size:7.3px;line-height:8.8px;color:#161616;font-weight:normal;width:141.0px;text-align:justify;text-align-last:justify;text-justify:inter-character;">①隣接建築物・周辺地盤の破壊による危険</div>
<div class="a" style="left:12.5px;top:225.4px;width:11.4px;height:11.4px;border-radius:50%;background:#fff;"></div><div class="a" style="left:15.5px;top:228.4px;width:5.4px;height:5.4px;border-radius:50%;background:#000;"></div>
<div class="t" style="left:28.5px;top:227.0px;font-size:6.9px;line-height:8.3px;color:#161616;font-weight:normal;font-size:6.61px;width:34.3px;text-align:justify;text-align-last:justify;text-justify:inter-character;">1. 危険無し</div>
<div class="a" style="left:95.3px;top:225.4px;width:11.4px;height:11.4px;border-radius:50%;background:#fff;"></div>
<div class="t" style="left:111.0px;top:227.0px;font-size:6.9px;line-height:8.3px;color:#333;font-weight:normal;font-size:6.78px;width:28.3px;text-align:justify;text-align-last:justify;text-justify:inter-character;">2. 不明確</div>
<div class="a" style="left:12.5px;top:241.2px;width:11.4px;height:11.4px;border-radius:50%;background:#fff;"></div>
<div class="t" style="left:28.5px;top:242.8px;font-size:6.9px;line-height:8.3px;color:#161616;font-weight:normal;font-size:6.55px;width:34.0px;text-align:justify;text-align-last:justify;text-justify:inter-character;">3. 危険あり</div>
<div class="t" style="left:11.2px;top:264.5px;font-size:7.3px;line-height:8.8px;color:#161616;font-weight:normal;width:118.6px;text-align:justify;text-align-last:justify;text-justify:inter-character;">②不同沈下による建築物全体の傾斜</div>
<div class="a" style="left:12.0px;top:280.7px;width:11.4px;height:11.4px;border-radius:50%;background:#fff;"></div><div class="a" style="left:15.0px;top:283.7px;width:5.4px;height:5.4px;border-radius:50%;background:#000;"></div>
<div class="t" style="left:28.0px;top:282.2px;font-size:7.0px;line-height:8.4px;color:#161616;font-weight:normal;width:40.8px;text-align:justify;text-align-last:justify;text-justify:inter-character;">1. 1/300以下</div>
<div class="a" style="left:95.0px;top:280.7px;width:11.4px;height:11.4px;border-radius:50%;background:#fff;"></div>
<div class="t" style="left:110.4px;top:282.2px;font-size:7.0px;line-height:8.4px;color:#333;font-weight:normal;width:54.3px;text-align:justify;text-align-last:justify;text-justify:inter-character;">2. 1/300～1/100</div>
<div class="a" style="left:12.0px;top:295.7px;width:11.4px;height:11.4px;border-radius:50%;background:#fff;"></div>
<div class="t" style="left:28.0px;top:297.2px;font-size:7.0px;line-height:8.4px;color:#161616;font-weight:normal;width:34.6px;text-align:justify;text-align-last:justify;text-justify:inter-character;">3. 1/100超</div>
<div class="a" style="left:0.0px;top:304.6px;width:186.0px;height:1.6px;background:#b87cba;"></div>
<div class="a" style="left:0.0px;top:306.2px;width:186.0px;height:32.0px;background:#f5f5f3;"></div>
<svg class="a" style="left:7.4px;top:312.9px" width="6" height="10" viewBox="0 0 6 10"><path d="M5,0.6 L1,5 L5,9.4" stroke="#222" stroke-width="0.8" fill="none"/></svg>
<div class="t" style="left:0;width:186.0px;text-align:center;top:313.8px;font-size:7.1px;line-height:8.6px;color:#222;">3/3</div>
<svg class="a" style="left:170.0px;top:312.9px" width="12" height="10" viewBox="0 0 12 10"><path d="M0.8,5.6 L4,9 L11.2,1" stroke="#222" stroke-width="0.9" fill="none"/></svg>
</div>
</div></body></html>
